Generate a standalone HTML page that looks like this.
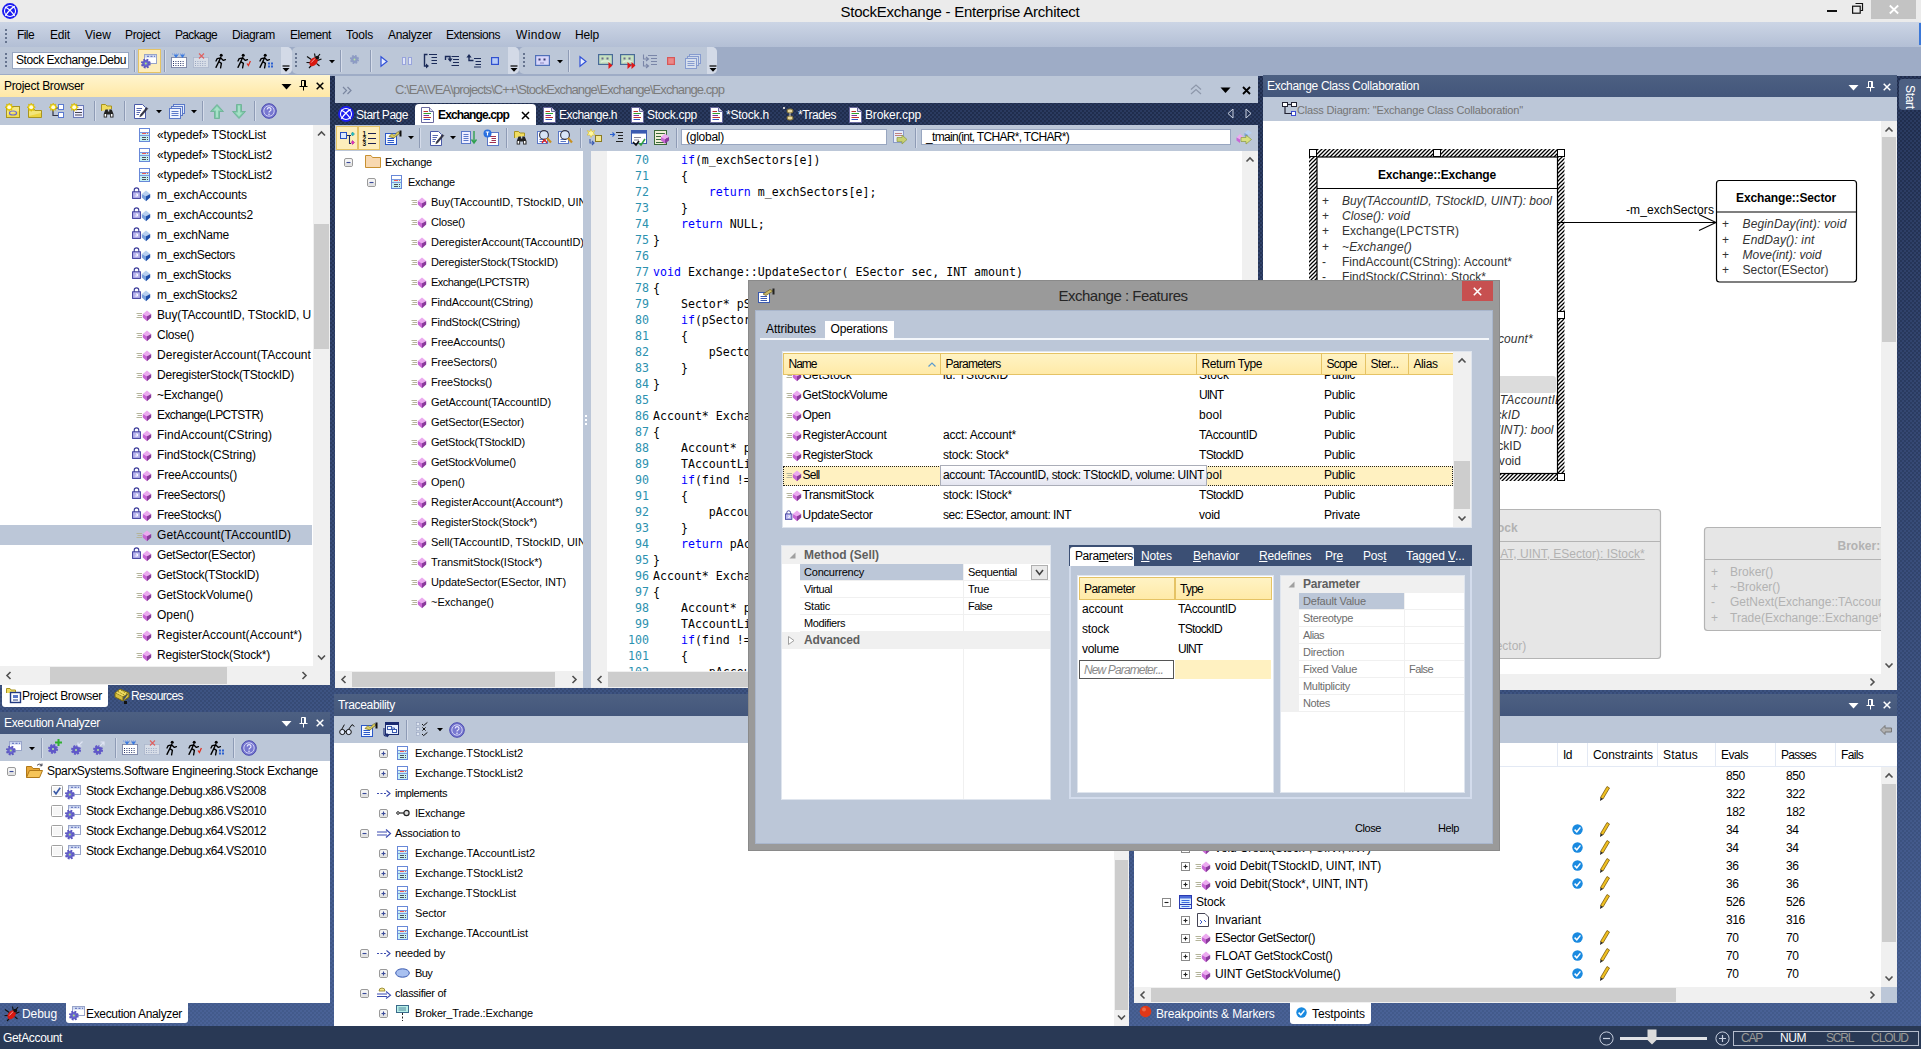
<!DOCTYPE html>
<html><head><meta charset="utf-8"><title>StockExchange - Enterprise Architect</title>
<style>
html,body{margin:0;padding:0;}
body{width:1921px;height:1049px;position:relative;overflow:hidden;background:repeating-conic-gradient(rgba(110,140,215,.14) 0% 25%,transparent 0% 50%) 0 0/4px 4px,linear-gradient(to bottom,#1e2b4a 76px,#435b8c 1026px);font-family:"Liberation Sans",sans-serif;font-size:12px;color:#000;}
div,svg{position:absolute;box-sizing:border-box;}
svg{overflow:visible;}
.t{white-space:nowrap;overflow:visible;}
.t span{display:inline-block;}
.ui{font-family:"Liberation Sans",sans-serif;font-size:12px;}
.th{font-family:"Liberation Sans",sans-serif;font-size:11px;}
.ar{font-family:"Liberation Sans",sans-serif;font-size:12px;}
.code{font-family:"DejaVu Sans Mono","Liberation Mono",monospace;font-size:11.6px;white-space:pre;}
.w{color:#fff;}
.b{font-weight:bold;}
.i{font-style:italic;}
.dots{background:none;}
.tb{background:#bcc7d8;}
.cap{background:linear-gradient(#4d6082,#43567b);}
.capa{background:linear-gradient(#fff5cf,#ffe8a6);}
.hdr{background:linear-gradient(#fff3c4,#ffeaa8);border:1px solid #e5c365;}
</style></head>
<body>
<div style="left:0px;top:0px;width:1921px;height:22px;background:#ebebeb"></div>
<svg style="left:2px;top:3px;" width="16" height="16" viewBox="0 0 16 16"><circle cx="8" cy="8" r="7" fill="#fff" stroke="#1c1cf0" stroke-width="1.9"/><circle cx="8" cy="8" r="5" fill="#1c1cf0"/><path d="M3 4C6.5 5.5 10.5 9.5 12.6 13M12.8 3.4C9.5 5 5.5 9.5 3.4 12.8" fill="none" stroke="#fff" stroke-width="1.25"/></svg>
<div class="t ui" style="left:560px;width:800px;text-align:center;top:0px;height:23px;line-height:23px;letter-spacing:-0.240px;font-size:15px;"><span id="t1">StockExchange - Enterprise Architect</span></div>
<div style="left:1827px;top:10px;width:10px;height:2px;background:#111"></div>
<svg style="left:1852px;top:3px;" width="12" height="12" viewBox="0 0 12 12"><path d="M3.5 0.5H10.5V7.5H8.5" fill="none" stroke="#111" stroke-width="1.2"/><rect x="0.6" y="3.2" width="7.6" height="7" fill="none" stroke="#111" stroke-width="1.2"/></svg>
<div style="left:1871px;top:0px;width:45px;height:19px;background:#c3c3c3"></div>
<svg style="left:1889px;top:5px;" width="10" height="9" viewBox="0 0 10 9"><path d="M0.8 0.5L9.2 8.5M9.2 0.5L0.8 8.5" stroke="#fff" stroke-width="1.8"/></svg>
<div style="left:0px;top:22px;width:1921px;height:25px;background:linear-gradient(#ccd5e5,#b3bfd5)"></div>
<div style="left:5px;top:29px;width:2px;height:2px;background:#66748f"></div>
<div style="left:5px;top:33px;width:2px;height:2px;background:#66748f"></div>
<div style="left:5px;top:37px;width:2px;height:2px;background:#66748f"></div>
<div style="left:5px;top:41px;width:2px;height:2px;background:#66748f"></div>
<div class="t ui" style="left:17px;top:23px;height:24px;line-height:24px;letter-spacing:-0.586px;"><span id="t2">File</span></div>
<div class="t ui" style="left:50px;top:23px;height:24px;line-height:24px;letter-spacing:-0.172px;"><span id="t3">Edit</span></div>
<div class="t ui" style="left:85px;top:23px;height:24px;line-height:24px;letter-spacing:0.051px;"><span id="t4">View</span></div>
<div class="t ui" style="left:125px;top:23px;height:24px;line-height:24px;letter-spacing:-0.337px;"><span id="t5">Project</span></div>
<div class="t ui" style="left:175px;top:23px;height:24px;line-height:24px;letter-spacing:-0.672px;"><span id="t6">Package</span></div>
<div class="t ui" style="left:232px;top:23px;height:24px;line-height:24px;letter-spacing:-0.337px;"><span id="t7">Diagram</span></div>
<div class="t ui" style="left:290px;top:23px;height:24px;line-height:24px;letter-spacing:-0.433px;"><span id="t8">Element</span></div>
<div class="t ui" style="left:346px;top:23px;height:24px;line-height:24px;letter-spacing:-0.203px;"><span id="t9">Tools</span></div>
<div class="t ui" style="left:388px;top:23px;height:24px;line-height:24px;letter-spacing:-0.336px;"><span id="t10">Analyzer</span></div>
<div class="t ui" style="left:446px;top:23px;height:24px;line-height:24px;letter-spacing:-0.470px;"><span id="t11">Extensions</span></div>
<div class="t ui" style="left:516px;top:23px;height:24px;line-height:24px;letter-spacing:0.385px;"><span id="t12">Window</span></div>
<div class="t ui" style="left:575px;top:23px;height:24px;line-height:24px;letter-spacing:-0.172px;"><span id="t13">Help</span></div>
<div style="left:1919px;top:23px;width:2px;height:22px;background:#3b78d8"></div>
<div style="left:0px;top:47px;width:1921px;height:29px;background:#9eacc6"></div>
<div style="left:0px;top:47px;width:292px;height:27px;background:#bcc7d8;border-radius:0 5px 5px 0"></div>
<div style="left:281px;top:47px;width:11px;height:27px;background:#d3dae7;border-radius:0 5px 5px 0"></div>
<div style="left:5px;top:53px;width:2px;height:2px;background:#66748f"></div>
<div style="left:5px;top:57px;width:2px;height:2px;background:#66748f"></div>
<div style="left:5px;top:61px;width:2px;height:2px;background:#66748f"></div>
<div style="left:5px;top:65px;width:2px;height:2px;background:#66748f"></div>
<div style="left:12px;top:52px;width:117px;height:17px;background:#fff;border:1px solid #98a6c0"></div>
<div class="t ui" style="left:16px;top:52px;height:17px;line-height:17px;letter-spacing:-0.461px;"><span id="t14">Stock Exchange.Debu</span></div>
<div style="left:134px;top:50px;width:1px;height:22px;background:#8e9bb5"></div><div style="left:135px;top:50px;width:1px;height:22px;background:#d5dcea"></div>
<div style="left:138px;top:49px;width:23px;height:24px;background:#fdedbb;border:1px solid #e5c365"></div>
<svg style="left:141px;top:54px;" width="17" height="15" viewBox="0 0 17 15"><rect x="3.5" y="0.5" width="12" height="9" fill="#fff" stroke="#98a4c8"/><rect x="4" y="1" width="11" height="2.6" fill="#ccd6f0"/><path d="M6 2.3h2M9.5 2.3h2M13 2.3h1" stroke="#5868b8" stroke-width="1"/><circle cx="4.8" cy="9.6" r="3.6" fill="#6c68d0" stroke="#5c58c0" stroke-width="2.6" stroke-dasharray="1.7 1.15"/><circle cx="4.8" cy="9.6" r="1" fill="#b0e878"/></svg>
<div style="left:164px;top:50px;width:1px;height:22px;background:#8e9bb5"></div><div style="left:165px;top:50px;width:1px;height:22px;background:#d5dcea"></div>
<svg style="left:171px;top:53px;" width="16" height="15" viewBox="0 0 16 15"><rect x="0.5" y="4.5" width="15" height="10" fill="#fff" fill-opacity="1" stroke="#28356a" stroke-dasharray="1 1"/><path d="M2 8.5H14M2 10.5H14M2 12.5H14" stroke="#28356a" stroke-dasharray="1 1.4"/><path d="M2.5 1.5L5 5L7.5 1.5ZM9 1.5L11.5 5L14 1.5Z" fill="#3a7ae0"/><path d="M1 1H15" stroke="#7a9adf" stroke-dasharray="1 1"/></svg>
<svg style="left:193px;top:53px;" width="16" height="15" viewBox="0 0 16 15"><rect x="0.5" y="4.5" width="15" height="10" fill="#fff" fill-opacity="0.4" stroke="#9aa6c0" stroke-dasharray="1 1"/><path d="M2 8.5H14M2 10.5H14M2 12.5H14" stroke="#9aa6c0" stroke-dasharray="1 1.4"/><path d="M6 0.5L11 5.5M11 0.5L6 5.5" stroke="#e06060" stroke-width="1.1"/></svg>
<svg style="left:213px;top:53px;" width="16" height="16" viewBox="0 0 16 16"><circle cx="8.2" cy="2.3" r="1.5" fill="#000"/><path d="M7.8 4.2L5.8 8.6L8.4 10.4L7.6 14.8M5.8 8.6L3 14.4M7.4 5L4.2 5.6L3 8M7.8 5L10.4 7.4L12.4 6.6" fill="none" stroke="#000" stroke-width="1.35" stroke-linecap="round" stroke-linejoin="round"/></svg>
<svg style="left:235px;top:53px;" width="16" height="16" viewBox="0 0 16 16"><circle cx="8.2" cy="2.3" r="1.5" fill="#000"/><path d="M7.8 4.2L5.8 8.6L8.4 10.4L7.6 14.8M5.8 8.6L3 14.4M7.4 5L4.2 5.6L3 8M7.8 5L10.4 7.4L12.4 6.6" fill="none" stroke="#000" stroke-width="1.35" stroke-linecap="round" stroke-linejoin="round"/><path d="M12 10.5L13.4 12.5L15.4 8" fill="none" stroke="#e03020" stroke-width="1.3"/></svg>
<svg style="left:257px;top:53px;" width="16" height="16" viewBox="0 0 16 16"><circle cx="8.2" cy="2.3" r="1.5" fill="#000"/><path d="M7.8 4.2L5.8 8.6L8.4 10.4L7.6 14.8M5.8 8.6L3 14.4M7.4 5L4.2 5.6L3 8M7.8 5L10.4 7.4L12.4 6.6" fill="none" stroke="#000" stroke-width="1.35" stroke-linecap="round" stroke-linejoin="round"/><rect x="11" y="9.5" width="2" height="2" fill="#2a60d0"/><rect x="14" y="9.5" width="2" height="2" fill="#2a60d0"/><rect x="11" y="12.5" width="2" height="2" fill="#2a60d0"/><rect x="14" y="12.5" width="2" height="2" fill="#2a60d0"/></svg>
<svg style="left:282px;top:65px;" width="8" height="7" viewBox="0 0 8 7"><path d="M0.5 1H7.5" stroke="#000" stroke-width="1.2"/><path d="M0.5 3H7.5L4 6.8Z" fill="#000"/></svg>
<div style="left:292px;top:47px;width:227px;height:27px;background:#bcc7d8;border-radius:5px"></div>
<div style="left:508px;top:47px;width:11px;height:27px;background:#d3dae7;border-radius:0 5px 5px 0"></div>
<div style="left:295px;top:53px;width:2px;height:2px;background:#66748f"></div>
<div style="left:295px;top:57px;width:2px;height:2px;background:#66748f"></div>
<div style="left:295px;top:61px;width:2px;height:2px;background:#66748f"></div>
<div style="left:295px;top:65px;width:2px;height:2px;background:#66748f"></div>
<svg style="left:306px;top:53px;" width="16" height="16" viewBox="0 0 16 16"><path d="M1 3.5L6 7M0.5 9.5L5 9.6M3 15L6.4 11.4M8.5 0.5L9.4 5M15.5 6L11 7.6M13.5 13L10.4 10.4M14 1L11.6 4" stroke="#111" stroke-width="1.2" fill="none"/><ellipse cx="7.6" cy="8.8" rx="3.5" ry="5" fill="#d81810" transform="rotate(40 7.6 8.8)"/><path d="M5.2 9.6L9.2 5.4" stroke="#f8a0a0" stroke-width="1"/><circle cx="11.3" cy="4.6" r="1.9" fill="#111"/></svg>
<svg style="left:329px;top:60px;" width="6" height="4" viewBox="0 0 6 4"><path d="M0 0H6L3 3.2Z" fill="#000"/></svg>
<div style="left:340px;top:50px;width:1px;height:22px;background:#8e9bb5"></div><div style="left:341px;top:50px;width:1px;height:22px;background:#d5dcea"></div>
<svg style="left:349px;top:53.5px;" width="11" height="11" viewBox="0 0 12 12"><circle cx="6" cy="6" r="3.7" fill="#8e9cc4" stroke="#8e9cc4" stroke-width="2.6" stroke-dasharray="1.75 1.15"/><circle cx="6" cy="6" r="1" fill="#b8e8a0"/></svg>
<div style="left:370px;top:50px;width:1px;height:22px;background:#8e9bb5"></div><div style="left:371px;top:50px;width:1px;height:22px;background:#d5dcea"></div>
<svg style="left:380px;top:56px;" width="8" height="11" viewBox="0 0 8 11"><path d="M1 0.8L7 5.5L1 10.2Z" fill="#e8eeff" stroke="#3050d8" stroke-width="1.2"/></svg>
<svg style="left:402px;top:57px;" width="11" height="8" viewBox="0 0 11 8"><rect x="0.5" y="0.5" width="3" height="7" fill="#dfe4f8" stroke="#98a4dc"/><rect x="6.5" y="0.5" width="3" height="7" fill="#dfe4f8" stroke="#98a4dc"/></svg>
<svg style="left:422px;top:53px;" width="16" height="16" viewBox="0 0 16 16"><path d="M7 1.5H15M9.5 4.5H15M9.5 7.5H15M9.5 10.5H15" stroke="#1a2a58" stroke-width="1"/><path d="M5.5 1.5H2.5V13H4.5" fill="none" stroke="#1a2a58" stroke-width="1.4"/><path d="M4 10.6L7 13L4 15.4Z" fill="#1a2a58"/></svg>
<svg style="left:444px;top:53px;" width="16" height="16" viewBox="0 0 16 16"><path d="M7.5 3.5H15M9 6.5H15M9 9.5H15M7.5 12.5H15" stroke="#1a2a58" stroke-width="1"/><path d="M1.5 7V3.5H6V6" fill="none" stroke="#1a2a58" stroke-width="1.4"/><path d="M3.5 5.5L6.2 9L8.6 5.5Z" fill="#1a2a58"/></svg>
<svg style="left:466px;top:53px;" width="16" height="16" viewBox="0 0 16 16"><path d="M8 5.5H15M9.5 8.5H15M9.5 11.5H15M8 14H15" stroke="#1a2a58" stroke-width="1"/><path d="M7.5 7.5H3V3.5" fill="none" stroke="#1a2a58" stroke-width="1.4"/><path d="M0.4 4.6L3 1L5.6 4.6Z" fill="#1a2a58"/></svg>
<svg style="left:491px;top:57px;" width="8" height="8" viewBox="0 0 8 8"><rect x="0.6" y="0.6" width="6.8" height="6.8" fill="#b8ccf8" stroke="#3050d0" stroke-width="1.2"/></svg>
<svg style="left:510px;top:65px;" width="8" height="7" viewBox="0 0 8 7"><path d="M0.5 1H7.5" stroke="#000" stroke-width="1.2"/><path d="M0.5 3H7.5L4 6.8Z" fill="#000"/></svg>
<div style="left:519px;top:47px;width:198px;height:27px;background:#bcc7d8;border-radius:5px"></div>
<div style="left:707px;top:47px;width:10px;height:27px;background:#d3dae7;border-radius:0 5px 5px 0"></div>
<div style="left:523px;top:53px;width:2px;height:2px;background:#66748f"></div>
<div style="left:523px;top:57px;width:2px;height:2px;background:#66748f"></div>
<div style="left:523px;top:61px;width:2px;height:2px;background:#66748f"></div>
<div style="left:523px;top:65px;width:2px;height:2px;background:#66748f"></div>
<svg style="left:535px;top:55px;" width="15" height="11" viewBox="0 0 15 11"><rect x="0.6" y="0.6" width="13.8" height="9.8" fill="#d8d6fa" stroke="#5070b8" stroke-width="1.2"/><rect x="3.5" y="3.5" width="2" height="2" fill="#3a3a70"/><rect x="8.5" y="3.5" width="2" height="2" fill="#3a3a70"/><path d="M5 8H9" stroke="#8a88c0"/></svg>
<svg style="left:557px;top:60px;" width="6" height="4" viewBox="0 0 6 4"><path d="M0 0H6L3 3.2Z" fill="#000"/></svg>
<div style="left:568px;top:50px;width:1px;height:22px;background:#8e9bb5"></div><div style="left:569px;top:50px;width:1px;height:22px;background:#d5dcea"></div>
<svg style="left:579px;top:56px;" width="8" height="11" viewBox="0 0 8 11"><path d="M1 0.8L7 5.5L1 10.2Z" fill="#e8eeff" stroke="#3050d8" stroke-width="1.2"/></svg>
<svg style="left:598px;top:54px;" width="16" height="16" viewBox="0 0 16 16"><rect x="0.6" y="0.6" width="13.8" height="9.8" fill="#c6e0c0" stroke="#486a98" stroke-width="1.2"/><rect x="3.5" y="3.5" width="2" height="2" fill="#6a6a88"/><rect x="8.5" y="3.5" width="2" height="2" fill="#6a6a88"/><path d="M3 8.2L5 7H10L12 8.2" fill="none" stroke="#e8f4e4" stroke-width="1"/><path d="M10.5 8L14.5 11.5L10.5 15Z" fill="#e01818"/></svg>
<svg style="left:620px;top:54px;" width="16" height="16" viewBox="0 0 16 16"><rect x="0.6" y="0.6" width="13.8" height="9.8" fill="#c6e0c0" stroke="#486a98" stroke-width="1.2"/><rect x="3.5" y="3.5" width="2" height="2" fill="#6a6a88"/><rect x="8.5" y="3.5" width="2" height="2" fill="#6a6a88"/><path d="M3 8.2L5 7H10L12 8.2" fill="none" stroke="#e8f4e4" stroke-width="1"/><path d="M7.5 8L11.5 11.5L7.5 15ZM11.5 8L15.5 11.5L11.5 15Z" fill="#e01818"/></svg>
<svg style="left:643px;top:54px;" width="15" height="15" viewBox="0 0 15 15"><path d="M5 1.5H14M8 4.5H14M8 7.5H14M8 10.5H14" stroke="#7a86a8" stroke-width="1.1"/><path d="M0.5 0.5V5H5M0.5 7V12H5M3 3L5.5 5L3 7M3 10L5.5 12L3 14" fill="none" stroke="#7a86a8" stroke-width="1.1"/></svg>
<svg style="left:667px;top:57px;" width="8" height="8" viewBox="0 0 8 8"><rect x="0.6" y="0.6" width="6.8" height="6.8" fill="#ec8888" stroke="#d85858" stroke-width="1.2"/></svg>
<svg style="left:685px;top:54px;opacity:.55;" width="16" height="15" viewBox="0 0 16 15"><rect x="4.5" y="0.5" width="11" height="9" fill="#dfe8fa" stroke="#5a78c8"/><rect x="2.5" y="2.5" width="11" height="9" fill="#dfe8fa" stroke="#5a78c8"/><rect x="0.5" y="4.5" width="11" height="10" fill="#eef3ff" stroke="#5a78c8"/><path d="M2.5 7.5H9.5M2.5 9.5H9.5M2.5 11.5H9.5" stroke="#5a78c8"/></svg>
<svg style="left:709px;top:65px;" width="8" height="7" viewBox="0 0 8 7"><path d="M0.5 1H7.5" stroke="#000" stroke-width="1.2"/><path d="M0.5 3H7.5L4 6.8Z" fill="#000"/></svg>
<div class="capa" style="left:0px;top:75px;width:330px;height:22px;"></div>
<div class="t ui" style="left:4px;top:75px;height:22px;line-height:22px;letter-spacing:-0.314px;"><span id="t15">Project Browser</span></div>
<svg style="left:281px;top:83px;" width="12" height="8" viewBox="0 0 12 8"><path d="M0.5 1H10.5L5.5 6.5Z" fill="#000"/></svg>
<svg style="left:299px;top:80px;" width="9" height="12" viewBox="0 0 9 12"><path d="M2.5 0.5H6.5V6.5M2.5 0.5V6.5M0.5 6.5H8.5M4.5 6.5V10.5M5.5 1V6" fill="none" stroke="#000" stroke-width="1"/></svg>
<svg style="left:316px;top:82px;" width="8" height="8" viewBox="0 0 8 8"><path d="M0.7 0.7L7.3 7.3M7.3 0.7L0.7 7.3" stroke="#000" stroke-width="1.5"/></svg>
<div class="tb" style="left:0px;top:97px;width:330px;height:28px;"></div>
<svg style="left:5px;top:103px;" width="16" height="16" viewBox="0 0 16 16"><rect x="1.5" y="3.5" width="13" height="11" fill="#f0dc50" stroke="#a89420"/><path d="M2 4H14V8L2 12Z" fill="#f8f0a0" fill-opacity=".6"/><ellipse cx="8" cy="10" rx="3.6" ry="2" fill="none" stroke="#6a6ad0" stroke-width="1.2"/><path d="M4.2 0L5 1.8L6.9 1.1L6.6 3L8.4 4.2L6.6 5.3L6.9 7.3L5 6.6L4.2 8.4L3.4 6.6L1.5 7.3L1.8 5.3L0 4.2L1.8 3L1.5 1.1L3.4 1.8Z" fill="#f4d800" stroke="#c8a800" stroke-width=".5"/><circle cx="4.2" cy="4.2" r="1.9" fill="#fffbe0"/></svg>
<svg style="left:27px;top:103px;" width="16" height="16" viewBox="0 0 16 16"><path d="M1.5 14.5V5.5H6.5L8 7.5H14.5V14.5Z" fill="#ecd440" stroke="#a89420"/><path d="M2 8H14V10L2 13Z" fill="#f8f0a0" fill-opacity=".6"/><path d="M4.2 0L5 1.8L6.9 1.1L6.6 3L8.4 4.2L6.6 5.3L6.9 7.3L5 6.6L4.2 8.4L3.4 6.6L1.5 7.3L1.8 5.3L0 4.2L1.8 3L1.5 1.1L3.4 1.8Z" fill="#f4d800" stroke="#c8a800" stroke-width=".5"/><circle cx="4.2" cy="4.2" r="1.9" fill="#fffbe0"/></svg>
<svg style="left:49px;top:103px;" width="16" height="16" viewBox="0 0 16 16"><path d="M4 6V12.5H9M4 5H9" fill="none" stroke="#334" stroke-width="1.2"/><rect x="9.5" y="1.5" width="5" height="5" fill="#fff" stroke="#5a7ad0"/><rect x="9.5" y="9.5" width="5" height="5" fill="#fff" stroke="#5a7ad0"/><path d="M4.2 0L5 1.8L6.9 1.1L6.6 3L8.4 4.2L6.6 5.3L6.9 7.3L5 6.6L4.2 8.4L3.4 6.6L1.5 7.3L1.8 5.3L0 4.2L1.8 3L1.5 1.1L3.4 1.8Z" fill="#f4d800" stroke="#c8a800" stroke-width=".5"/><circle cx="4.2" cy="4.2" r="1.9" fill="#fffbe0"/></svg>
<svg style="left:70px;top:103px;" width="16" height="16" viewBox="0 0 16 16"><rect x="3.5" y="2.5" width="10" height="12" fill="#eef" stroke="#6a7ab8"/><path d="M5 6.5H12M5 9.5H12M5 12H12" stroke="#445" stroke-width="1.2"/><path d="M4.2 0L5 1.8L6.9 1.1L6.6 3L8.4 4.2L6.6 5.3L6.9 7.3L5 6.6L4.2 8.4L3.4 6.6L1.5 7.3L1.8 5.3L0 4.2L1.8 3L1.5 1.1L3.4 1.8Z" fill="#f4d800" stroke="#c8a800" stroke-width=".5"/><circle cx="4.2" cy="4.2" r="1.9" fill="#fffbe0"/></svg>
<div style="left:94px;top:101px;width:1px;height:20px;background:#8e9bb5"></div><div style="left:95px;top:101px;width:1px;height:20px;background:#d5dcea"></div>
<svg style="left:101px;top:103px;" width="16" height="16" viewBox="0 0 16 16"><path d="M0.5 8V1.5H4.5L6 3H10.5V6" fill="#f0dc60" stroke="#a89420"/><path d="M4.5 6.5h2.4v2h1.4v-2h2.4l1.8 4.5v3.5h-3.4v-3h-3v3H2.7v-3.5z" fill="#222"/><rect x="3.6" y="11" width="1.6" height="2.6" fill="#fff"/><rect x="9.9" y="11" width="1.6" height="2.6" fill="#fff"/></svg>
<div style="left:124px;top:101px;width:1px;height:20px;background:#8e9bb5"></div><div style="left:125px;top:101px;width:1px;height:20px;background:#d5dcea"></div>
<svg style="left:134px;top:103px;" width="14" height="16" viewBox="0 0 14 16"><path d="M0.5 1.5H8.5L11.5 4.5V15.5H0.5Z" fill="#fff" stroke="#4a5aa8"/><path d="M2.5 5.5H8M2.5 7.5H7M2.5 9.5H6M2.5 11.5H5" stroke="#5a6ab0"/><path d="M12.6 4.4L6.6 11.6L5.8 13.8L7.8 12.8L13.8 5.6Z" fill="#334" stroke="#223" stroke-width=".5"/></svg>
<svg style="left:156px;top:110px;" width="6" height="4" viewBox="0 0 6 4"><path d="M0 0H6L3 3.2Z" fill="#000"/></svg>
<svg style="left:169px;top:104px;" width="16" height="15" viewBox="0 0 16 15"><rect x="4.5" y="0.5" width="11" height="9" fill="#dfe8fa" stroke="#5a78c8"/><rect x="2.5" y="2.5" width="11" height="9" fill="#dfe8fa" stroke="#5a78c8"/><rect x="0.5" y="4.5" width="11" height="10" fill="#eef3ff" stroke="#5a78c8"/><path d="M2.5 7.5H9.5M2.5 9.5H9.5M2.5 11.5H9.5" stroke="#5a78c8"/></svg>
<svg style="left:191px;top:110px;" width="6" height="4" viewBox="0 0 6 4"><path d="M0 0H6L3 3.2Z" fill="#000"/></svg>
<div style="left:202px;top:101px;width:1px;height:20px;background:#8e9bb5"></div><div style="left:203px;top:101px;width:1px;height:20px;background:#d5dcea"></div>
<svg style="left:210px;top:104px;" width="14" height="15" viewBox="0 0 14 15"><g><path d="M7 0.5L13.5 7.5H9.5V14.5H4.5V7.5H0.5Z" fill="#7cc8a8" stroke="#68b090" stroke-width=".8"/><path d="M7 2.5L10.5 6.5H8V13.5H6V6.5H3.5Z" fill="#a8e0c8"/></g></svg>
<svg style="left:232px;top:104px;" width="14" height="15" viewBox="0 0 14 15"><g transform="rotate(180 7 7.5)"><path d="M7 0.5L13.5 7.5H9.5V14.5H4.5V7.5H0.5Z" fill="#7cc8a8" stroke="#68b090" stroke-width=".8"/><path d="M7 2.5L10.5 6.5H8V13.5H6V6.5H3.5Z" fill="#a8e0c8"/></g></svg>
<div style="left:254px;top:101px;width:1px;height:20px;background:#8e9bb5"></div><div style="left:255px;top:101px;width:1px;height:20px;background:#d5dcea"></div>
<svg style="left:261px;top:103px;" width="16" height="16" viewBox="0 0 16 16"><circle cx="8" cy="8" r="7.3" fill="#7878d0" stroke="#4a4ab0"/><circle cx="8" cy="8" r="5.2" fill="none" stroke="#cfcff4" stroke-width="1"/><path d="M6.2 6.4a1.9 1.9 0 1 1 2.6 1.8c-.6.3-.8.6-.8 1.4" fill="none" stroke="#e8e8ff" stroke-width="1.2"/><circle cx="8" cy="11.3" r=".8" fill="#e8e8ff"/></svg>
<div style="left:0px;top:125px;width:330px;height:541px;background:#fff"></div>
<div style="left:0px;top:525px;width:312px;height:20px;background:#bcc7d8"></div>
<div style="left:0;top:125px;width:311px;height:541px;overflow:hidden">
<svg style="left:139px;top:3px;" width="11" height="14" viewBox="0 0 11 14"><rect x="0.5" y="0.5" width="10" height="13" fill="#c4f0f4" stroke="#6888d8"/><rect x="1" y="1" width="9" height="3" fill="#fff"/><path d="M1 4.5H10M1 7.5H10" stroke="#7c9ae0" stroke-width="1"/><path d="M3 5.5H7" stroke="#f05858" stroke-width="1"/><rect x="8" y="5" width="1" height="1" fill="#f05858"/><path d="M3 9.5H7M3 11.5H7" stroke="#4a5058" stroke-width="1"/><rect x="8" y="9" width="1" height="1" fill="#4a5058"/><rect x="8" y="11" width="1" height="1" fill="#4a5058"/></svg>
<div class="t ui" style="left:157px;top:0px;height:20px;line-height:20px;letter-spacing:-0.142px;"><span id="t16">«typedef» TStockList</span></div>
<svg style="left:139px;top:23px;" width="11" height="14" viewBox="0 0 11 14"><rect x="0.5" y="0.5" width="10" height="13" fill="#c4f0f4" stroke="#6888d8"/><rect x="1" y="1" width="9" height="3" fill="#fff"/><path d="M1 4.5H10M1 7.5H10" stroke="#7c9ae0" stroke-width="1"/><path d="M3 5.5H7" stroke="#f05858" stroke-width="1"/><rect x="8" y="5" width="1" height="1" fill="#f05858"/><path d="M3 9.5H7M3 11.5H7" stroke="#4a5058" stroke-width="1"/><rect x="8" y="9" width="1" height="1" fill="#4a5058"/><rect x="8" y="11" width="1" height="1" fill="#4a5058"/></svg>
<div class="t ui" style="left:157px;top:20px;height:20px;line-height:20px;letter-spacing:-0.168px;"><span id="t17">«typedef» TStockList2</span></div>
<svg style="left:139px;top:43px;" width="11" height="14" viewBox="0 0 11 14"><rect x="0.5" y="0.5" width="10" height="13" fill="#c4f0f4" stroke="#6888d8"/><rect x="1" y="1" width="9" height="3" fill="#fff"/><path d="M1 4.5H10M1 7.5H10" stroke="#7c9ae0" stroke-width="1"/><path d="M3 5.5H7" stroke="#f05858" stroke-width="1"/><rect x="8" y="5" width="1" height="1" fill="#f05858"/><path d="M3 9.5H7M3 11.5H7" stroke="#4a5058" stroke-width="1"/><rect x="8" y="9" width="1" height="1" fill="#4a5058"/><rect x="8" y="11" width="1" height="1" fill="#4a5058"/></svg>
<div class="t ui" style="left:157px;top:40px;height:20px;line-height:20px;letter-spacing:-0.168px;"><span id="t18">«typedef» TStockList2</span></div>
<svg style="left:132px;top:62px;" width="9" height="12" viewBox="0 0 9 12"><path d="M2.2 5V3.2a2.3 2.3 0 0 1 4.6 0V5" fill="none" stroke="#3a3a9a" stroke-width="1.1"/><rect x="0.6" y="4.8" width="7.8" height="6.6" fill="#b9b5ee" stroke="#3a3a9a"/><path d="M4 7h1.4v2H3.4" fill="none" stroke="#fff" stroke-width="1"/></svg>
<svg style="left:141px;top:65px;" width="10" height="12" viewBox="0 0 10 12"><path d="M5 0.5L9.2 4L5 6.2L0.8 4Z" fill="#b8d0f0"/><path d="M0.8 4L5 6.2V11.3L0.8 7.6Z" fill="#7aa0dc"/><path d="M9.2 4L5 6.2V11.3L9.2 7.6Z" fill="#1e4ea8"/></svg>
<div class="t ui" style="left:157px;top:60px;height:20px;line-height:20px;letter-spacing:-0.099px;"><span id="t19">m_exchAccounts</span></div>
<svg style="left:132px;top:82px;" width="9" height="12" viewBox="0 0 9 12"><path d="M2.2 5V3.2a2.3 2.3 0 0 1 4.6 0V5" fill="none" stroke="#3a3a9a" stroke-width="1.1"/><rect x="0.6" y="4.8" width="7.8" height="6.6" fill="#b9b5ee" stroke="#3a3a9a"/><path d="M4 7h1.4v2H3.4" fill="none" stroke="#fff" stroke-width="1"/></svg>
<svg style="left:141px;top:85px;" width="10" height="12" viewBox="0 0 10 12"><path d="M5 0.5L9.2 4L5 6.2L0.8 4Z" fill="#b8d0f0"/><path d="M0.8 4L5 6.2V11.3L0.8 7.6Z" fill="#7aa0dc"/><path d="M9.2 4L5 6.2V11.3L9.2 7.6Z" fill="#1e4ea8"/></svg>
<div class="t ui" style="left:157px;top:80px;height:20px;line-height:20px;letter-spacing:-0.138px;"><span id="t20">m_exchAccounts2</span></div>
<svg style="left:132px;top:102px;" width="9" height="12" viewBox="0 0 9 12"><path d="M2.2 5V3.2a2.3 2.3 0 0 1 4.6 0V5" fill="none" stroke="#3a3a9a" stroke-width="1.1"/><rect x="0.6" y="4.8" width="7.8" height="6.6" fill="#b9b5ee" stroke="#3a3a9a"/><path d="M4 7h1.4v2H3.4" fill="none" stroke="#fff" stroke-width="1"/></svg>
<svg style="left:141px;top:105px;" width="10" height="12" viewBox="0 0 10 12"><path d="M5 0.5L9.2 4L5 6.2L0.8 4Z" fill="#b8d0f0"/><path d="M0.8 4L5 6.2V11.3L0.8 7.6Z" fill="#7aa0dc"/><path d="M9.2 4L5 6.2V11.3L9.2 7.6Z" fill="#1e4ea8"/></svg>
<div class="t ui" style="left:157px;top:100px;height:20px;line-height:20px;letter-spacing:-0.203px;"><span id="t21">m_exchName</span></div>
<svg style="left:132px;top:122px;" width="9" height="12" viewBox="0 0 9 12"><path d="M2.2 5V3.2a2.3 2.3 0 0 1 4.6 0V5" fill="none" stroke="#3a3a9a" stroke-width="1.1"/><rect x="0.6" y="4.8" width="7.8" height="6.6" fill="#b9b5ee" stroke="#3a3a9a"/><path d="M4 7h1.4v2H3.4" fill="none" stroke="#fff" stroke-width="1"/></svg>
<svg style="left:141px;top:125px;" width="10" height="12" viewBox="0 0 10 12"><path d="M5 0.5L9.2 4L5 6.2L0.8 4Z" fill="#b8d0f0"/><path d="M0.8 4L5 6.2V11.3L0.8 7.6Z" fill="#7aa0dc"/><path d="M9.2 4L5 6.2V11.3L9.2 7.6Z" fill="#1e4ea8"/></svg>
<div class="t ui" style="left:157px;top:120px;height:20px;line-height:20px;letter-spacing:-0.362px;"><span id="t22">m_exchSectors</span></div>
<svg style="left:132px;top:142px;" width="9" height="12" viewBox="0 0 9 12"><path d="M2.2 5V3.2a2.3 2.3 0 0 1 4.6 0V5" fill="none" stroke="#3a3a9a" stroke-width="1.1"/><rect x="0.6" y="4.8" width="7.8" height="6.6" fill="#b9b5ee" stroke="#3a3a9a"/><path d="M4 7h1.4v2H3.4" fill="none" stroke="#fff" stroke-width="1"/></svg>
<svg style="left:141px;top:145px;" width="10" height="12" viewBox="0 0 10 12"><path d="M5 0.5L9.2 4L5 6.2L0.8 4Z" fill="#b8d0f0"/><path d="M0.8 4L5 6.2V11.3L0.8 7.6Z" fill="#7aa0dc"/><path d="M9.2 4L5 6.2V11.3L9.2 7.6Z" fill="#1e4ea8"/></svg>
<div class="t ui" style="left:157px;top:140px;height:20px;line-height:20px;letter-spacing:-0.336px;"><span id="t23">m_exchStocks</span></div>
<svg style="left:132px;top:162px;" width="9" height="12" viewBox="0 0 9 12"><path d="M2.2 5V3.2a2.3 2.3 0 0 1 4.6 0V5" fill="none" stroke="#3a3a9a" stroke-width="1.1"/><rect x="0.6" y="4.8" width="7.8" height="6.6" fill="#b9b5ee" stroke="#3a3a9a"/><path d="M4 7h1.4v2H3.4" fill="none" stroke="#fff" stroke-width="1"/></svg>
<svg style="left:141px;top:165px;" width="10" height="12" viewBox="0 0 10 12"><path d="M5 0.5L9.2 4L5 6.2L0.8 4Z" fill="#b8d0f0"/><path d="M0.8 4L5 6.2V11.3L0.8 7.6Z" fill="#7aa0dc"/><path d="M9.2 4L5 6.2V11.3L9.2 7.6Z" fill="#1e4ea8"/></svg>
<div class="t ui" style="left:157px;top:160px;height:20px;line-height:20px;letter-spacing:-0.362px;"><span id="t24">m_exchStocks2</span></div>
<svg style="left:136px;top:185px;" width="16" height="12" viewBox="0 0 16 12"><path d="M0.5 3.5H6M1.5 5.5H6M0.5 7.5H6" stroke="#b4b49a" stroke-width="1"/><path d="M11 0.5L15.2 4L11 6.2L6.8 4Z" fill="#ecaaf0"/><path d="M6.8 4L11 6.2V11.3L6.8 7.6Z" fill="#c866d4"/><path d="M15.2 4L11 6.2V11.3L15.2 7.6Z" fill="#8a3a9c"/></svg>
<div class="t ui" style="left:157px;top:180px;height:20px;line-height:20px;letter-spacing:-0.134px;"><span id="t25">Buy(TAccountID, TStockID, U</span></div>
<svg style="left:136px;top:205px;" width="16" height="12" viewBox="0 0 16 12"><path d="M0.5 3.5H6M1.5 5.5H6M0.5 7.5H6" stroke="#b4b49a" stroke-width="1"/><path d="M11 0.5L15.2 4L11 6.2L6.8 4Z" fill="#ecaaf0"/><path d="M6.8 4L11 6.2V11.3L6.8 7.6Z" fill="#c866d4"/><path d="M15.2 4L11 6.2V11.3L15.2 7.6Z" fill="#8a3a9c"/></svg>
<div class="t ui" style="left:157px;top:200px;height:20px;line-height:20px;letter-spacing:-0.239px;"><span id="t26">Close()</span></div>
<svg style="left:136px;top:225px;" width="16" height="12" viewBox="0 0 16 12"><path d="M0.5 3.5H6M1.5 5.5H6M0.5 7.5H6" stroke="#b4b49a" stroke-width="1"/><path d="M11 0.5L15.2 4L11 6.2L6.8 4Z" fill="#ecaaf0"/><path d="M6.8 4L11 6.2V11.3L6.8 7.6Z" fill="#c866d4"/><path d="M15.2 4L11 6.2V11.3L15.2 7.6Z" fill="#8a3a9c"/></svg>
<div class="t ui" style="left:157px;top:220px;height:20px;line-height:20px;letter-spacing:0.057px;"><span id="t27">DeregisterAccount(TAccount</span></div>
<svg style="left:136px;top:245px;" width="16" height="12" viewBox="0 0 16 12"><path d="M0.5 3.5H6M1.5 5.5H6M0.5 7.5H6" stroke="#b4b49a" stroke-width="1"/><path d="M11 0.5L15.2 4L11 6.2L6.8 4Z" fill="#ecaaf0"/><path d="M6.8 4L11 6.2V11.3L6.8 7.6Z" fill="#c866d4"/><path d="M15.2 4L11 6.2V11.3L15.2 7.6Z" fill="#8a3a9c"/></svg>
<div class="t ui" style="left:157px;top:240px;height:20px;line-height:20px;letter-spacing:-0.228px;"><span id="t28">DeregisterStock(TStockID)</span></div>
<svg style="left:136px;top:265px;" width="16" height="12" viewBox="0 0 16 12"><path d="M0.5 3.5H6M1.5 5.5H6M0.5 7.5H6" stroke="#b4b49a" stroke-width="1"/><path d="M11 0.5L15.2 4L11 6.2L6.8 4Z" fill="#ecaaf0"/><path d="M6.8 4L11 6.2V11.3L6.8 7.6Z" fill="#c866d4"/><path d="M15.2 4L11 6.2V11.3L15.2 7.6Z" fill="#8a3a9c"/></svg>
<div class="t ui" style="left:157px;top:260px;height:20px;line-height:20px;letter-spacing:-0.216px;"><span id="t29">~Exchange()</span></div>
<svg style="left:136px;top:285px;" width="16" height="12" viewBox="0 0 16 12"><path d="M0.5 3.5H6M1.5 5.5H6M0.5 7.5H6" stroke="#b4b49a" stroke-width="1"/><path d="M11 0.5L15.2 4L11 6.2L6.8 4Z" fill="#ecaaf0"/><path d="M6.8 4L11 6.2V11.3L6.8 7.6Z" fill="#c866d4"/><path d="M15.2 4L11 6.2V11.3L15.2 7.6Z" fill="#8a3a9c"/></svg>
<div class="t ui" style="left:157px;top:280px;height:20px;line-height:20px;letter-spacing:-0.591px;"><span id="t30">Exchange(LPCTSTR)</span></div>
<svg style="left:132px;top:302px;" width="9" height="12" viewBox="0 0 9 12"><path d="M2.2 5V3.2a2.3 2.3 0 0 1 4.6 0V5" fill="none" stroke="#3a3a9a" stroke-width="1.1"/><rect x="0.6" y="4.8" width="7.8" height="6.6" fill="#b9b5ee" stroke="#3a3a9a"/><path d="M4 7h1.4v2H3.4" fill="none" stroke="#fff" stroke-width="1"/></svg>
<svg style="left:136px;top:305px;" width="16" height="12" viewBox="0 0 16 12"><path d="M11 0.5L15.2 4L11 6.2L6.8 4Z" fill="#ecaaf0"/><path d="M6.8 4L11 6.2V11.3L6.8 7.6Z" fill="#c866d4"/><path d="M15.2 4L11 6.2V11.3L15.2 7.6Z" fill="#8a3a9c"/></svg>
<div class="t ui" style="left:157px;top:300px;height:20px;line-height:20px;letter-spacing:0.014px;"><span id="t31">FindAccount(CString)</span></div>
<svg style="left:132px;top:322px;" width="9" height="12" viewBox="0 0 9 12"><path d="M2.2 5V3.2a2.3 2.3 0 0 1 4.6 0V5" fill="none" stroke="#3a3a9a" stroke-width="1.1"/><rect x="0.6" y="4.8" width="7.8" height="6.6" fill="#b9b5ee" stroke="#3a3a9a"/><path d="M4 7h1.4v2H3.4" fill="none" stroke="#fff" stroke-width="1"/></svg>
<svg style="left:136px;top:325px;" width="16" height="12" viewBox="0 0 16 12"><path d="M11 0.5L15.2 4L11 6.2L6.8 4Z" fill="#ecaaf0"/><path d="M6.8 4L11 6.2V11.3L6.8 7.6Z" fill="#c866d4"/><path d="M15.2 4L11 6.2V11.3L15.2 7.6Z" fill="#8a3a9c"/></svg>
<div class="t ui" style="left:157px;top:320px;height:20px;line-height:20px;letter-spacing:-0.132px;"><span id="t32">FindStock(CString)</span></div>
<svg style="left:132px;top:342px;" width="9" height="12" viewBox="0 0 9 12"><path d="M2.2 5V3.2a2.3 2.3 0 0 1 4.6 0V5" fill="none" stroke="#3a3a9a" stroke-width="1.1"/><rect x="0.6" y="4.8" width="7.8" height="6.6" fill="#b9b5ee" stroke="#3a3a9a"/><path d="M4 7h1.4v2H3.4" fill="none" stroke="#fff" stroke-width="1"/></svg>
<svg style="left:136px;top:345px;" width="16" height="12" viewBox="0 0 16 12"><path d="M11 0.5L15.2 4L11 6.2L6.8 4Z" fill="#ecaaf0"/><path d="M6.8 4L11 6.2V11.3L6.8 7.6Z" fill="#c866d4"/><path d="M15.2 4L11 6.2V11.3L15.2 7.6Z" fill="#8a3a9c"/></svg>
<div class="t ui" style="left:157px;top:340px;height:20px;line-height:20px;letter-spacing:-0.145px;"><span id="t33">FreeAccounts()</span></div>
<svg style="left:132px;top:362px;" width="9" height="12" viewBox="0 0 9 12"><path d="M2.2 5V3.2a2.3 2.3 0 0 1 4.6 0V5" fill="none" stroke="#3a3a9a" stroke-width="1.1"/><rect x="0.6" y="4.8" width="7.8" height="6.6" fill="#b9b5ee" stroke="#3a3a9a"/><path d="M4 7h1.4v2H3.4" fill="none" stroke="#fff" stroke-width="1"/></svg>
<svg style="left:136px;top:365px;" width="16" height="12" viewBox="0 0 16 12"><path d="M11 0.5L15.2 4L11 6.2L6.8 4Z" fill="#ecaaf0"/><path d="M6.8 4L11 6.2V11.3L6.8 7.6Z" fill="#c866d4"/><path d="M15.2 4L11 6.2V11.3L15.2 7.6Z" fill="#8a3a9c"/></svg>
<div class="t ui" style="left:157px;top:360px;height:20px;line-height:20px;letter-spacing:-0.412px;"><span id="t34">FreeSectors()</span></div>
<svg style="left:132px;top:382px;" width="9" height="12" viewBox="0 0 9 12"><path d="M2.2 5V3.2a2.3 2.3 0 0 1 4.6 0V5" fill="none" stroke="#3a3a9a" stroke-width="1.1"/><rect x="0.6" y="4.8" width="7.8" height="6.6" fill="#b9b5ee" stroke="#3a3a9a"/><path d="M4 7h1.4v2H3.4" fill="none" stroke="#fff" stroke-width="1"/></svg>
<svg style="left:136px;top:385px;" width="16" height="12" viewBox="0 0 16 12"><path d="M11 0.5L15.2 4L11 6.2L6.8 4Z" fill="#ecaaf0"/><path d="M6.8 4L11 6.2V11.3L6.8 7.6Z" fill="#c866d4"/><path d="M15.2 4L11 6.2V11.3L15.2 7.6Z" fill="#8a3a9c"/></svg>
<div class="t ui" style="left:157px;top:380px;height:20px;line-height:20px;letter-spacing:-0.391px;"><span id="t35">FreeStocks()</span></div>
<svg style="left:136px;top:405px;" width="16" height="12" viewBox="0 0 16 12"><path d="M0.5 3.5H6M1.5 5.5H6M0.5 7.5H6" stroke="#b4b49a" stroke-width="1"/><path d="M11 0.5L15.2 4L11 6.2L6.8 4Z" fill="#ecaaf0"/><path d="M6.8 4L11 6.2V11.3L6.8 7.6Z" fill="#c866d4"/><path d="M15.2 4L11 6.2V11.3L15.2 7.6Z" fill="#8a3a9c"/></svg>
<div class="t ui" style="left:157px;top:400px;height:20px;line-height:20px;letter-spacing:0.068px;"><span id="t36">GetAccount(TAccountID)</span></div>
<svg style="left:132px;top:422px;" width="9" height="12" viewBox="0 0 9 12"><path d="M2.2 5V3.2a2.3 2.3 0 0 1 4.6 0V5" fill="none" stroke="#3a3a9a" stroke-width="1.1"/><rect x="0.6" y="4.8" width="7.8" height="6.6" fill="#b9b5ee" stroke="#3a3a9a"/><path d="M4 7h1.4v2H3.4" fill="none" stroke="#fff" stroke-width="1"/></svg>
<svg style="left:136px;top:425px;" width="16" height="12" viewBox="0 0 16 12"><path d="M11 0.5L15.2 4L11 6.2L6.8 4Z" fill="#ecaaf0"/><path d="M6.8 4L11 6.2V11.3L6.8 7.6Z" fill="#c866d4"/><path d="M15.2 4L11 6.2V11.3L15.2 7.6Z" fill="#8a3a9c"/></svg>
<div class="t ui" style="left:157px;top:420px;height:20px;line-height:20px;letter-spacing:-0.372px;"><span id="t37">GetSector(ESector)</span></div>
<svg style="left:136px;top:445px;" width="16" height="12" viewBox="0 0 16 12"><path d="M0.5 3.5H6M1.5 5.5H6M0.5 7.5H6" stroke="#b4b49a" stroke-width="1"/><path d="M11 0.5L15.2 4L11 6.2L6.8 4Z" fill="#ecaaf0"/><path d="M6.8 4L11 6.2V11.3L6.8 7.6Z" fill="#c866d4"/><path d="M15.2 4L11 6.2V11.3L15.2 7.6Z" fill="#8a3a9c"/></svg>
<div class="t ui" style="left:157px;top:440px;height:20px;line-height:20px;letter-spacing:-0.260px;"><span id="t38">GetStock(TStockID)</span></div>
<svg style="left:136px;top:465px;" width="16" height="12" viewBox="0 0 16 12"><path d="M0.5 3.5H6M1.5 5.5H6M0.5 7.5H6" stroke="#b4b49a" stroke-width="1"/><path d="M11 0.5L15.2 4L11 6.2L6.8 4Z" fill="#ecaaf0"/><path d="M6.8 4L11 6.2V11.3L6.8 7.6Z" fill="#c866d4"/><path d="M15.2 4L11 6.2V11.3L15.2 7.6Z" fill="#8a3a9c"/></svg>
<div class="t ui" style="left:157px;top:460px;height:20px;line-height:20px;letter-spacing:-0.086px;"><span id="t39">GetStockVolume()</span></div>
<svg style="left:136px;top:485px;" width="16" height="12" viewBox="0 0 16 12"><path d="M0.5 3.5H6M1.5 5.5H6M0.5 7.5H6" stroke="#b4b49a" stroke-width="1"/><path d="M11 0.5L15.2 4L11 6.2L6.8 4Z" fill="#ecaaf0"/><path d="M6.8 4L11 6.2V11.3L6.8 7.6Z" fill="#c866d4"/><path d="M15.2 4L11 6.2V11.3L15.2 7.6Z" fill="#8a3a9c"/></svg>
<div class="t ui" style="left:157px;top:480px;height:20px;line-height:20px;letter-spacing:-0.060px;"><span id="t40">Open()</span></div>
<svg style="left:136px;top:505px;" width="16" height="12" viewBox="0 0 16 12"><path d="M0.5 3.5H6M1.5 5.5H6M0.5 7.5H6" stroke="#b4b49a" stroke-width="1"/><path d="M11 0.5L15.2 4L11 6.2L6.8 4Z" fill="#ecaaf0"/><path d="M6.8 4L11 6.2V11.3L6.8 7.6Z" fill="#c866d4"/><path d="M15.2 4L11 6.2V11.3L15.2 7.6Z" fill="#8a3a9c"/></svg>
<div class="t ui" style="left:157px;top:500px;height:20px;line-height:20px;letter-spacing:0.037px;"><span id="t41">RegisterAccount(Account*)</span></div>
<svg style="left:136px;top:525px;" width="16" height="12" viewBox="0 0 16 12"><path d="M0.5 3.5H6M1.5 5.5H6M0.5 7.5H6" stroke="#b4b49a" stroke-width="1"/><path d="M11 0.5L15.2 4L11 6.2L6.8 4Z" fill="#ecaaf0"/><path d="M6.8 4L11 6.2V11.3L6.8 7.6Z" fill="#c866d4"/><path d="M15.2 4L11 6.2V11.3L15.2 7.6Z" fill="#8a3a9c"/></svg>
<div class="t ui" style="left:157px;top:520px;height:20px;line-height:20px;letter-spacing:-0.208px;"><span id="t42">RegisterStock(Stock*)</span></div>
</div>
<div style="left:313px;top:125px;width:17px;height:541px;background:#f0f0f0"></div>
<div style="left:314px;top:224px;width:15px;height:125px;background:#cdcdcd"></div>
<svg style="left:313px;top:125px;" width="17" height="17" viewBox="0 0 17 17"><path d="M5.0 10.5L8.5 7L12.0 10.5" fill="none" stroke="#505050" stroke-width="1.6"/></svg>
<svg style="left:313px;top:649px;" width="17" height="17" viewBox="0 0 17 17"><path d="M5.0 6.5L8.5 10L12.0 6.5" fill="none" stroke="#505050" stroke-width="1.6"/></svg>
<div style="left:0px;top:666px;width:313px;height:19px;background:#f0f0f0"></div>
<div style="left:50px;top:667px;width:177px;height:17px;background:#cdcdcd"></div>
<svg style="left:0px;top:666px;" width="17" height="19" viewBox="0 0 17 19"><path d="M10.5 6.0L7 9.5L10.5 13.0" fill="none" stroke="#505050" stroke-width="1.6"/></svg>
<svg style="left:296px;top:666px;" width="17" height="19" viewBox="0 0 17 19"><path d="M6.5 6.0L10 9.5L6.5 13.0" fill="none" stroke="#505050" stroke-width="1.6"/></svg>
<div style="left:313px;top:666px;width:17px;height:19px;background:#f0f0f0"></div>
<div class="dots" style="left:0px;top:685px;width:330px;height:27px;"></div>
<div style="left:2px;top:685px;width:106px;height:22px;background:#fff;border-radius:0 0 3px 3px"></div>
<svg style="left:6px;top:688px;" width="15" height="15" viewBox="0 0 15 15"><path d="M0.5 5V0.5H4L5 2H9.5V5" fill="#f0dc60" stroke="#a89420"/><rect x="4.5" y="4.5" width="10" height="10" fill="#fff" stroke="#223a80" stroke-width="1.4"/><rect x="7" y="7" width="5" height="3" fill="#5a78c8"/><path d="M7 12H12" stroke="#223a80"/></svg>
<div class="t ui" style="left:22px;top:685px;height:22px;line-height:22px;letter-spacing:-0.314px;"><span id="t43">Project Browser</span></div>
<svg style="left:114px;top:688px;" width="16" height="16" viewBox="0 0 16 16"><path d="M1 5L6 1L15 5L9 9Z" fill="#f0dc60" stroke="#7a6a10"/><path d="M1 5V9L9 13V9M15 5V9L9 13" fill="#d8c040" stroke="#7a6a10"/><path d="M4 3.5L11 7.5M7 2L13 6" stroke="#7a6a10" stroke-dasharray="1 1"/><rect x="10" y="13" width="3" height="3" fill="#111"/></svg>
<div class="t ui w" style="left:131px;top:685px;height:22px;line-height:22px;letter-spacing:-0.595px;"><span id="t44">Resources</span></div>
<div class="cap" style="left:0px;top:712px;width:330px;height:22px;"></div>
<div class="t ui w" style="left:4px;top:712px;height:22px;line-height:22px;letter-spacing:-0.337px;"><span id="t45">Execution Analyzer</span></div>
<svg style="left:281px;top:720px;" width="12" height="8" viewBox="0 0 12 8"><path d="M0.5 1H10.5L5.5 6.5Z" fill="#fff"/></svg>
<svg style="left:299px;top:717px;" width="9" height="12" viewBox="0 0 9 12"><path d="M2.5 0.5H6.5V6.5M2.5 0.5V6.5M0.5 6.5H8.5M4.5 6.5V10.5M5.5 1V6" fill="none" stroke="#fff" stroke-width="1"/></svg>
<svg style="left:316px;top:719px;" width="8" height="8" viewBox="0 0 8 8"><path d="M0.7 0.7L7.3 7.3M7.3 0.7L0.7 7.3" stroke="#fff" stroke-width="1.5"/></svg>
<div class="tb" style="left:0px;top:734px;width:330px;height:27px;"></div>
<svg style="left:6px;top:741px;" width="17" height="15" viewBox="0 0 17 15"><rect x="3.5" y="0.5" width="12" height="9" fill="#fff" stroke="#98a4c8"/><rect x="4" y="1" width="11" height="2.6" fill="#ccd6f0"/><path d="M6 2.3h2M9.5 2.3h2M13 2.3h1" stroke="#5868b8" stroke-width="1"/><circle cx="4.8" cy="9.6" r="3.6" fill="#6c68d0" stroke="#5c58c0" stroke-width="2.6" stroke-dasharray="1.7 1.15"/><circle cx="4.8" cy="9.6" r="1" fill="#b0e878"/></svg>
<svg style="left:29px;top:747px;" width="6" height="4" viewBox="0 0 6 4"><path d="M0 0H6L3 3.2Z" fill="#000"/></svg>
<div style="left:41px;top:738px;width:1px;height:20px;background:#8e9bb5"></div><div style="left:42px;top:738px;width:1px;height:20px;background:#d5dcea"></div>
<svg style="left:47px;top:743px;" width="12" height="12" viewBox="0 0 12 12"><circle cx="6" cy="6" r="3.7" fill="#6058c8" stroke="#6058c8" stroke-width="2.6" stroke-dasharray="1.75 1.15"/><circle cx="6" cy="6" r="1" fill="#b8e8a0"/></svg>
<svg style="left:55px;top:739px;" width="7" height="7" viewBox="0 0 7 7"><path d="M3.5 0V7M0 3.5H7" stroke="#30b030" stroke-width="2"/></svg>
<svg style="left:70px;top:744px;" width="12" height="12" viewBox="0 0 12 12"><circle cx="6" cy="6" r="3.7" fill="#6058c8" stroke="#6058c8" stroke-width="2.6" stroke-dasharray="1.75 1.15"/><circle cx="6" cy="6" r="1" fill="#b8e8a0"/></svg>
<svg style="left:77px;top:741px;" width="6" height="6" viewBox="0 0 6 6"><path d="M5.5 0.5L1 5M1 1.5V5H4.5" fill="none" stroke="#dfe4f4" stroke-width="1.2"/></svg>
<svg style="left:92px;top:744px;" width="12" height="12" viewBox="0 0 12 12"><circle cx="6" cy="6" r="3.7" fill="#6058c8" stroke="#6058c8" stroke-width="2.6" stroke-dasharray="1.75 1.15"/><circle cx="6" cy="6" r="1" fill="#b8e8a0"/></svg>
<svg style="left:99px;top:741px;" width="6" height="6" viewBox="0 0 6 6"><path d="M0.5 5.5L5 1M5 4.5V1H1.5" fill="none" stroke="#dfe4f4" stroke-width="1.2"/></svg>
<div style="left:115px;top:738px;width:1px;height:20px;background:#8e9bb5"></div><div style="left:116px;top:738px;width:1px;height:20px;background:#d5dcea"></div>
<svg style="left:122px;top:740px;" width="16" height="15" viewBox="0 0 16 15"><rect x="0.5" y="4.5" width="15" height="10" fill="#fff" fill-opacity="1" stroke="#28356a" stroke-dasharray="1 1"/><path d="M2 8.5H14M2 10.5H14M2 12.5H14" stroke="#28356a" stroke-dasharray="1 1.4"/><path d="M2.5 1.5L5 5L7.5 1.5ZM9 1.5L11.5 5L14 1.5Z" fill="#3a7ae0"/><path d="M1 1H15" stroke="#7a9adf" stroke-dasharray="1 1"/></svg>
<svg style="left:144px;top:740px;" width="16" height="15" viewBox="0 0 16 15"><rect x="0.5" y="4.5" width="15" height="10" fill="#fff" fill-opacity="0.4" stroke="#9aa6c0" stroke-dasharray="1 1"/><path d="M2 8.5H14M2 10.5H14M2 12.5H14" stroke="#9aa6c0" stroke-dasharray="1 1.4"/><path d="M6 0.5L11 5.5M11 0.5L6 5.5" stroke="#e06060" stroke-width="1.1"/></svg>
<svg style="left:164px;top:740px;" width="16" height="16" viewBox="0 0 16 16"><circle cx="8.2" cy="2.3" r="1.5" fill="#000"/><path d="M7.8 4.2L5.8 8.6L8.4 10.4L7.6 14.8M5.8 8.6L3 14.4M7.4 5L4.2 5.6L3 8M7.8 5L10.4 7.4L12.4 6.6" fill="none" stroke="#000" stroke-width="1.35" stroke-linecap="round" stroke-linejoin="round"/></svg>
<svg style="left:186px;top:740px;" width="16" height="16" viewBox="0 0 16 16"><circle cx="8.2" cy="2.3" r="1.5" fill="#000"/><path d="M7.8 4.2L5.8 8.6L8.4 10.4L7.6 14.8M5.8 8.6L3 14.4M7.4 5L4.2 5.6L3 8M7.8 5L10.4 7.4L12.4 6.6" fill="none" stroke="#000" stroke-width="1.35" stroke-linecap="round" stroke-linejoin="round"/><path d="M12 10.5L13.4 12.5L15.4 8" fill="none" stroke="#e03020" stroke-width="1.3"/></svg>
<svg style="left:208px;top:740px;" width="16" height="16" viewBox="0 0 16 16"><circle cx="8.2" cy="2.3" r="1.5" fill="#000"/><path d="M7.8 4.2L5.8 8.6L8.4 10.4L7.6 14.8M5.8 8.6L3 14.4M7.4 5L4.2 5.6L3 8M7.8 5L10.4 7.4L12.4 6.6" fill="none" stroke="#000" stroke-width="1.35" stroke-linecap="round" stroke-linejoin="round"/><rect x="11" y="9.5" width="2" height="2" fill="#2a60d0"/><rect x="14" y="9.5" width="2" height="2" fill="#2a60d0"/><rect x="11" y="12.5" width="2" height="2" fill="#2a60d0"/><rect x="14" y="12.5" width="2" height="2" fill="#2a60d0"/></svg>
<div style="left:233px;top:738px;width:1px;height:20px;background:#8e9bb5"></div><div style="left:234px;top:738px;width:1px;height:20px;background:#d5dcea"></div>
<svg style="left:241px;top:740px;" width="16" height="16" viewBox="0 0 16 16"><circle cx="8" cy="8" r="7.3" fill="#7878d0" stroke="#4a4ab0"/><circle cx="8" cy="8" r="5.2" fill="none" stroke="#cfcff4" stroke-width="1"/><path d="M6.2 6.4a1.9 1.9 0 1 1 2.6 1.8c-.6.3-.8.6-.8 1.4" fill="none" stroke="#e8e8ff" stroke-width="1.2"/><circle cx="8" cy="11.3" r=".8" fill="#e8e8ff"/></svg>
<div style="left:0px;top:761px;width:330px;height:242px;background:#fff"></div>
<svg style="left:7px;top:767px;" width="9" height="9" viewBox="0 0 9 9"><rect x="0.5" y="0.5" width="8" height="8" rx="1.5" fill="#f4f4f4" stroke="#9a9a9a"/><rect x="1" y="5" width="7" height="3" fill="#e2e2e2"/><path d="M2.5 4.5H6.5" stroke="#3a4a9a" stroke-width="1.1"/></svg>
<svg style="left:26px;top:763px;" width="17" height="15" viewBox="0 0 17 15"><path d="M0.5 14.5V3.5H5.5L7 5.5H13.5V8" fill="#e8a838" stroke="#b07818"/><path d="M0.5 14.5L3.5 7.5H16.5L13.5 14.5Z" fill="#f6c458" stroke="#b07818"/><path d="M11 2.5a3 3 0 0 1 5 0M16 0.5V2.8H13.8" fill="none" stroke="#334" stroke-width=".9"/></svg>
<div class="t ui" style="left:47px;top:761px;height:20px;line-height:20px;letter-spacing:-0.302px;"><span id="t46">SparxSystems.Software Engineering.Stock Exchange</span></div>
<svg style="left:51px;top:785px;" width="12" height="12" viewBox="0 0 12 12"><rect x="0.5" y="0.5" width="11" height="11" rx="1" fill="#fff" stroke="#a0a0a0"/><rect x="2" y="2" width="8" height="8" fill="#f6f6f6"/><path d="M2.8 6L5 8.8L9.2 2.8" fill="none" stroke="#3a5aa8" stroke-width="1.6"/></svg>
<svg style="left:65px;top:785px;" width="17" height="15" viewBox="0 0 17 15"><rect x="3.5" y="0.5" width="12" height="9" fill="#fff" stroke="#98a4c8"/><rect x="4" y="1" width="11" height="2.6" fill="#ccd6f0"/><path d="M6 2.3h2M9.5 2.3h2M13 2.3h1" stroke="#5868b8" stroke-width="1"/><circle cx="4.8" cy="9.6" r="3.6" fill="#6c68d0" stroke="#5c58c0" stroke-width="2.6" stroke-dasharray="1.7 1.15"/><circle cx="4.8" cy="9.6" r="1" fill="#b0e878"/></svg>
<div class="t ui" style="left:86px;top:781px;height:20px;line-height:20px;letter-spacing:-0.456px;"><span id="t47">Stock Exchange.Debug.x86.VS2008</span></div>
<svg style="left:51px;top:805px;" width="12" height="12" viewBox="0 0 12 12"><rect x="0.5" y="0.5" width="11" height="11" rx="1" fill="#fff" stroke="#a0a0a0"/><rect x="2" y="2" width="8" height="8" fill="#f6f6f6"/></svg>
<svg style="left:65px;top:805px;" width="17" height="15" viewBox="0 0 17 15"><rect x="3.5" y="0.5" width="12" height="9" fill="#fff" stroke="#98a4c8"/><rect x="4" y="1" width="11" height="2.6" fill="#ccd6f0"/><path d="M6 2.3h2M9.5 2.3h2M13 2.3h1" stroke="#5868b8" stroke-width="1"/><circle cx="4.8" cy="9.6" r="3.6" fill="#6c68d0" stroke="#5c58c0" stroke-width="2.6" stroke-dasharray="1.7 1.15"/><circle cx="4.8" cy="9.6" r="1" fill="#b0e878"/></svg>
<div class="t ui" style="left:86px;top:801px;height:20px;line-height:20px;letter-spacing:-0.456px;"><span id="t48">Stock Exchange.Debug.x86.VS2010</span></div>
<svg style="left:51px;top:825px;" width="12" height="12" viewBox="0 0 12 12"><rect x="0.5" y="0.5" width="11" height="11" rx="1" fill="#fff" stroke="#a0a0a0"/><rect x="2" y="2" width="8" height="8" fill="#f6f6f6"/></svg>
<svg style="left:65px;top:825px;" width="17" height="15" viewBox="0 0 17 15"><rect x="3.5" y="0.5" width="12" height="9" fill="#fff" stroke="#98a4c8"/><rect x="4" y="1" width="11" height="2.6" fill="#ccd6f0"/><path d="M6 2.3h2M9.5 2.3h2M13 2.3h1" stroke="#5868b8" stroke-width="1"/><circle cx="4.8" cy="9.6" r="3.6" fill="#6c68d0" stroke="#5c58c0" stroke-width="2.6" stroke-dasharray="1.7 1.15"/><circle cx="4.8" cy="9.6" r="1" fill="#b0e878"/></svg>
<div class="t ui" style="left:86px;top:821px;height:20px;line-height:20px;letter-spacing:-0.456px;"><span id="t49">Stock Exchange.Debug.x64.VS2012</span></div>
<svg style="left:51px;top:845px;" width="12" height="12" viewBox="0 0 12 12"><rect x="0.5" y="0.5" width="11" height="11" rx="1" fill="#fff" stroke="#a0a0a0"/><rect x="2" y="2" width="8" height="8" fill="#f6f6f6"/></svg>
<svg style="left:65px;top:845px;" width="17" height="15" viewBox="0 0 17 15"><rect x="3.5" y="0.5" width="12" height="9" fill="#fff" stroke="#98a4c8"/><rect x="4" y="1" width="11" height="2.6" fill="#ccd6f0"/><path d="M6 2.3h2M9.5 2.3h2M13 2.3h1" stroke="#5868b8" stroke-width="1"/><circle cx="4.8" cy="9.6" r="3.6" fill="#6c68d0" stroke="#5c58c0" stroke-width="2.6" stroke-dasharray="1.7 1.15"/><circle cx="4.8" cy="9.6" r="1" fill="#b0e878"/></svg>
<div class="t ui" style="left:86px;top:841px;height:20px;line-height:20px;letter-spacing:-0.456px;"><span id="t50">Stock Exchange.Debug.x64.VS2010</span></div>
<div class="dots" style="left:0px;top:1004px;width:330px;height:23px;"></div>
<svg style="left:4px;top:1006px;" width="16" height="16" viewBox="0 0 16 16"><path d="M1 3.5L6 7M0.5 9.5L5 9.6M3 15L6.4 11.4M8.5 0.5L9.4 5M15.5 6L11 7.6M13.5 13L10.4 10.4M14 1L11.6 4" stroke="#111" stroke-width="1.2" fill="none"/><ellipse cx="7.6" cy="8.8" rx="3.5" ry="5" fill="#d81810" transform="rotate(40 7.6 8.8)"/><path d="M5.2 9.6L9.2 5.4" stroke="#f8a0a0" stroke-width="1"/><circle cx="11.3" cy="4.6" r="1.9" fill="#111"/></svg>
<div class="t ui w" style="left:22px;top:1004px;height:20px;line-height:20px;letter-spacing:-0.075px;"><span id="t51">Debug</span></div>
<div style="left:66px;top:1003px;width:122px;height:20px;background:#fff;border-radius:0 0 3px 3px"></div>
<svg style="left:69px;top:1006px;" width="17" height="15" viewBox="0 0 17 15"><rect x="3.5" y="0.5" width="12" height="9" fill="#fff" stroke="#98a4c8"/><rect x="4" y="1" width="11" height="2.6" fill="#ccd6f0"/><path d="M6 2.3h2M9.5 2.3h2M13 2.3h1" stroke="#5868b8" stroke-width="1"/><circle cx="4.8" cy="9.6" r="3.6" fill="#6c68d0" stroke="#5c58c0" stroke-width="2.6" stroke-dasharray="1.7 1.15"/><circle cx="4.8" cy="9.6" r="1" fill="#b0e878"/></svg>
<div class="t ui" style="left:86px;top:1004px;height:20px;line-height:20px;letter-spacing:-0.337px;"><span id="t52">Execution Analyzer</span></div>
<div style="left:0px;top:1026px;width:1921px;height:23px;background:#293955"></div>
<div class="t ui w" style="left:3px;top:1028px;height:21px;line-height:21px;letter-spacing:-0.370px;"><span id="t53">GetAccount</span></div>
<div class="tb" style="left:335px;top:76px;width:923px;height:27px;"></div>
<svg style="left:342px;top:86px;" width="10" height="9" viewBox="0 0 10 9"><path d="M1 1L4.5 4.5L1 8M5.5 1L9 4.5L5.5 8" fill="none" stroke="#7a86a0" stroke-width="1.2"/></svg>
<div class="t ar" style="left:395px;top:77px;height:26px;line-height:26px;letter-spacing:-0.919px;font-size:13px;color:#7b7b7b;"><span id="t54">C:\EA\VEA\projects\C++\StockExchange\Exchange\Exchange.cpp</span></div>
<svg style="left:1190px;top:84px;" width="12" height="11" viewBox="0 0 12 11"><path d="M1 5.5L6 1L11 5.5M1 10L6 5.5L11 10" fill="none" stroke="#8d97aa" stroke-width="1.2"/></svg>
<svg style="left:1220px;top:87px;" width="12" height="7" viewBox="0 0 12 7"><path d="M0.5 0.5H10.5L5.5 6Z" fill="#000"/></svg>
<svg style="left:1242px;top:86px;" width="9" height="9" viewBox="0 0 9 9"><path d="M1 1L8 8M8 1L1 8" stroke="#000" stroke-width="1.8"/></svg>
<div class="dots" style="left:335px;top:103px;width:923px;height:22px;"></div>
<svg style="left:338px;top:106px;" width="16" height="16" viewBox="0 0 16 16"><circle cx="8" cy="8" r="7" fill="#fff" stroke="#1c1cf0" stroke-width="1.9"/><circle cx="8" cy="8" r="5" fill="#1c1cf0"/><path d="M3 4C6.5 5.5 10.5 9.5 12.6 13M12.8 3.4C9.5 5 5.5 9.5 3.4 12.8" fill="none" stroke="#fff" stroke-width="1.25"/></svg>
<div class="t ui w" style="left:356px;top:105px;height:21px;line-height:21px;letter-spacing:-0.470px;"><span id="t55">Start Page</span></div>
<div style="left:415px;top:104px;width:121px;height:22px;background:#fff;border-radius:4px 4px 0 0"></div>
<svg style="left:421px;top:107px;" width="13" height="16" viewBox="0 0 13 16"><path d="M0.5 0.5H8.5L12.5 4.5V15.5H0.5Z" fill="#fff" stroke="#6a6aa0"/><path d="M8.5 0.5V4.5H12.5" fill="#dde" stroke="#6a6aa0"/><path d="M2.5 4.5H7" stroke="#c03030"/><path d="M2.5 6.5H10" stroke="#30a030"/><path d="M2.5 8.5H8" stroke="#8030a0"/><path d="M2.5 10.5H10" stroke="#c03030"/><path d="M2.5 12.5H9" stroke="#3050c0"/></svg>
<div class="t ui b" style="left:438px;top:105px;height:21px;line-height:21px;letter-spacing:-0.863px;"><span id="t56">Exchange.cpp</span></div>
<svg style="left:521px;top:111px;" width="9" height="9" viewBox="0 0 9 9"><path d="M1 1L8 8M8 1L1 8" stroke="#000" stroke-width="1.5"/></svg>
<svg style="left:543px;top:107px;" width="13" height="16" viewBox="0 0 13 16"><path d="M0.5 0.5H8.5L12.5 4.5V15.5H0.5Z" fill="#fff" stroke="#6a6aa0"/><path d="M8.5 0.5V4.5H12.5" fill="#dde" stroke="#6a6aa0"/><path d="M2.5 4.5H7" stroke="#c03030"/><path d="M2.5 6.5H10" stroke="#30a030"/><path d="M2.5 8.5H8" stroke="#8030a0"/><path d="M2.5 10.5H10" stroke="#c03030"/><path d="M2.5 12.5H9" stroke="#3050c0"/></svg>
<div class="t ui w" style="left:559px;top:105px;height:21px;line-height:21px;letter-spacing:-0.539px;"><span id="t57">Exchange.h</span></div>
<svg style="left:631px;top:107px;" width="13" height="16" viewBox="0 0 13 16"><path d="M0.5 0.5H8.5L12.5 4.5V15.5H0.5Z" fill="#fff" stroke="#6a6aa0"/><path d="M8.5 0.5V4.5H12.5" fill="#dde" stroke="#6a6aa0"/><path d="M2.5 4.5H7" stroke="#c03030"/><path d="M2.5 6.5H10" stroke="#30a030"/><path d="M2.5 8.5H8" stroke="#8030a0"/><path d="M2.5 10.5H10" stroke="#c03030"/><path d="M2.5 12.5H9" stroke="#3050c0"/></svg>
<div class="t ui w" style="left:647px;top:105px;height:21px;line-height:21px;letter-spacing:-0.300px;"><span id="t58">Stock.cpp</span></div>
<svg style="left:710px;top:107px;" width="13" height="16" viewBox="0 0 13 16"><path d="M0.5 0.5H8.5L12.5 4.5V15.5H0.5Z" fill="#fff" stroke="#6a6aa0"/><path d="M8.5 0.5V4.5H12.5" fill="#dde" stroke="#6a6aa0"/><path d="M2.5 4.5H7" stroke="#c03030"/><path d="M2.5 6.5H10" stroke="#30a030"/><path d="M2.5 8.5H8" stroke="#8030a0"/><path d="M2.5 10.5H10" stroke="#c03030"/><path d="M2.5 12.5H9" stroke="#3050c0"/></svg>
<div class="t ui w" style="left:726px;top:105px;height:21px;line-height:21px;letter-spacing:-0.213px;"><span id="t59">*Stock.h</span></div>
<div class="t ui w" style="left:798px;top:105px;height:21px;line-height:21px;letter-spacing:-0.511px;"><span id="t60">*Trades</span></div>
<svg style="left:849px;top:107px;" width="13" height="16" viewBox="0 0 13 16"><path d="M0.5 0.5H8.5L12.5 4.5V15.5H0.5Z" fill="#fff" stroke="#6a6aa0"/><path d="M8.5 0.5V4.5H12.5" fill="#dde" stroke="#6a6aa0"/><path d="M2.5 4.5H7" stroke="#c03030"/><path d="M2.5 6.5H10" stroke="#30a030"/><path d="M2.5 8.5H8" stroke="#8030a0"/><path d="M2.5 10.5H10" stroke="#c03030"/><path d="M2.5 12.5H9" stroke="#3050c0"/></svg>
<div class="t ui w" style="left:865px;top:105px;height:21px;line-height:21px;letter-spacing:-0.138px;"><span id="t61">Broker.cpp</span></div>
<svg style="left:783px;top:107px;" width="12" height="15" viewBox="0 0 12 15"><rect x="4" y="2" width="6" height="4" rx="2" fill="#e8d8a0" stroke="#7a6a30"/><rect x="4" y="9" width="6" height="4" rx="2" fill="#e8d8a0" stroke="#7a6a30"/><path d="M7 6V9" stroke="#ccc"/><rect x="0" y="0" width="2" height="2" fill="#ccc"/></svg>
<svg style="left:1227px;top:108px;" width="7" height="11" viewBox="0 0 7 11"><path d="M6 1L1 5.5L6 10Z" fill="none" stroke="#c8d0e0" stroke-width="1"/></svg>
<svg style="left:1245px;top:108px;" width="7" height="11" viewBox="0 0 7 11"><path d="M1 1L6 5.5L1 10Z" fill="none" stroke="#c8d0e0" stroke-width="1"/></svg>
<div class="tb" style="left:335px;top:125px;width:923px;height:26px;"></div>
<div style="left:336px;top:126px;width:22px;height:24px;background:#fdedbb;border:1px solid #e5c365"></div>
<div style="left:358px;top:126px;width:22px;height:24px;background:#fdedbb;border:1px solid #e5c365"></div>
<svg style="left:340px;top:130px;" width="15" height="16" viewBox="0 0 15 16"><rect x="0.5" y="2.5" width="6" height="6" fill="#dce8fc" stroke="#2a50c0"/><path d="M7 5.5H9.5V13.5H11M9.5 5.5H11" fill="none" stroke="#1a2a60" stroke-width="1.1"/><path d="M11 3.5L13 5.5L11 7.5L9.8 5.5Z" transform="translate(1.5 -1.5)" fill="#20c0c8" stroke="#108890" stroke-width=".5"/><path d="M11 11.5L13 13.5L11 15.5L9.8 13.5Z" transform="translate(1.5 -1)" fill="#e030c0" stroke="#a01888" stroke-width=".5"/></svg>
<svg style="left:362px;top:130px;" width="15" height="16" viewBox="0 0 15 16"><path d="M6 3.5H14M6 8.5H14M6 13.5H14" stroke="#1a2050" stroke-width="1.2"/><text x="0.5" y="5.5" font-family="Liberation Sans,sans-serif" font-size="6.5" font-weight="bold" fill="#111">1</text><text x="0.5" y="10.7" font-family="Liberation Sans,sans-serif" font-size="6.5" font-weight="bold" fill="#111">2</text><text x="0.5" y="16" font-family="Liberation Sans,sans-serif" font-size="6.5" font-weight="bold" fill="#111">3</text></svg>
<svg style="left:385px;top:130px;" width="17" height="15" viewBox="0 0 17 15"><rect x="0.5" y="3.5" width="11" height="11" fill="#f4f8ff" stroke="#2a58c8"/><path d="M2.5 8.5H9M2.5 10.5H9M2.5 12.5H9" stroke="#2a58c8"/><path d="M4 6.5L7 3.5L9 5.5L13 1.5L15 3L9 8Z" fill="#d8cc60" stroke="#6a6020" stroke-width=".7"/><rect x="14.5" y="0.5" width="2" height="6" fill="#111"/></svg>
<svg style="left:408px;top:136px;" width="6" height="4" viewBox="0 0 6 4"><path d="M0 0H6L3 3.2Z" fill="#000"/></svg>
<div style="left:419px;top:128px;width:1px;height:20px;background:#8e9bb5"></div><div style="left:420px;top:128px;width:1px;height:20px;background:#d5dcea"></div>
<svg style="left:430px;top:130px;" width="14" height="16" viewBox="0 0 14 16"><path d="M0.5 1.5H8.5L11.5 4.5V15.5H0.5Z" fill="#fff" stroke="#4a5aa8"/><path d="M2.5 5.5H8M2.5 7.5H7M2.5 9.5H6M2.5 11.5H5" stroke="#5a6ab0"/><path d="M12.6 4.4L6.6 11.6L5.8 13.8L7.8 12.8L13.8 5.6Z" fill="#334" stroke="#223" stroke-width=".5"/></svg>
<svg style="left:450px;top:136px;" width="6" height="4" viewBox="0 0 6 4"><path d="M0 0H6L3 3.2Z" fill="#000"/></svg>
<svg style="left:461px;top:130px;" width="16" height="16" viewBox="0 0 16 16"><rect x="0.5" y="1.5" width="9" height="12" fill="#eef" stroke="#5a78c8"/><path d="M2.5 4.5H7.5M2.5 6.5H7.5M2.5 8.5H7.5M2.5 10.5H7.5" stroke="#5a78c8"/><path d="M13 1V12M10.5 9.5L13 13L15.5 9.5" fill="none" stroke="#30a050" stroke-width="1.4"/></svg>
<svg style="left:483px;top:129px;" width="16" height="17" viewBox="0 0 16 17"><rect x="4.5" y="3.5" width="11" height="13" fill="#fff" stroke="#5a78c8"/><path d="M6.5 7.5H13M8.5 9.5H13M8.5 11.5H13M6.5 13.5H13" stroke="#a03050"/><circle cx="4.5" cy="4.5" r="4" fill="#2a70e0"/><path d="M2.8 3H6.2M4.5 3V6.6" stroke="#fff" stroke-width="1.1"/></svg>
<div style="left:506px;top:128px;width:1px;height:20px;background:#8e9bb5"></div><div style="left:507px;top:128px;width:1px;height:20px;background:#d5dcea"></div>
<svg style="left:514px;top:130px;" width="16" height="16" viewBox="0 0 16 16"><path d="M0.5 8V1.5H4.5L6 3H10.5V6" fill="#f0dc60" stroke="#a89420"/><path d="M4.5 6.5h2.4v2h1.4v-2h2.4l1.8 4.5v3.5h-3.4v-3h-3v3H2.7v-3.5z" fill="#222"/><rect x="3.6" y="11" width="1.6" height="2.6" fill="#fff"/><rect x="9.9" y="11" width="1.6" height="2.6" fill="#fff"/></svg>
<svg style="left:537px;top:129px;" width="15" height="16" viewBox="0 0 15 16"><rect x="0.5" y="2.5" width="10" height="12" fill="#fff" stroke="#5a78c8"/><path d="M2.5 10.5H8M2.5 12.5H8" stroke="#5a78c8"/><circle cx="7" cy="6" r="4.4" fill="#d8e4f8" stroke="#334" stroke-width="1.1"/><path d="M10 9L14 13.5" stroke="#c89020" stroke-width="2.2"/><path d="M5 14L7.5 10.5L10 14" fill="none" stroke="#e02020" stroke-width="1.3"/></svg>
<svg style="left:558px;top:129px;" width="15" height="16" viewBox="0 0 15 16"><rect x="0.5" y="2.5" width="10" height="12" fill="#fff" stroke="#5a78c8"/><path d="M2.5 10.5H8M2.5 12.5H8" stroke="#5a78c8"/><circle cx="7" cy="6" r="4.4" fill="#d8e4f8" stroke="#334" stroke-width="1.1"/><path d="M10 9L14 13.5" stroke="#c89020" stroke-width="2.2"/></svg>
<div style="left:580px;top:128px;width:1px;height:20px;background:#8e9bb5"></div><div style="left:581px;top:128px;width:1px;height:20px;background:#d5dcea"></div>
<svg style="left:587px;top:129px;" width="16" height="17" viewBox="0 0 16 17"><path d="M4 0L5 2.6L7.8 1.6L6.3 4L8.2 6L5.4 6L4 8.4L2.8 6L0 6L1.8 4L0.3 1.6L3 2.6Z" fill="#fff8a0" stroke="#d8b820" stroke-width=".6"/><rect x="8.5" y="6.5" width="6" height="6" fill="#f4e890" stroke="#8a7a20"/><path d="M3 10V14H7M5 12L7 14L5 16" fill="none" stroke="#3a5ab0" stroke-width="1.1"/></svg>
<svg style="left:610px;top:131px;" width="14" height="12" viewBox="0 0 14 12"><path d="M6 1.5H13M8 4.5H13M8 7.5H13M6 10.5H13" stroke="#222" stroke-width="1.2"/><path d="M0 3.5H4M2.5 1.5L4.5 3.5L2.5 5.5" fill="none" stroke="#2a60d0" stroke-width="1.1"/></svg>
<svg style="left:631px;top:130px;" width="16" height="16" viewBox="0 0 16 16"><rect x="0.5" y="0.5" width="15" height="13" fill="#fff" stroke="#3a5ab0"/><rect x="1" y="1" width="14" height="2.6" fill="#3a5ab0"/><path d="M3 7.5H10M3 10H8" stroke="#889"/><path d="M2 12L5 15L8 11" fill="none" stroke="#111" stroke-width="1.6"/><path d="M8 13L10 15L14 9" fill="none" stroke="#30a040" stroke-width="1.6"/></svg>
<svg style="left:653px;top:130px;" width="17" height="15" viewBox="0 0 17 15"><rect x="1.5" y="0.5" width="12" height="14" fill="#f0f0d8" stroke="#3a6a3a"/><path d="M3 3.5H12M3 6.5H8M3 9.5H8M3 12.5H12" stroke="#3a6a3a" stroke-width="1.2"/><path d="M12 3.5L16 7L12 9.2L8 7Z" fill="#ecaaf0"/><path d="M8 7L12 9.2V13.8L8 10.4Z" fill="#c866d4"/><path d="M16 7L12 9.2V13.8L16 10.4Z" fill="#8a3a9c"/></svg>
<div style="left:676px;top:128px;width:1px;height:20px;background:#8e9bb5"></div><div style="left:677px;top:128px;width:1px;height:20px;background:#d5dcea"></div>
<div style="left:681px;top:129px;width:206px;height:16px;background:#fff;border:1px solid #98a6c0"></div>
<div class="t ui" style="left:686px;top:129px;height:16px;line-height:16px;letter-spacing:-0.254px;"><span id="t62">(global)</span></div>
<svg style="left:893px;top:130px;" width="15" height="15" viewBox="0 0 15 15"><rect x="0.5" y="0.5" width="10" height="12" fill="#e8ecf8" stroke="#8a9ac8"/><path d="M2 3.5H9M2 5.5H9" stroke="#c08080"/><path d="M4 7.5H9V5L14 9.5L9 14V11.5H4Z" fill="#c8d070" stroke="#8a9a40" stroke-width=".7"/></svg>
<div style="left:915px;top:128px;width:1px;height:20px;background:#8e9bb5"></div><div style="left:916px;top:128px;width:1px;height:20px;background:#d5dcea"></div>
<div style="left:921px;top:129px;width:310px;height:16px;background:#fff;border:1px solid #98a6c0"></div>
<div class="t ui" style="left:926px;top:129px;height:16px;line-height:16px;letter-spacing:-0.689px;"><span id="t63">_tmain(int, TCHAR*, TCHAR*)</span></div>
<svg style="left:1236px;top:129px;" width="17" height="16" viewBox="0 0 17 16"><path d="M4 5L8 8.4L4 10.6L0.5 8.4Z" fill="#ecaaf0"/><path d="M0.5 8.4L4 10.6V14L0.5 11.4Z" fill="#c866d4"/><path d="M12 1L16 4L12 6L8.5 4Z" fill="#b8d0f0"/><path d="M8.5 4L12 6V9L8.5 7Z" fill="#7aa0dc"/><path d="M5 8.5H10V6L15.5 10.5L10 15V12.5H5Z" fill="#d8e080" stroke="#8a9a40" stroke-width=".7"/></svg>
<div class="tb" style="left:335px;top:151px;width:923px;height:537px;"></div>
<div style="left:335px;top:151px;width:248px;height:520px;background:#fff"></div>
<div style="left:338px;top:151px;width:245px;height:520px;overflow:hidden">
<svg style="left:6px;top:7px;" width="9" height="9" viewBox="0 0 9 9"><rect x="0.5" y="0.5" width="8" height="8" rx="1.5" fill="#f4f4f4" stroke="#9a9a9a"/><rect x="1" y="5" width="7" height="3" fill="#e2e2e2"/><path d="M2.5 4.5H6.5" stroke="#3a4a9a" stroke-width="1.1"/></svg>
<svg style="left:27px;top:3px;" width="16" height="14" viewBox="0 0 16 14"><path d="M0.5 13.5V1.5H6L7.5 3.5H15.5V13.5Z" fill="#f8d8b0" stroke="#c89030"/></svg>
<div class="t th" style="left:47px;top:1px;height:20px;line-height:20px;letter-spacing:-0.242px;"><span id="t64">Exchange</span></div>
<svg style="left:29px;top:27px;" width="9" height="9" viewBox="0 0 9 9"><rect x="0.5" y="0.5" width="8" height="8" rx="1.5" fill="#f4f4f4" stroke="#9a9a9a"/><rect x="1" y="5" width="7" height="3" fill="#e2e2e2"/><path d="M2.5 4.5H6.5" stroke="#3a4a9a" stroke-width="1.1"/></svg>
<svg style="left:53px;top:24px;" width="11" height="14" viewBox="0 0 11 14"><rect x="0.5" y="0.5" width="10" height="13" fill="#c4f0f4" stroke="#6888d8"/><rect x="1" y="1" width="9" height="3" fill="#fff"/><path d="M1 4.5H10M1 7.5H10" stroke="#7c9ae0" stroke-width="1"/><path d="M3 5.5H7" stroke="#f05858" stroke-width="1"/><rect x="8" y="5" width="1" height="1" fill="#f05858"/><path d="M3 9.5H7M3 11.5H7" stroke="#4a5058" stroke-width="1"/><rect x="8" y="9" width="1" height="1" fill="#4a5058"/><rect x="8" y="11" width="1" height="1" fill="#4a5058"/></svg>
<div class="t th" style="left:70px;top:21px;height:20px;line-height:20px;letter-spacing:-0.242px;"><span id="t65">Exchange</span></div>
<svg style="left:73px;top:46px;" width="16" height="12" viewBox="0 0 16 12"><path d="M0.5 3.5H6M1.5 5.5H6M0.5 7.5H6" stroke="#b4b49a" stroke-width="1"/><path d="M11 0.5L15.2 4L11 6.2L6.8 4Z" fill="#ecaaf0"/><path d="M6.8 4L11 6.2V11.3L6.8 7.6Z" fill="#c866d4"/><path d="M15.2 4L11 6.2V11.3L15.2 7.6Z" fill="#8a3a9c"/></svg>
<div class="t th" style="left:93px;top:41px;height:20px;line-height:20px;"><span id="t66">Buy(TAccountID, TStockID, UINT)</span></div>
<svg style="left:73px;top:66px;" width="16" height="12" viewBox="0 0 16 12"><path d="M0.5 3.5H6M1.5 5.5H6M0.5 7.5H6" stroke="#b4b49a" stroke-width="1"/><path d="M11 0.5L15.2 4L11 6.2L6.8 4Z" fill="#ecaaf0"/><path d="M6.8 4L11 6.2V11.3L6.8 7.6Z" fill="#c866d4"/><path d="M15.2 4L11 6.2V11.3L15.2 7.6Z" fill="#8a3a9c"/></svg>
<div class="t th" style="left:93px;top:61px;height:20px;line-height:20px;letter-spacing:-0.208px;"><span id="t67">Close()</span></div>
<svg style="left:73px;top:86px;" width="16" height="12" viewBox="0 0 16 12"><path d="M0.5 3.5H6M1.5 5.5H6M0.5 7.5H6" stroke="#b4b49a" stroke-width="1"/><path d="M11 0.5L15.2 4L11 6.2L6.8 4Z" fill="#ecaaf0"/><path d="M6.8 4L11 6.2V11.3L6.8 7.6Z" fill="#c866d4"/><path d="M15.2 4L11 6.2V11.3L15.2 7.6Z" fill="#8a3a9c"/></svg>
<div class="t th" style="left:93px;top:81px;height:20px;line-height:20px;letter-spacing:-0.051px;"><span id="t68">DeregisterAccount(TAccountID)</span></div>
<svg style="left:73px;top:106px;" width="16" height="12" viewBox="0 0 16 12"><path d="M0.5 3.5H6M1.5 5.5H6M0.5 7.5H6" stroke="#b4b49a" stroke-width="1"/><path d="M11 0.5L15.2 4L11 6.2L6.8 4Z" fill="#ecaaf0"/><path d="M6.8 4L11 6.2V11.3L6.8 7.6Z" fill="#c866d4"/><path d="M15.2 4L11 6.2V11.3L15.2 7.6Z" fill="#8a3a9c"/></svg>
<div class="t th" style="left:93px;top:101px;height:20px;line-height:20px;letter-spacing:-0.152px;"><span id="t69">DeregisterStock(TStockID)</span></div>
<svg style="left:73px;top:126px;" width="16" height="12" viewBox="0 0 16 12"><path d="M0.5 3.5H6M1.5 5.5H6M0.5 7.5H6" stroke="#b4b49a" stroke-width="1"/><path d="M11 0.5L15.2 4L11 6.2L6.8 4Z" fill="#ecaaf0"/><path d="M6.8 4L11 6.2V11.3L6.8 7.6Z" fill="#c866d4"/><path d="M15.2 4L11 6.2V11.3L15.2 7.6Z" fill="#8a3a9c"/></svg>
<div class="t th" style="left:93px;top:121px;height:20px;line-height:20px;letter-spacing:-0.493px;"><span id="t70">Exchange(LPCTSTR)</span></div>
<svg style="left:73px;top:146px;" width="16" height="12" viewBox="0 0 16 12"><path d="M0.5 3.5H6M1.5 5.5H6M0.5 7.5H6" stroke="#b4b49a" stroke-width="1"/><path d="M11 0.5L15.2 4L11 6.2L6.8 4Z" fill="#ecaaf0"/><path d="M6.8 4L11 6.2V11.3L6.8 7.6Z" fill="#c866d4"/><path d="M15.2 4L11 6.2V11.3L15.2 7.6Z" fill="#8a3a9c"/></svg>
<div class="t th" style="left:93px;top:141px;height:20px;line-height:20px;letter-spacing:-0.158px;"><span id="t71">FindAccount(CString)</span></div>
<svg style="left:73px;top:166px;" width="16" height="12" viewBox="0 0 16 12"><path d="M0.5 3.5H6M1.5 5.5H6M0.5 7.5H6" stroke="#b4b49a" stroke-width="1"/><path d="M11 0.5L15.2 4L11 6.2L6.8 4Z" fill="#ecaaf0"/><path d="M6.8 4L11 6.2V11.3L6.8 7.6Z" fill="#c866d4"/><path d="M15.2 4L11 6.2V11.3L15.2 7.6Z" fill="#8a3a9c"/></svg>
<div class="t th" style="left:93px;top:161px;height:20px;line-height:20px;letter-spacing:-0.218px;"><span id="t72">FindStock(CString)</span></div>
<svg style="left:73px;top:186px;" width="16" height="12" viewBox="0 0 16 12"><path d="M0.5 3.5H6M1.5 5.5H6M0.5 7.5H6" stroke="#b4b49a" stroke-width="1"/><path d="M11 0.5L15.2 4L11 6.2L6.8 4Z" fill="#ecaaf0"/><path d="M6.8 4L11 6.2V11.3L6.8 7.6Z" fill="#c866d4"/><path d="M15.2 4L11 6.2V11.3L15.2 7.6Z" fill="#8a3a9c"/></svg>
<div class="t th" style="left:93px;top:181px;height:20px;line-height:20px;letter-spacing:-0.086px;"><span id="t73">FreeAccounts()</span></div>
<svg style="left:73px;top:206px;" width="16" height="12" viewBox="0 0 16 12"><path d="M0.5 3.5H6M1.5 5.5H6M0.5 7.5H6" stroke="#b4b49a" stroke-width="1"/><path d="M11 0.5L15.2 4L11 6.2L6.8 4Z" fill="#ecaaf0"/><path d="M6.8 4L11 6.2V11.3L6.8 7.6Z" fill="#c866d4"/><path d="M15.2 4L11 6.2V11.3L15.2 7.6Z" fill="#8a3a9c"/></svg>
<div class="t th" style="left:93px;top:201px;height:20px;line-height:20px;letter-spacing:-0.096px;"><span id="t74">FreeSectors()</span></div>
<svg style="left:73px;top:226px;" width="16" height="12" viewBox="0 0 16 12"><path d="M0.5 3.5H6M1.5 5.5H6M0.5 7.5H6" stroke="#b4b49a" stroke-width="1"/><path d="M11 0.5L15.2 4L11 6.2L6.8 4Z" fill="#ecaaf0"/><path d="M6.8 4L11 6.2V11.3L6.8 7.6Z" fill="#c866d4"/><path d="M15.2 4L11 6.2V11.3L15.2 7.6Z" fill="#8a3a9c"/></svg>
<div class="t th" style="left:93px;top:221px;height:20px;line-height:20px;letter-spacing:-0.164px;"><span id="t75">FreeStocks()</span></div>
<svg style="left:73px;top:246px;" width="16" height="12" viewBox="0 0 16 12"><path d="M0.5 3.5H6M1.5 5.5H6M0.5 7.5H6" stroke="#b4b49a" stroke-width="1"/><path d="M11 0.5L15.2 4L11 6.2L6.8 4Z" fill="#ecaaf0"/><path d="M6.8 4L11 6.2V11.3L6.8 7.6Z" fill="#c866d4"/><path d="M15.2 4L11 6.2V11.3L15.2 7.6Z" fill="#8a3a9c"/></svg>
<div class="t th" style="left:93px;top:241px;height:20px;line-height:20px;letter-spacing:-0.066px;"><span id="t76">GetAccount(TAccountID)</span></div>
<svg style="left:73px;top:266px;" width="16" height="12" viewBox="0 0 16 12"><path d="M0.5 3.5H6M1.5 5.5H6M0.5 7.5H6" stroke="#b4b49a" stroke-width="1"/><path d="M11 0.5L15.2 4L11 6.2L6.8 4Z" fill="#ecaaf0"/><path d="M6.8 4L11 6.2V11.3L6.8 7.6Z" fill="#c866d4"/><path d="M15.2 4L11 6.2V11.3L15.2 7.6Z" fill="#8a3a9c"/></svg>
<div class="t th" style="left:93px;top:261px;height:20px;line-height:20px;letter-spacing:-0.166px;"><span id="t77">GetSector(ESector)</span></div>
<svg style="left:73px;top:286px;" width="16" height="12" viewBox="0 0 16 12"><path d="M0.5 3.5H6M1.5 5.5H6M0.5 7.5H6" stroke="#b4b49a" stroke-width="1"/><path d="M11 0.5L15.2 4L11 6.2L6.8 4Z" fill="#ecaaf0"/><path d="M6.8 4L11 6.2V11.3L6.8 7.6Z" fill="#c866d4"/><path d="M15.2 4L11 6.2V11.3L15.2 7.6Z" fill="#8a3a9c"/></svg>
<div class="t th" style="left:93px;top:281px;height:20px;line-height:20px;letter-spacing:-0.211px;"><span id="t78">GetStock(TStockID)</span></div>
<svg style="left:73px;top:306px;" width="16" height="12" viewBox="0 0 16 12"><path d="M0.5 3.5H6M1.5 5.5H6M0.5 7.5H6" stroke="#b4b49a" stroke-width="1"/><path d="M11 0.5L15.2 4L11 6.2L6.8 4Z" fill="#ecaaf0"/><path d="M6.8 4L11 6.2V11.3L6.8 7.6Z" fill="#c866d4"/><path d="M15.2 4L11 6.2V11.3L15.2 7.6Z" fill="#8a3a9c"/></svg>
<div class="t th" style="left:93px;top:301px;height:20px;line-height:20px;letter-spacing:-0.267px;"><span id="t79">GetStockVolume()</span></div>
<svg style="left:73px;top:326px;" width="16" height="12" viewBox="0 0 16 12"><path d="M0.5 3.5H6M1.5 5.5H6M0.5 7.5H6" stroke="#b4b49a" stroke-width="1"/><path d="M11 0.5L15.2 4L11 6.2L6.8 4Z" fill="#ecaaf0"/><path d="M6.8 4L11 6.2V11.3L6.8 7.6Z" fill="#c866d4"/><path d="M15.2 4L11 6.2V11.3L15.2 7.6Z" fill="#8a3a9c"/></svg>
<div class="t th" style="left:93px;top:321px;height:20px;line-height:20px;letter-spacing:-0.042px;"><span id="t80">Open()</span></div>
<svg style="left:73px;top:346px;" width="16" height="12" viewBox="0 0 16 12"><path d="M0.5 3.5H6M1.5 5.5H6M0.5 7.5H6" stroke="#b4b49a" stroke-width="1"/><path d="M11 0.5L15.2 4L11 6.2L6.8 4Z" fill="#ecaaf0"/><path d="M6.8 4L11 6.2V11.3L6.8 7.6Z" fill="#c866d4"/><path d="M15.2 4L11 6.2V11.3L15.2 7.6Z" fill="#8a3a9c"/></svg>
<div class="t th" style="left:93px;top:341px;height:20px;line-height:20px;letter-spacing:-0.003px;"><span id="t81">RegisterAccount(Account*)</span></div>
<svg style="left:73px;top:366px;" width="16" height="12" viewBox="0 0 16 12"><path d="M0.5 3.5H6M1.5 5.5H6M0.5 7.5H6" stroke="#b4b49a" stroke-width="1"/><path d="M11 0.5L15.2 4L11 6.2L6.8 4Z" fill="#ecaaf0"/><path d="M6.8 4L11 6.2V11.3L6.8 7.6Z" fill="#c866d4"/><path d="M15.2 4L11 6.2V11.3L15.2 7.6Z" fill="#8a3a9c"/></svg>
<div class="t th" style="left:93px;top:361px;height:20px;line-height:20px;letter-spacing:-0.076px;"><span id="t82">RegisterStock(Stock*)</span></div>
<svg style="left:73px;top:386px;" width="16" height="12" viewBox="0 0 16 12"><path d="M0.5 3.5H6M1.5 5.5H6M0.5 7.5H6" stroke="#b4b49a" stroke-width="1"/><path d="M11 0.5L15.2 4L11 6.2L6.8 4Z" fill="#ecaaf0"/><path d="M6.8 4L11 6.2V11.3L6.8 7.6Z" fill="#c866d4"/><path d="M15.2 4L11 6.2V11.3L15.2 7.6Z" fill="#8a3a9c"/></svg>
<div class="t th" style="left:93px;top:381px;height:20px;line-height:20px;"><span id="t83">Sell(TAccountID, TStockID, UINT)</span></div>
<svg style="left:73px;top:406px;" width="16" height="12" viewBox="0 0 16 12"><path d="M0.5 3.5H6M1.5 5.5H6M0.5 7.5H6" stroke="#b4b49a" stroke-width="1"/><path d="M11 0.5L15.2 4L11 6.2L6.8 4Z" fill="#ecaaf0"/><path d="M6.8 4L11 6.2V11.3L6.8 7.6Z" fill="#c866d4"/><path d="M15.2 4L11 6.2V11.3L15.2 7.6Z" fill="#8a3a9c"/></svg>
<div class="t th" style="left:93px;top:401px;height:20px;line-height:20px;letter-spacing:-0.048px;"><span id="t84">TransmitStock(IStock*)</span></div>
<svg style="left:73px;top:426px;" width="16" height="12" viewBox="0 0 16 12"><path d="M0.5 3.5H6M1.5 5.5H6M0.5 7.5H6" stroke="#b4b49a" stroke-width="1"/><path d="M11 0.5L15.2 4L11 6.2L6.8 4Z" fill="#ecaaf0"/><path d="M6.8 4L11 6.2V11.3L6.8 7.6Z" fill="#c866d4"/><path d="M15.2 4L11 6.2V11.3L15.2 7.6Z" fill="#8a3a9c"/></svg>
<div class="t th" style="left:93px;top:421px;height:20px;line-height:20px;letter-spacing:-0.075px;"><span id="t85">UpdateSector(ESector, INT)</span></div>
<svg style="left:73px;top:446px;" width="16" height="12" viewBox="0 0 16 12"><path d="M0.5 3.5H6M1.5 5.5H6M0.5 7.5H6" stroke="#b4b49a" stroke-width="1"/><path d="M11 0.5L15.2 4L11 6.2L6.8 4Z" fill="#ecaaf0"/><path d="M6.8 4L11 6.2V11.3L6.8 7.6Z" fill="#c866d4"/><path d="M15.2 4L11 6.2V11.3L15.2 7.6Z" fill="#8a3a9c"/></svg>
<div class="t th" style="left:93px;top:441px;height:20px;line-height:20px;letter-spacing:0.028px;"><span id="t86">~Exchange()</span></div>
</div>
<div style="left:335px;top:671px;width:248px;height:17px;background:#f0f0f0"></div>
<div style="left:352px;top:672px;width:203px;height:15px;background:#cdcdcd"></div>
<svg style="left:335px;top:671px;" width="17" height="17" viewBox="0 0 17 17"><path d="M10.5 5.0L7 8.5L10.5 12.0" fill="none" stroke="#505050" stroke-width="1.6"/></svg>
<svg style="left:566px;top:671px;" width="17" height="17" viewBox="0 0 17 17"><path d="M6.5 5.0L10 8.5L6.5 12.0" fill="none" stroke="#505050" stroke-width="1.6"/></svg>
<svg style="left:585px;top:415px;" width="3" height="12" viewBox="0 0 3 12"><rect x="0" y="0" width="2" height="2" fill="#fff"/><rect x="0" y="4" width="2" height="2" fill="#fff"/><rect x="0" y="8" width="2" height="2" fill="#fff"/></svg>
<div style="left:591px;top:151px;width:16px;height:520px;background:#f0f0f0"></div>
<div style="left:607px;top:151px;width:635px;height:520px;background:#fff"></div>
<div style="left:591px;top:151px;width:651px;height:520px;overflow:hidden">
<div class="t code" style="right:593px;top:1px;height:16px;line-height:16px;color:#2b91af">70</div>
<div class="t code" style="left:62px;top:1px;height:16px;line-height:16px">    <b style='color:#0000ff;font-weight:normal'>if</b>(m_exchSectors[e])</div>
<div class="t code" style="right:593px;top:17px;height:16px;line-height:16px;color:#2b91af">71</div>
<div class="t code" style="left:62px;top:17px;height:16px;line-height:16px">    {</div>
<div class="t code" style="right:593px;top:33px;height:16px;line-height:16px;color:#2b91af">72</div>
<div class="t code" style="left:62px;top:33px;height:16px;line-height:16px">        <b style='color:#0000ff;font-weight:normal'>return</b> m_exchSectors[e];</div>
<div class="t code" style="right:593px;top:49px;height:16px;line-height:16px;color:#2b91af">73</div>
<div class="t code" style="left:62px;top:49px;height:16px;line-height:16px">    }</div>
<div class="t code" style="right:593px;top:65px;height:16px;line-height:16px;color:#2b91af">74</div>
<div class="t code" style="left:62px;top:65px;height:16px;line-height:16px">    <b style='color:#0000ff;font-weight:normal'>return</b> NULL;</div>
<div class="t code" style="right:593px;top:81px;height:16px;line-height:16px;color:#2b91af">75</div>
<div class="t code" style="left:62px;top:81px;height:16px;line-height:16px">}</div>
<div class="t code" style="right:593px;top:97px;height:16px;line-height:16px;color:#2b91af">76</div>
<div class="t code" style="right:593px;top:113px;height:16px;line-height:16px;color:#2b91af">77</div>
<div class="t code" style="left:62px;top:113px;height:16px;line-height:16px"><b style='color:#0000ff;font-weight:normal'>void</b> Exchange::UpdateSector( ESector sec, INT amount)</div>
<div class="t code" style="right:593px;top:129px;height:16px;line-height:16px;color:#2b91af">78</div>
<div class="t code" style="left:62px;top:129px;height:16px;line-height:16px">{</div>
<div class="t code" style="right:593px;top:145px;height:16px;line-height:16px;color:#2b91af">79</div>
<div class="t code" style="left:62px;top:145px;height:16px;line-height:16px">    Sector* pSector = GetSector(sec);</div>
<div class="t code" style="right:593px;top:161px;height:16px;line-height:16px;color:#2b91af">80</div>
<div class="t code" style="left:62px;top:161px;height:16px;line-height:16px">    <b style='color:#0000ff;font-weight:normal'>if</b>(pSector)</div>
<div class="t code" style="right:593px;top:177px;height:16px;line-height:16px;color:#2b91af">81</div>
<div class="t code" style="left:62px;top:177px;height:16px;line-height:16px">    {</div>
<div class="t code" style="right:593px;top:193px;height:16px;line-height:16px;color:#2b91af">82</div>
<div class="t code" style="left:62px;top:193px;height:16px;line-height:16px">        pSector-&gt;Move(amount);</div>
<div class="t code" style="right:593px;top:209px;height:16px;line-height:16px;color:#2b91af">83</div>
<div class="t code" style="left:62px;top:209px;height:16px;line-height:16px">    }</div>
<div class="t code" style="right:593px;top:225px;height:16px;line-height:16px;color:#2b91af">84</div>
<div class="t code" style="left:62px;top:225px;height:16px;line-height:16px">}</div>
<div class="t code" style="right:593px;top:241px;height:16px;line-height:16px;color:#2b91af">85</div>
<div class="t code" style="right:593px;top:257px;height:16px;line-height:16px;color:#2b91af">86</div>
<div class="t code" style="left:62px;top:257px;height:16px;line-height:16px">Account* Exchange::GetAccount(TAccountID id)</div>
<div class="t code" style="right:593px;top:273px;height:16px;line-height:16px;color:#2b91af">87</div>
<div class="t code" style="left:62px;top:273px;height:16px;line-height:16px">{</div>
<div class="t code" style="right:593px;top:289px;height:16px;line-height:16px;color:#2b91af">88</div>
<div class="t code" style="left:62px;top:289px;height:16px;line-height:16px">    Account* pAccount = NULL;</div>
<div class="t code" style="right:593px;top:305px;height:16px;line-height:16px;color:#2b91af">89</div>
<div class="t code" style="left:62px;top:305px;height:16px;line-height:16px">    TAccountList::iterator find = m_exchAccounts.find(id);</div>
<div class="t code" style="right:593px;top:321px;height:16px;line-height:16px;color:#2b91af">90</div>
<div class="t code" style="left:62px;top:321px;height:16px;line-height:16px">    <b style='color:#0000ff;font-weight:normal'>if</b>(find != m_exchAccounts.end())</div>
<div class="t code" style="right:593px;top:337px;height:16px;line-height:16px;color:#2b91af">91</div>
<div class="t code" style="left:62px;top:337px;height:16px;line-height:16px">    {</div>
<div class="t code" style="right:593px;top:353px;height:16px;line-height:16px;color:#2b91af">92</div>
<div class="t code" style="left:62px;top:353px;height:16px;line-height:16px">        pAccount = find-&gt;second;</div>
<div class="t code" style="right:593px;top:369px;height:16px;line-height:16px;color:#2b91af">93</div>
<div class="t code" style="left:62px;top:369px;height:16px;line-height:16px">    }</div>
<div class="t code" style="right:593px;top:385px;height:16px;line-height:16px;color:#2b91af">94</div>
<div class="t code" style="left:62px;top:385px;height:16px;line-height:16px">    <b style='color:#0000ff;font-weight:normal'>return</b> pAccount;</div>
<div class="t code" style="right:593px;top:401px;height:16px;line-height:16px;color:#2b91af">95</div>
<div class="t code" style="left:62px;top:401px;height:16px;line-height:16px">}</div>
<div class="t code" style="right:593px;top:417px;height:16px;line-height:16px;color:#2b91af">96</div>
<div class="t code" style="left:62px;top:417px;height:16px;line-height:16px">Account* Exchange::FindAccount(CString name)</div>
<div class="t code" style="right:593px;top:433px;height:16px;line-height:16px;color:#2b91af">97</div>
<div class="t code" style="left:62px;top:433px;height:16px;line-height:16px">{</div>
<div class="t code" style="right:593px;top:449px;height:16px;line-height:16px;color:#2b91af">98</div>
<div class="t code" style="left:62px;top:449px;height:16px;line-height:16px">    Account* pAccount = NULL;</div>
<div class="t code" style="right:593px;top:465px;height:16px;line-height:16px;color:#2b91af">99</div>
<div class="t code" style="left:62px;top:465px;height:16px;line-height:16px">    TAccountList::iterator find;</div>
<div class="t code" style="right:593px;top:481px;height:16px;line-height:16px;color:#2b91af">100</div>
<div class="t code" style="left:62px;top:481px;height:16px;line-height:16px">    <b style='color:#0000ff;font-weight:normal'>if</b>(find != m_exchAccounts.end())</div>
<div class="t code" style="right:593px;top:497px;height:16px;line-height:16px;color:#2b91af">101</div>
<div class="t code" style="left:62px;top:497px;height:16px;line-height:16px">    {</div>
<div class="t code" style="right:593px;top:513px;height:16px;line-height:16px;color:#2b91af">102</div>
<div class="t code" style="left:62px;top:513px;height:16px;line-height:16px">        pAccount = find-&gt;second;</div>
</div>
<div style="left:1242px;top:151px;width:16px;height:520px;background:#f0f0f0"></div>
<div style="left:1243px;top:300px;width:14px;height:120px;background:#cdcdcd"></div>
<svg style="left:1242px;top:151px;" width="16" height="17" viewBox="0 0 16 17"><path d="M4.5 10.5L8.0 7L11.5 10.5" fill="none" stroke="#505050" stroke-width="1.6"/></svg>
<svg style="left:1242px;top:654px;" width="16" height="17" viewBox="0 0 16 17"><path d="M4.5 6.5L8.0 10L11.5 6.5" fill="none" stroke="#505050" stroke-width="1.6"/></svg>
<div style="left:591px;top:671px;width:651px;height:17px;background:#f0f0f0"></div>
<div style="left:608px;top:672px;width:292px;height:15px;background:#cdcdcd"></div>
<svg style="left:591px;top:671px;" width="17" height="17" viewBox="0 0 17 17"><path d="M10.5 5.0L7 8.5L10.5 12.0" fill="none" stroke="#505050" stroke-width="1.6"/></svg>
<svg style="left:1225px;top:671px;" width="17" height="17" viewBox="0 0 17 17"><path d="M6.5 5.0L10 8.5L6.5 12.0" fill="none" stroke="#505050" stroke-width="1.6"/></svg>
<div style="left:1242px;top:671px;width:16px;height:17px;background:#f0f0f0"></div>
<div class="cap" style="left:334px;top:694px;width:795px;height:22px;"></div>
<div class="t ui w" style="left:338px;top:694px;height:22px;line-height:22px;letter-spacing:-0.327px;"><span id="t87">Traceability</span></div>
<div class="tb" style="left:334px;top:716px;width:795px;height:27px;"></div>
<svg style="left:339px;top:722px;" width="16" height="14" viewBox="0 0 16 14"><circle cx="3.3" cy="10" r="2.6" fill="#e4ecfc" stroke="#111" stroke-width="1"/><circle cx="9.7" cy="10" r="2.6" fill="#e4ecfc" stroke="#111" stroke-width="1"/><path d="M2.6 7.6L5.4 2.6M9.6 7.4L13 2.6L15.4 4.4M5.9 9.6H7.1" fill="none" stroke="#111" stroke-width="1"/></svg>
<svg style="left:361px;top:722px;" width="17" height="15" viewBox="0 0 17 15"><rect x="0.5" y="3.5" width="11" height="11" fill="#f4f8ff" stroke="#2a58c8"/><path d="M2.5 8.5H9M2.5 10.5H9M2.5 12.5H9" stroke="#2a58c8"/><path d="M4 6.5L7 3.5L9 5.5L13 1.5L15 3L9 8Z" fill="#d8cc60" stroke="#6a6020" stroke-width=".7"/><rect x="14.5" y="0.5" width="2" height="6" fill="#111"/></svg>
<svg style="left:383px;top:722px;" width="16" height="15" viewBox="0 0 16 15"><rect x="2.5" y="0.5" width="13" height="12" fill="#e8f0ff" stroke="#1a2a70"/><rect x="3" y="1" width="12" height="2" fill="#1a2a70"/><rect x="4.5" y="4.5" width="4" height="3" fill="#fff" stroke="#3a5ab0"/><rect x="9.5" y="7.5" width="4" height="3" fill="#fff" stroke="#3a5ab0"/><path d="M8.5 6H11.5V7.5" fill="none" stroke="#3a5ab0"/><path d="M1 6V12.5C1 14 3 14.5 5 13M3.5 11.5L5.5 13L4 15" fill="none" stroke="#1a2a70" stroke-width="1.1"/></svg>
<div style="left:406px;top:720px;width:1px;height:20px;background:#8e9bb5"></div><div style="left:407px;top:720px;width:1px;height:20px;background:#d5dcea"></div>
<svg style="left:416px;top:722px;" width="13" height="15" viewBox="0 0 13 15"><rect x="0.5" y="0.5" width="3" height="3" fill="#dfe6f2" stroke="#9aa6c0" stroke-width=".6"/><rect x="0.5" y="5.5" width="3" height="3" fill="#dfe6f2" stroke="#9aa6c0" stroke-width=".6"/><rect x="0.5" y="10.5" width="3" height="3" fill="#dfe6f2" stroke="#9aa6c0" stroke-width=".6"/><path d="M6 2L7.6 3.6L11.4 0.4M6.4 5.4L9.6 8.6M9.6 5.4L6.4 8.6M6 12L7.6 13.6L11.4 10.4" fill="none" stroke="#111" stroke-width="1"/></svg>
<svg style="left:437px;top:728px;" width="6" height="4" viewBox="0 0 6 4"><path d="M0 0H6L3 3.2Z" fill="#000"/></svg>
<svg style="left:449px;top:722px;" width="16" height="16" viewBox="0 0 16 16"><circle cx="8" cy="8" r="7.3" fill="#7878d0" stroke="#4a4ab0"/><circle cx="8" cy="8" r="5.2" fill="none" stroke="#cfcff4" stroke-width="1"/><path d="M6.2 6.4a1.9 1.9 0 1 1 2.6 1.8c-.6.3-.8.6-.8 1.4" fill="none" stroke="#e8e8ff" stroke-width="1.2"/><circle cx="8" cy="11.3" r=".8" fill="#e8e8ff"/></svg>
<div style="left:334px;top:743px;width:780px;height:283px;background:#fff"></div>
<div style="left:335px;top:743px;width:779px;height:283px;overflow:hidden">
<svg style="left:44px;top:6px;" width="9" height="9" viewBox="0 0 9 9"><rect x="0.5" y="0.5" width="8" height="8" rx="1.5" fill="#f4f4f4" stroke="#9a9a9a"/><rect x="1" y="5" width="7" height="3" fill="#e2e2e2"/><path d="M2.5 4.5H6.5" stroke="#3a4a9a" stroke-width="1.1"/><path d="M4.5 2.5V6.5" stroke="#3a4a9a" stroke-width="1.1"/></svg>
<svg style="left:62px;top:3px;" width="11" height="14" viewBox="0 0 11 14"><rect x="0.5" y="0.5" width="10" height="13" fill="#c4f0f4" stroke="#6888d8"/><rect x="1" y="1" width="9" height="3" fill="#fff"/><path d="M1 4.5H10M1 7.5H10" stroke="#7c9ae0" stroke-width="1"/><path d="M3 5.5H7" stroke="#f05858" stroke-width="1"/><rect x="8" y="5" width="1" height="1" fill="#f05858"/><path d="M3 9.5H7M3 11.5H7" stroke="#4a5058" stroke-width="1"/><rect x="8" y="9" width="1" height="1" fill="#4a5058"/><rect x="8" y="11" width="1" height="1" fill="#4a5058"/></svg>
<div class="t th" style="left:80px;top:0px;height:20px;line-height:20px;letter-spacing:-0.073px;"><span id="t88">Exchange.TStockList2</span></div>
<svg style="left:44px;top:26px;" width="9" height="9" viewBox="0 0 9 9"><rect x="0.5" y="0.5" width="8" height="8" rx="1.5" fill="#f4f4f4" stroke="#9a9a9a"/><rect x="1" y="5" width="7" height="3" fill="#e2e2e2"/><path d="M2.5 4.5H6.5" stroke="#3a4a9a" stroke-width="1.1"/><path d="M4.5 2.5V6.5" stroke="#3a4a9a" stroke-width="1.1"/></svg>
<svg style="left:62px;top:23px;" width="11" height="14" viewBox="0 0 11 14"><rect x="0.5" y="0.5" width="10" height="13" fill="#c4f0f4" stroke="#6888d8"/><rect x="1" y="1" width="9" height="3" fill="#fff"/><path d="M1 4.5H10M1 7.5H10" stroke="#7c9ae0" stroke-width="1"/><path d="M3 5.5H7" stroke="#f05858" stroke-width="1"/><rect x="8" y="5" width="1" height="1" fill="#f05858"/><path d="M3 9.5H7M3 11.5H7" stroke="#4a5058" stroke-width="1"/><rect x="8" y="9" width="1" height="1" fill="#4a5058"/><rect x="8" y="11" width="1" height="1" fill="#4a5058"/></svg>
<div class="t th" style="left:80px;top:20px;height:20px;line-height:20px;letter-spacing:-0.073px;"><span id="t89">Exchange.TStockList2</span></div>
<svg style="left:25px;top:46px;" width="9" height="9" viewBox="0 0 9 9"><rect x="0.5" y="0.5" width="8" height="8" rx="1.5" fill="#f4f4f4" stroke="#9a9a9a"/><rect x="1" y="5" width="7" height="3" fill="#e2e2e2"/><path d="M2.5 4.5H6.5" stroke="#3a4a9a" stroke-width="1.1"/></svg>
<svg style="left:42px;top:46px;" width="14" height="9" viewBox="0 0 14 9"><path d="M0 4.5H9" stroke="#3a4ab0" stroke-dasharray="2 1.5" stroke-width="1.1"/><path d="M9.5 1.5L13 4.5L9.5 7.5" fill="none" stroke="#3a4ab0" stroke-width="1.1"/></svg>
<div class="t th" style="left:60px;top:40px;height:20px;line-height:20px;letter-spacing:-0.425px;"><span id="t90">implements</span></div>
<svg style="left:44px;top:66px;" width="9" height="9" viewBox="0 0 9 9"><rect x="0.5" y="0.5" width="8" height="8" rx="1.5" fill="#f4f4f4" stroke="#9a9a9a"/><rect x="1" y="5" width="7" height="3" fill="#e2e2e2"/><path d="M2.5 4.5H6.5" stroke="#3a4a9a" stroke-width="1.1"/><path d="M4.5 2.5V6.5" stroke="#3a4a9a" stroke-width="1.1"/></svg>
<svg style="left:61px;top:66px;" width="14" height="8" viewBox="0 0 14 8"><circle cx="2" cy="4" r="1.3" fill="none" stroke="#222"/><path d="M3.5 4H8" stroke="#222" stroke-width="1.2"/><circle cx="10.5" cy="4" r="2.6" fill="#ddd" stroke="#222" stroke-width="1.2"/></svg>
<div class="t th" style="left:80px;top:60px;height:20px;line-height:20px;letter-spacing:-0.220px;"><span id="t91">IExchange</span></div>
<svg style="left:25px;top:86px;" width="9" height="9" viewBox="0 0 9 9"><rect x="0.5" y="0.5" width="8" height="8" rx="1.5" fill="#f4f4f4" stroke="#9a9a9a"/><rect x="1" y="5" width="7" height="3" fill="#e2e2e2"/><path d="M2.5 4.5H6.5" stroke="#3a4a9a" stroke-width="1.1"/></svg>
<svg style="left:42px;top:86px;" width="14" height="9" viewBox="0 0 14 9"><path d="M0 3H10M0 6H10" stroke="#3a4ab0" stroke-width="1.1"/><path d="M9 0.5L13.5 4.5L9 8.5" fill="none" stroke="#3a4ab0" stroke-width="1.2"/></svg>
<div class="t th" style="left:60px;top:80px;height:20px;line-height:20px;letter-spacing:-0.249px;"><span id="t92">Association to</span></div>
<svg style="left:44px;top:106px;" width="9" height="9" viewBox="0 0 9 9"><rect x="0.5" y="0.5" width="8" height="8" rx="1.5" fill="#f4f4f4" stroke="#9a9a9a"/><rect x="1" y="5" width="7" height="3" fill="#e2e2e2"/><path d="M2.5 4.5H6.5" stroke="#3a4a9a" stroke-width="1.1"/><path d="M4.5 2.5V6.5" stroke="#3a4a9a" stroke-width="1.1"/></svg>
<svg style="left:62px;top:103px;" width="11" height="14" viewBox="0 0 11 14"><rect x="0.5" y="0.5" width="10" height="13" fill="#c4f0f4" stroke="#6888d8"/><rect x="1" y="1" width="9" height="3" fill="#fff"/><path d="M1 4.5H10M1 7.5H10" stroke="#7c9ae0" stroke-width="1"/><path d="M3 5.5H7" stroke="#f05858" stroke-width="1"/><rect x="8" y="5" width="1" height="1" fill="#f05858"/><path d="M3 9.5H7M3 11.5H7" stroke="#4a5058" stroke-width="1"/><rect x="8" y="9" width="1" height="1" fill="#4a5058"/><rect x="8" y="11" width="1" height="1" fill="#4a5058"/></svg>
<div class="t th" style="left:80px;top:100px;height:20px;line-height:20px;letter-spacing:-0.040px;"><span id="t93">Exchange.TAccountList2</span></div>
<svg style="left:44px;top:126px;" width="9" height="9" viewBox="0 0 9 9"><rect x="0.5" y="0.5" width="8" height="8" rx="1.5" fill="#f4f4f4" stroke="#9a9a9a"/><rect x="1" y="5" width="7" height="3" fill="#e2e2e2"/><path d="M2.5 4.5H6.5" stroke="#3a4a9a" stroke-width="1.1"/><path d="M4.5 2.5V6.5" stroke="#3a4a9a" stroke-width="1.1"/></svg>
<svg style="left:62px;top:123px;" width="11" height="14" viewBox="0 0 11 14"><rect x="0.5" y="0.5" width="10" height="13" fill="#c4f0f4" stroke="#6888d8"/><rect x="1" y="1" width="9" height="3" fill="#fff"/><path d="M1 4.5H10M1 7.5H10" stroke="#7c9ae0" stroke-width="1"/><path d="M3 5.5H7" stroke="#f05858" stroke-width="1"/><rect x="8" y="5" width="1" height="1" fill="#f05858"/><path d="M3 9.5H7M3 11.5H7" stroke="#4a5058" stroke-width="1"/><rect x="8" y="9" width="1" height="1" fill="#4a5058"/><rect x="8" y="11" width="1" height="1" fill="#4a5058"/></svg>
<div class="t th" style="left:80px;top:120px;height:20px;line-height:20px;letter-spacing:-0.073px;"><span id="t94">Exchange.TStockList2</span></div>
<svg style="left:44px;top:146px;" width="9" height="9" viewBox="0 0 9 9"><rect x="0.5" y="0.5" width="8" height="8" rx="1.5" fill="#f4f4f4" stroke="#9a9a9a"/><rect x="1" y="5" width="7" height="3" fill="#e2e2e2"/><path d="M2.5 4.5H6.5" stroke="#3a4a9a" stroke-width="1.1"/><path d="M4.5 2.5V6.5" stroke="#3a4a9a" stroke-width="1.1"/></svg>
<svg style="left:62px;top:143px;" width="11" height="14" viewBox="0 0 11 14"><rect x="0.5" y="0.5" width="10" height="13" fill="#c4f0f4" stroke="#6888d8"/><rect x="1" y="1" width="9" height="3" fill="#fff"/><path d="M1 4.5H10M1 7.5H10" stroke="#7c9ae0" stroke-width="1"/><path d="M3 5.5H7" stroke="#f05858" stroke-width="1"/><rect x="8" y="5" width="1" height="1" fill="#f05858"/><path d="M3 9.5H7M3 11.5H7" stroke="#4a5058" stroke-width="1"/><rect x="8" y="9" width="1" height="1" fill="#4a5058"/><rect x="8" y="11" width="1" height="1" fill="#4a5058"/></svg>
<div class="t th" style="left:80px;top:140px;height:20px;line-height:20px;letter-spacing:-0.123px;"><span id="t95">Exchange.TStockList</span></div>
<svg style="left:44px;top:166px;" width="9" height="9" viewBox="0 0 9 9"><rect x="0.5" y="0.5" width="8" height="8" rx="1.5" fill="#f4f4f4" stroke="#9a9a9a"/><rect x="1" y="5" width="7" height="3" fill="#e2e2e2"/><path d="M2.5 4.5H6.5" stroke="#3a4a9a" stroke-width="1.1"/><path d="M4.5 2.5V6.5" stroke="#3a4a9a" stroke-width="1.1"/></svg>
<svg style="left:62px;top:163px;" width="11" height="14" viewBox="0 0 11 14"><rect x="0.5" y="0.5" width="10" height="13" fill="#c4f0f4" stroke="#6888d8"/><rect x="1" y="1" width="9" height="3" fill="#fff"/><path d="M1 4.5H10M1 7.5H10" stroke="#7c9ae0" stroke-width="1"/><path d="M3 5.5H7" stroke="#f05858" stroke-width="1"/><rect x="8" y="5" width="1" height="1" fill="#f05858"/><path d="M3 9.5H7M3 11.5H7" stroke="#4a5058" stroke-width="1"/><rect x="8" y="9" width="1" height="1" fill="#4a5058"/><rect x="8" y="11" width="1" height="1" fill="#4a5058"/></svg>
<div class="t th" style="left:80px;top:160px;height:20px;line-height:20px;letter-spacing:-0.133px;"><span id="t96">Sector</span></div>
<svg style="left:44px;top:186px;" width="9" height="9" viewBox="0 0 9 9"><rect x="0.5" y="0.5" width="8" height="8" rx="1.5" fill="#f4f4f4" stroke="#9a9a9a"/><rect x="1" y="5" width="7" height="3" fill="#e2e2e2"/><path d="M2.5 4.5H6.5" stroke="#3a4a9a" stroke-width="1.1"/><path d="M4.5 2.5V6.5" stroke="#3a4a9a" stroke-width="1.1"/></svg>
<svg style="left:62px;top:183px;" width="11" height="14" viewBox="0 0 11 14"><rect x="0.5" y="0.5" width="10" height="13" fill="#c4f0f4" stroke="#6888d8"/><rect x="1" y="1" width="9" height="3" fill="#fff"/><path d="M1 4.5H10M1 7.5H10" stroke="#7c9ae0" stroke-width="1"/><path d="M3 5.5H7" stroke="#f05858" stroke-width="1"/><rect x="8" y="5" width="1" height="1" fill="#f05858"/><path d="M3 9.5H7M3 11.5H7" stroke="#4a5058" stroke-width="1"/><rect x="8" y="9" width="1" height="1" fill="#4a5058"/><rect x="8" y="11" width="1" height="1" fill="#4a5058"/></svg>
<div class="t th" style="left:80px;top:180px;height:20px;line-height:20px;letter-spacing:-0.083px;"><span id="t97">Exchange.TAccountList</span></div>
<svg style="left:25px;top:206px;" width="9" height="9" viewBox="0 0 9 9"><rect x="0.5" y="0.5" width="8" height="8" rx="1.5" fill="#f4f4f4" stroke="#9a9a9a"/><rect x="1" y="5" width="7" height="3" fill="#e2e2e2"/><path d="M2.5 4.5H6.5" stroke="#3a4a9a" stroke-width="1.1"/></svg>
<svg style="left:42px;top:206px;" width="14" height="9" viewBox="0 0 14 9"><path d="M0 4.5H9" stroke="#3a4ab0" stroke-dasharray="2 1.5" stroke-width="1.1"/><path d="M9.5 1.5L13 4.5L9.5 7.5" fill="none" stroke="#3a4ab0" stroke-width="1.1"/></svg>
<div class="t th" style="left:60px;top:200px;height:20px;line-height:20px;letter-spacing:-0.155px;"><span id="t98">needed by</span></div>
<svg style="left:44px;top:226px;" width="9" height="9" viewBox="0 0 9 9"><rect x="0.5" y="0.5" width="8" height="8" rx="1.5" fill="#f4f4f4" stroke="#9a9a9a"/><rect x="1" y="5" width="7" height="3" fill="#e2e2e2"/><path d="M2.5 4.5H6.5" stroke="#3a4a9a" stroke-width="1.1"/><path d="M4.5 2.5V6.5" stroke="#3a4a9a" stroke-width="1.1"/></svg>
<svg style="left:60px;top:225px;" width="15" height="10" viewBox="0 0 15 10"><ellipse cx="7.5" cy="5" rx="6.8" ry="4.2" fill="#a8c0f0" stroke="#3a5ab0"/></svg>
<div class="t th" style="left:80px;top:220px;height:20px;line-height:20px;letter-spacing:-0.656px;"><span id="t99">Buy</span></div>
<svg style="left:25px;top:246px;" width="9" height="9" viewBox="0 0 9 9"><rect x="0.5" y="0.5" width="8" height="8" rx="1.5" fill="#f4f4f4" stroke="#9a9a9a"/><rect x="1" y="5" width="7" height="3" fill="#e2e2e2"/><path d="M2.5 4.5H6.5" stroke="#3a4a9a" stroke-width="1.1"/></svg>
<svg style="left:42px;top:243px;" width="14" height="12" viewBox="0 0 14 12"><path d="M0 8H10M0 10.5H10" stroke="#3a4ab0" stroke-width="1"/><path d="M9 5.5L13.5 9.2L9 12.5" fill="none" stroke="#3a4ab0" stroke-width="1.1"/><path d="M2 5a3 3 0 0 1 6 0Z" fill="#f4e890" stroke="#8a7a20" stroke-width=".8"/></svg>
<div class="t th" style="left:60px;top:240px;height:20px;line-height:20px;letter-spacing:-0.310px;"><span id="t100">classifier of</span></div>
<svg style="left:44px;top:266px;" width="9" height="9" viewBox="0 0 9 9"><rect x="0.5" y="0.5" width="8" height="8" rx="1.5" fill="#f4f4f4" stroke="#9a9a9a"/><rect x="1" y="5" width="7" height="3" fill="#e2e2e2"/><path d="M2.5 4.5H6.5" stroke="#3a4a9a" stroke-width="1.1"/><path d="M4.5 2.5V6.5" stroke="#3a4a9a" stroke-width="1.1"/></svg>
<svg style="left:61px;top:262px;" width="13" height="16" viewBox="0 0 13 16"><rect x="0.5" y="0.5" width="12" height="7" fill="#b8f0e8" stroke="#3a6a8a"/><path d="M2.5 3H10M2.5 5H10" stroke="#3a6a8a" stroke-width=".8"/><path d="M6.5 8V16" stroke="#222" stroke-dasharray="2 1.5"/></svg>
<div class="t th" style="left:80px;top:260px;height:20px;line-height:20px;letter-spacing:-0.177px;"><span id="t101">Broker_Trade.:Exchange</span></div>
</div>
<div style="left:1114px;top:743px;width:15px;height:283px;background:#f0f0f0"></div>
<div style="left:1115px;top:860px;width:13px;height:150px;background:#cdcdcd"></div>
<svg style="left:1114px;top:743px;" width="15" height="17" viewBox="0 0 15 17"><path d="M4.0 10.5L7.5 7L11.0 10.5" fill="none" stroke="#505050" stroke-width="1.6"/></svg>
<svg style="left:1114px;top:1009px;" width="15" height="17" viewBox="0 0 15 17"><path d="M4.0 6.5L7.5 10L11.0 6.5" fill="none" stroke="#505050" stroke-width="1.6"/></svg>
<div class="cap" style="left:1263px;top:75px;width:634px;height:22px;"></div>
<div class="t ui w" style="left:1267px;top:75px;height:22px;line-height:22px;letter-spacing:-0.313px;"><span id="t102">Exchange Class Collaboration</span></div>
<svg style="left:1848px;top:84px;" width="12" height="8" viewBox="0 0 12 8"><path d="M0.5 1H10.5L5.5 6.5Z" fill="#fff"/></svg>
<svg style="left:1866px;top:81px;" width="9" height="12" viewBox="0 0 9 12"><path d="M2.5 0.5H6.5V6.5M2.5 0.5V6.5M0.5 6.5H8.5M4.5 6.5V10.5M5.5 1V6" fill="none" stroke="#fff" stroke-width="1"/></svg>
<svg style="left:1883px;top:83px;" width="8" height="8" viewBox="0 0 8 8"><path d="M0.7 0.7L7.3 7.3M7.3 0.7L0.7 7.3" stroke="#fff" stroke-width="1.5"/></svg>
<div class="tb" style="left:1263px;top:97px;width:634px;height:24px;"></div>
<svg style="left:1282px;top:102px;" width="15" height="14" viewBox="0 0 15 14"><rect x="0.5" y="0.5" width="5" height="4" fill="#fff" stroke="#223"/><rect x="9.5" y="0.5" width="5" height="4" fill="#fff" stroke="#223"/><rect x="9.5" y="9.5" width="4" height="4" fill="#fff" stroke="#3a4ad0"/><path d="M3 5V11.5H9.5M5.5 2.5H9.5" fill="none" stroke="#223" stroke-width="1.2"/></svg>
<div class="t ar" style="left:1297px;top:98.5px;height:22px;line-height:22px;letter-spacing:-0.165px;font-size:11px;color:#757575;"><span id="t103">Class Diagram: "Exchange Class Collaboration"</span></div>
<div style="left:1263px;top:121px;width:618px;height:553px;background:#fff"></div>
<div style="left:1263px;top:120px;width:618px;height:554px;overflow:hidden">
<svg style="left:0px;top:0px;" width="618" height="554" viewBox="0 0 618 554"><defs><pattern id="hat" width="4" height="4" patternUnits="userSpaceOnUse"><path d="M-1 1L1 -1M0 4L4 0M3 5L5 3" stroke="#000" stroke-width="1.25"/></pattern></defs><path d="M46 29H301.5V361H46ZM54 37H294.5V353.5H54Z" fill="url(#hat)" fill-rule="evenodd"/><rect x="54" y="37" width="240.5" height="316.5" fill="#fff" stroke="#000" stroke-width="1.2"/><path d="M54 68.5H294.5" stroke="#000" stroke-width="1.2"/><rect x="55" y="256" width="238" height="17" rx="3" fill="#dcdcdc"/><rect x="46.5" y="29.5" width="7" height="7" fill="#fff" stroke="#000"/><rect x="170.5" y="29.5" width="7" height="7" fill="#fff" stroke="#000"/><rect x="294.5" y="29.5" width="7" height="7" fill="#fff" stroke="#000"/><rect x="46.5" y="191.5" width="7" height="7" fill="#fff" stroke="#000"/><rect x="294.5" y="191.5" width="7" height="7" fill="#fff" stroke="#000"/><rect x="46.5" y="353.5" width="7" height="7" fill="#fff" stroke="#000"/><rect x="170.5" y="353.5" width="7" height="7" fill="#fff" stroke="#000"/><rect x="294.5" y="353.5" width="7" height="7" fill="#fff" stroke="#000"/><path d="M294.5 102.5H453" stroke="#000" stroke-width="1.1"/><path d="M436 94.5L453 102.5L436 110.5" fill="none" stroke="#000" stroke-width="1.1"/><rect x="453.5" y="60.5" width="140" height="101.5" rx="3" fill="#fff" stroke="#000" stroke-width="1.2"/><path d="M453.5 92H593.5" stroke="#000" stroke-width="1.2"/><rect x="137" y="389.5" width="260.5" height="149" rx="3" fill="#e6e6e6" stroke="#b4b4b4" stroke-width="1.2"/><path d="M137 421.5H397.5" stroke="#b4b4b4" stroke-width="1.2"/><rect x="441.5" y="407.5" width="260" height="103" rx="3" fill="#e6e6e6" stroke="#b4b4b4" stroke-width="1.2"/><path d="M441.5 439.5H701.5" stroke="#b4b4b4" stroke-width="1.2"/></svg>
<div class="t ar b" style="left:115px;top:47px;height:16px;line-height:16px;letter-spacing:-0.188px;"><span id="t104">Exchange::Exchange</span></div>
<div style="left:55px;top:69px;width:239px;height:284px;overflow:hidden">
<div class="t ar" style="left:4px;top:3.8000000000000114px;height:16px;line-height:16px;color:#333;"><span id="t105">+</span></div>
<div class="t ar i" style="left:24px;top:3.8000000000000114px;height:16px;line-height:16px;letter-spacing:-0.014px;color:#333;"><span id="t106">Buy(TAccountID, TStockID, UINT): bool</span></div>
<div class="t ar" style="left:4px;top:18.599999999999994px;height:16px;line-height:16px;color:#333;"><span id="t107">+</span></div>
<div class="t ar i" style="left:24px;top:18.599999999999994px;height:16px;line-height:16px;letter-spacing:0.049px;color:#333;"><span id="t108">Close(): void</span></div>
<div class="t ar" style="left:4px;top:33.69999999999999px;height:16px;line-height:16px;color:#333;"><span id="t109">+</span></div>
<div class="t ar" style="left:24px;top:33.69999999999999px;height:16px;line-height:16px;letter-spacing:0.056px;color:#333;"><span id="t110">Exchange(LPCTSTR)</span></div>
<div class="t ar" style="left:4px;top:49.5px;height:16px;line-height:16px;color:#333;"><span id="t111">+</span></div>
<div class="t ar i" style="left:24px;top:49.5px;height:16px;line-height:16px;letter-spacing:0.148px;color:#333;"><span id="t112">~Exchange()</span></div>
<div class="t ar" style="left:4px;top:64.69999999999999px;height:16px;line-height:16px;color:#333;"><span id="t113">-</span></div>
<div class="t ar" style="left:24px;top:64.69999999999999px;height:16px;line-height:16px;letter-spacing:0.042px;color:#333;"><span id="t114">FindAccount(CString): Account*</span></div>
<div class="t ar" style="left:4px;top:79.5px;height:16px;line-height:16px;color:#333;"><span id="t115">-</span></div>
<div class="t ar" style="left:24px;top:79.5px;height:16px;line-height:16px;letter-spacing:0.049px;color:#333;"><span id="t116">FindStock(CString): Stock*</span></div>
<div class="t ar" style="left:4px;top:94.60000000000002px;height:16px;line-height:16px;color:#333;"><span id="t117">-</span></div>
<div class="t ar" style="left:24px;top:94.60000000000002px;height:16px;line-height:16px;color:#333;"><span id="t118">FreeAccounts(): void</span></div>
<div class="t ar" style="left:4px;top:109.80000000000001px;height:16px;line-height:16px;color:#333;"><span id="t119">-</span></div>
<div class="t ar" style="left:24px;top:109.80000000000001px;height:16px;line-height:16px;color:#333;"><span id="t120">FreeSectors(): void</span></div>
<div class="t ar" style="left:4px;top:124.89999999999998px;height:16px;line-height:16px;color:#333;"><span id="t121">-</span></div>
<div class="t ar" style="left:24px;top:124.89999999999998px;height:16px;line-height:16px;color:#333;"><span id="t122">FreeStocks(): void</span></div>
<div class="t ar" style="left:4px;top:141.8px;height:16px;line-height:16px;color:#333;"><span id="t123">+</span></div>
<div class="t ar i" style="left:24px;top:141.8px;height:16px;line-height:16px;letter-spacing:0.123px;color:#333;"><span id="t124">GetAccount(TAccountID): Account*</span></div>
<div class="t ar" style="left:4px;top:155.2px;height:16px;line-height:16px;color:#333;"><span id="t125">-</span></div>
<div class="t ar" style="left:24px;top:155.2px;height:16px;line-height:16px;color:#333;"><span id="t126">GetSector(ESector): Sector*</span></div>
<div class="t ar" style="left:4px;top:170.3px;height:16px;line-height:16px;color:#333;"><span id="t127">+</span></div>
<div class="t ar i" style="left:24px;top:170.3px;height:16px;line-height:16px;color:#333;"><span id="t128">GetStock(TStockID): Stock*</span></div>
<div class="t ar" style="left:4px;top:187.3px;height:16px;line-height:16px;color:#333;"><span id="t129">+</span></div>
<div class="t ar i" style="left:24px;top:187.3px;height:16px;line-height:16px;color:#333;"><span id="t130">GetStockVolume(): UINT</span></div>
<div class="t ar" style="left:4px;top:202.7px;height:16px;line-height:16px;color:#333;"><span id="t131">+</span></div>
<div class="t ar i" style="left:24px;top:202.7px;height:16px;line-height:16px;letter-spacing:0.256px;color:#333;"><span id="t132">RegisterAccount(Account*): TAccountID</span></div>
<div class="t ar" style="left:4px;top:217.7px;height:16px;line-height:16px;color:#333;"><span id="t133">+</span></div>
<div class="t ar i" style="left:24px;top:217.7px;height:16px;line-height:16px;letter-spacing:0.149px;color:#333;"><span id="t134">RegisterStock(Stock*): TStockID</span></div>
<div class="t ar" style="left:4px;top:232.8px;height:16px;line-height:16px;color:#333;"><span id="t135">+</span></div>
<div class="t ar i" style="left:24px;top:232.8px;height:16px;line-height:16px;letter-spacing:0.046px;color:#333;"><span id="t136">Sell(TAccountID, TStockID, UINT): bool</span></div>
<div class="t ar" style="left:4px;top:248.5px;height:16px;line-height:16px;color:#333;"><span id="t137">+</span></div>
<div class="t ar" style="left:24px;top:248.5px;height:16px;line-height:16px;letter-spacing:0.042px;color:#333;"><span id="t138">TransmitStock(IStock*): TStockID</span></div>
<div class="t ar" style="left:4px;top:263.5px;height:16px;line-height:16px;color:#333;"><span id="t139">-</span></div>
<div class="t ar" style="left:24px;top:263.5px;height:16px;line-height:16px;letter-spacing:0.029px;color:#333;"><span id="t140">UpdateSector(ESector, INT): void</span></div>
</div>
<div class="t ar" style="left:363px;top:82px;height:16px;line-height:16px;letter-spacing:0.093px;"><span id="t141">-m_exchSectors</span></div>
<div class="t ar b" style="left:473px;top:70px;height:16px;line-height:16px;letter-spacing:-0.127px;"><span id="t142">Exchange::Sector</span></div>
<div class="t ar" style="left:459px;top:95.5px;height:16px;line-height:16px;color:#333;"><span id="t143">+</span></div>
<div class="t ar i" style="left:479.5px;top:95.5px;height:16px;line-height:16px;letter-spacing:0.137px;color:#333;"><span id="t144">BeginDay(int): void</span></div>
<div class="t ar" style="left:459px;top:111.6px;height:16px;line-height:16px;color:#333;"><span id="t145">+</span></div>
<div class="t ar i" style="left:479.5px;top:111.6px;height:16px;line-height:16px;letter-spacing:0.151px;color:#333;"><span id="t146">EndDay(): int</span></div>
<div class="t ar" style="left:459px;top:126.80000000000001px;height:16px;line-height:16px;color:#333;"><span id="t147">+</span></div>
<div class="t ar i" style="left:479.5px;top:126.80000000000001px;height:16px;line-height:16px;letter-spacing:0.020px;color:#333;"><span id="t148">Move(int): void</span></div>
<div class="t ar" style="left:459px;top:141.89999999999998px;height:16px;line-height:16px;color:#333;"><span id="t149">+</span></div>
<div class="t ar" style="left:479.5px;top:141.89999999999998px;height:16px;line-height:16px;letter-spacing:0.043px;color:#333;"><span id="t150">Sector(ESector)</span></div>
<div class="t ar b" style="right:363.3px;top:400px;height:16px;line-height:16px;color:#b2b2b2;">Exchange::Stock</div>
<div class="t ar" style="right:236.3px;top:425.6px;height:16px;line-height:16px;color:#b2b2b2;text-decoration:underline;">CreateStock(CString, FLOAT, UINT, ESector): IStock*</div>
<div class="t ar" style="right:354.7px;top:517.8px;height:16px;line-height:16px;color:#b2b2b2;">Stock(CString, FLOAT, UINT, ESector)</div>
<div class="t ar b" style="left:574.5px;top:418px;height:16px;line-height:16px;color:#b2b2b2;"><span id="t151">Broker::Broker</span></div>
<div class="t ar" style="left:448px;top:443.70000000000005px;height:16px;line-height:16px;color:#b2b2b2;"><span id="t152">+</span></div>
<div class="t ar" style="left:467px;top:443.70000000000005px;height:16px;line-height:16px;color:#b2b2b2;"><span id="t153">Broker()</span></div>
<div class="t ar" style="left:448px;top:458.79999999999995px;height:16px;line-height:16px;color:#b2b2b2;"><span id="t154">+</span></div>
<div class="t ar" style="left:467px;top:458.79999999999995px;height:16px;line-height:16px;color:#b2b2b2;"><span id="t155">~Broker()</span></div>
<div class="t ar" style="left:448px;top:473.6px;height:16px;line-height:16px;color:#b2b2b2;"><span id="t156">-</span></div>
<div class="t ar" style="left:467px;top:473.6px;height:16px;line-height:16px;color:#b2b2b2;"><span id="t157">GetNext(Exchange::TAccountList): Account*</span></div>
<div class="t ar" style="left:448px;top:489.6px;height:16px;line-height:16px;color:#b2b2b2;"><span id="t158">+</span></div>
<div class="t ar" style="left:467px;top:489.6px;height:16px;line-height:16px;color:#b2b2b2;"><span id="t159">Trade(Exchange::Exchange*): void</span></div>
</div>
<div style="left:1881px;top:121px;width:16px;height:553px;background:#f0f0f0"></div>
<div style="left:1882px;top:137px;width:14px;height:205px;background:#cdcdcd"></div>
<svg style="left:1881px;top:121px;" width="16" height="17" viewBox="0 0 16 17"><path d="M4.5 10.5L8.0 7L11.5 10.5" fill="none" stroke="#505050" stroke-width="1.6"/></svg>
<svg style="left:1881px;top:657px;" width="16" height="17" viewBox="0 0 16 17"><path d="M4.5 6.5L8.0 10L11.5 6.5" fill="none" stroke="#505050" stroke-width="1.6"/></svg>
<div style="left:1263px;top:674px;width:618px;height:16px;background:#f0f0f0"></div>
<div style="left:1300px;top:675px;width:180px;height:14px;background:#cdcdcd"></div>
<svg style="left:1263px;top:674px;" width="17" height="16" viewBox="0 0 17 16"><path d="M10.5 4.5L7 8.0L10.5 11.5" fill="none" stroke="#505050" stroke-width="1.6"/></svg>
<svg style="left:1864px;top:674px;" width="17" height="16" viewBox="0 0 17 16"><path d="M6.5 4.5L10 8.0L6.5 11.5" fill="none" stroke="#505050" stroke-width="1.6"/></svg>
<div style="left:1881px;top:674px;width:16px;height:16px;background:#f0f0f0"></div>
<div style="left:1899px;top:79px;width:22px;height:31px;background:#4d6082;border-radius:4px 0 0 4px"></div>
<div class="t ar w" style="left:1898.5px;top:80px;width:21px;height:33px;line-height:21px;writing-mode:vertical-rl;font-size:12px;letter-spacing:-0.3px;text-align:center;">Start</div>
<div class="cap" style="left:1134px;top:694px;width:763px;height:22px;"></div>
<svg style="left:1848px;top:702px;" width="12" height="8" viewBox="0 0 12 8"><path d="M0.5 1H10.5L5.5 6.5Z" fill="#fff"/></svg>
<svg style="left:1866px;top:699px;" width="9" height="12" viewBox="0 0 9 12"><path d="M2.5 0.5H6.5V6.5M2.5 0.5V6.5M0.5 6.5H8.5M4.5 6.5V10.5M5.5 1V6" fill="none" stroke="#fff" stroke-width="1"/></svg>
<svg style="left:1883px;top:701px;" width="8" height="8" viewBox="0 0 8 8"><path d="M0.7 0.7L7.3 7.3M7.3 0.7L0.7 7.3" stroke="#fff" stroke-width="1.5"/></svg>
<div class="tb" style="left:1134px;top:716px;width:763px;height:27px;"></div>
<svg style="left:1880px;top:725px;" width="12" height="11" viewBox="0 0 12 11"><path d="M5 0.5L0.5 5L5 9.5V7H11.5V3H5Z" fill="#b0b0b0" stroke="#707070" stroke-width=".9"/></svg>
<div style="left:1134px;top:743px;width:763px;height:24px;background:#fff;border-bottom:1px solid #e3e9f4"></div>
<div class="t ui" style="left:1563px;top:744px;height:23px;line-height:23px;letter-spacing:-0.508px;"><span id="t160">Id</span></div>
<div style="left:1557px;top:743px;width:1px;height:23px;background:#e3e9f4"></div>
<div class="t ui" style="left:1593px;top:744px;height:23px;line-height:23px;letter-spacing:-0.064px;"><span id="t161">Constraints</span></div>
<div style="left:1587px;top:743px;width:1px;height:23px;background:#e3e9f4"></div>
<div class="t ui" style="left:1663px;top:744px;height:23px;line-height:23px;letter-spacing:0.161px;"><span id="t162">Status</span></div>
<div style="left:1657px;top:743px;width:1px;height:23px;background:#e3e9f4"></div>
<div class="t ui" style="left:1721px;top:744px;height:23px;line-height:23px;letter-spacing:-0.469px;"><span id="t163">Evals</span></div>
<div style="left:1715px;top:743px;width:1px;height:23px;background:#e3e9f4"></div>
<div class="t ui" style="left:1781px;top:744px;height:23px;line-height:23px;letter-spacing:-0.727px;"><span id="t164">Passes</span></div>
<div style="left:1775px;top:743px;width:1px;height:23px;background:#e3e9f4"></div>
<div class="t ui" style="left:1841px;top:744px;height:23px;line-height:23px;letter-spacing:-0.669px;"><span id="t165">Fails</span></div>
<div style="left:1835px;top:743px;width:1px;height:23px;background:#e3e9f4"></div>
<div style="left:1134px;top:767px;width:747px;height:220px;background:#fff"></div>
<div style="left:1133px;top:767px;width:748px;height:220px;overflow:hidden">
<div class="t ui" style="left:593px;top:0px;height:18px;line-height:18px;letter-spacing:-0.477px;"><span id="t166">850</span></div>
<div class="t ui" style="left:653px;top:0px;height:18px;line-height:18px;letter-spacing:-0.477px;"><span id="t167">850</span></div>
<div class="t ui" style="left:593px;top:18px;height:18px;line-height:18px;letter-spacing:-0.477px;"><span id="t168">322</span></div>
<div class="t ui" style="left:653px;top:18px;height:18px;line-height:18px;letter-spacing:-0.477px;"><span id="t169">322</span></div>
<svg style="left:466px;top:19px;" width="11" height="16" viewBox="0 0 11 16"><path d="M8 0.5L10.5 2L4 13L1.5 11.5Z" fill="#f0c020" stroke="#7a5a10" stroke-width=".8"/><path d="M1.5 11.5L1 15L4 13Z" fill="#222"/></svg>
<div class="t ui" style="left:593px;top:36px;height:18px;line-height:18px;letter-spacing:-0.477px;"><span id="t170">182</span></div>
<div class="t ui" style="left:653px;top:36px;height:18px;line-height:18px;letter-spacing:-0.477px;"><span id="t171">182</span></div>
<div class="t ui" style="left:593px;top:54px;height:18px;line-height:18px;letter-spacing:-0.480px;"><span id="t172">34</span></div>
<div class="t ui" style="left:653px;top:54px;height:18px;line-height:18px;letter-spacing:-0.480px;"><span id="t173">34</span></div>
<svg style="left:439px;top:57px;" width="11" height="11" viewBox="0 0 11 11"><circle cx="5.5" cy="5.5" r="5.2" fill="#1a8ae0"/><path d="M2.6 5.6L4.8 7.8L8.4 3.4" fill="none" stroke="#fff" stroke-width="1.5"/></svg>
<svg style="left:466px;top:55px;" width="11" height="16" viewBox="0 0 11 16"><path d="M8 0.5L10.5 2L4 13L1.5 11.5Z" fill="#f0c020" stroke="#7a5a10" stroke-width=".8"/><path d="M1.5 11.5L1 15L4 13Z" fill="#222"/></svg>
<div class="t ui" style="left:593px;top:72px;height:18px;line-height:18px;letter-spacing:-0.480px;"><span id="t174">34</span></div>
<div class="t ui" style="left:653px;top:72px;height:18px;line-height:18px;letter-spacing:-0.480px;"><span id="t175">34</span></div>
<svg style="left:439px;top:75px;" width="11" height="11" viewBox="0 0 11 11"><circle cx="5.5" cy="5.5" r="5.2" fill="#1a8ae0"/><path d="M2.6 5.6L4.8 7.8L8.4 3.4" fill="none" stroke="#fff" stroke-width="1.5"/></svg>
<svg style="left:466px;top:73px;" width="11" height="16" viewBox="0 0 11 16"><path d="M8 0.5L10.5 2L4 13L1.5 11.5Z" fill="#f0c020" stroke="#7a5a10" stroke-width=".8"/><path d="M1.5 11.5L1 15L4 13Z" fill="#222"/></svg>
<div class="t ui" style="left:593px;top:90px;height:18px;line-height:18px;letter-spacing:-0.480px;"><span id="t176">36</span></div>
<div class="t ui" style="left:653px;top:90px;height:18px;line-height:18px;letter-spacing:-0.480px;"><span id="t177">36</span></div>
<svg style="left:439px;top:93px;" width="11" height="11" viewBox="0 0 11 11"><circle cx="5.5" cy="5.5" r="5.2" fill="#1a8ae0"/><path d="M2.6 5.6L4.8 7.8L8.4 3.4" fill="none" stroke="#fff" stroke-width="1.5"/></svg>
<svg style="left:466px;top:91px;" width="11" height="16" viewBox="0 0 11 16"><path d="M8 0.5L10.5 2L4 13L1.5 11.5Z" fill="#f0c020" stroke="#7a5a10" stroke-width=".8"/><path d="M1.5 11.5L1 15L4 13Z" fill="#222"/></svg>
<div class="t ui" style="left:593px;top:108px;height:18px;line-height:18px;letter-spacing:-0.480px;"><span id="t178">36</span></div>
<div class="t ui" style="left:653px;top:108px;height:18px;line-height:18px;letter-spacing:-0.480px;"><span id="t179">36</span></div>
<svg style="left:439px;top:111px;" width="11" height="11" viewBox="0 0 11 11"><circle cx="5.5" cy="5.5" r="5.2" fill="#1a8ae0"/><path d="M2.6 5.6L4.8 7.8L8.4 3.4" fill="none" stroke="#fff" stroke-width="1.5"/></svg>
<svg style="left:466px;top:109px;" width="11" height="16" viewBox="0 0 11 16"><path d="M8 0.5L10.5 2L4 13L1.5 11.5Z" fill="#f0c020" stroke="#7a5a10" stroke-width=".8"/><path d="M1.5 11.5L1 15L4 13Z" fill="#222"/></svg>
<div class="t ui" style="left:593px;top:126px;height:18px;line-height:18px;letter-spacing:-0.477px;"><span id="t180">526</span></div>
<div class="t ui" style="left:653px;top:126px;height:18px;line-height:18px;letter-spacing:-0.477px;"><span id="t181">526</span></div>
<svg style="left:466px;top:127px;" width="11" height="16" viewBox="0 0 11 16"><path d="M8 0.5L10.5 2L4 13L1.5 11.5Z" fill="#f0c020" stroke="#7a5a10" stroke-width=".8"/><path d="M1.5 11.5L1 15L4 13Z" fill="#222"/></svg>
<div class="t ui" style="left:593px;top:144px;height:18px;line-height:18px;letter-spacing:-0.477px;"><span id="t182">316</span></div>
<div class="t ui" style="left:653px;top:144px;height:18px;line-height:18px;letter-spacing:-0.477px;"><span id="t183">316</span></div>
<div class="t ui" style="left:593px;top:162px;height:18px;line-height:18px;letter-spacing:-0.480px;"><span id="t184">70</span></div>
<div class="t ui" style="left:653px;top:162px;height:18px;line-height:18px;letter-spacing:-0.480px;"><span id="t185">70</span></div>
<svg style="left:439px;top:165px;" width="11" height="11" viewBox="0 0 11 11"><circle cx="5.5" cy="5.5" r="5.2" fill="#1a8ae0"/><path d="M2.6 5.6L4.8 7.8L8.4 3.4" fill="none" stroke="#fff" stroke-width="1.5"/></svg>
<svg style="left:466px;top:163px;" width="11" height="16" viewBox="0 0 11 16"><path d="M8 0.5L10.5 2L4 13L1.5 11.5Z" fill="#f0c020" stroke="#7a5a10" stroke-width=".8"/><path d="M1.5 11.5L1 15L4 13Z" fill="#222"/></svg>
<div class="t ui" style="left:593px;top:180px;height:18px;line-height:18px;letter-spacing:-0.480px;"><span id="t186">70</span></div>
<div class="t ui" style="left:653px;top:180px;height:18px;line-height:18px;letter-spacing:-0.480px;"><span id="t187">70</span></div>
<svg style="left:439px;top:183px;" width="11" height="11" viewBox="0 0 11 11"><circle cx="5.5" cy="5.5" r="5.2" fill="#1a8ae0"/><path d="M2.6 5.6L4.8 7.8L8.4 3.4" fill="none" stroke="#fff" stroke-width="1.5"/></svg>
<svg style="left:466px;top:181px;" width="11" height="16" viewBox="0 0 11 16"><path d="M8 0.5L10.5 2L4 13L1.5 11.5Z" fill="#f0c020" stroke="#7a5a10" stroke-width=".8"/><path d="M1.5 11.5L1 15L4 13Z" fill="#222"/></svg>
<div class="t ui" style="left:593px;top:198px;height:18px;line-height:18px;letter-spacing:-0.480px;"><span id="t188">70</span></div>
<div class="t ui" style="left:653px;top:198px;height:18px;line-height:18px;letter-spacing:-0.480px;"><span id="t189">70</span></div>
<svg style="left:439px;top:201px;" width="11" height="11" viewBox="0 0 11 11"><circle cx="5.5" cy="5.5" r="5.2" fill="#1a8ae0"/><path d="M2.6 5.6L4.8 7.8L8.4 3.4" fill="none" stroke="#fff" stroke-width="1.5"/></svg>
<svg style="left:466px;top:199px;" width="11" height="16" viewBox="0 0 11 16"><path d="M8 0.5L10.5 2L4 13L1.5 11.5Z" fill="#f0c020" stroke="#7a5a10" stroke-width=".8"/><path d="M1.5 11.5L1 15L4 13Z" fill="#222"/></svg>
<svg style="left:48px;top:77px;" width="9" height="9" viewBox="0 0 9 9"><rect x="0.5" y="0.5" width="8" height="8" fill="#fff" stroke="#8a8a8a"/><path d="M2.5 4.5H6.5" stroke="#222" stroke-width="1.1"/><path d="M4.5 2.5V6.5" stroke="#222" stroke-width="1.1"/></svg>
<svg style="left:62px;top:76px;" width="16" height="12" viewBox="0 0 16 12"><path d="M0.5 3.5H6M1.5 5.5H6M0.5 7.5H6" stroke="#b4b49a" stroke-width="1"/><path d="M11 0.5L15.2 4L11 6.2L6.8 4Z" fill="#ecaaf0"/><path d="M6.8 4L11 6.2V11.3L6.8 7.6Z" fill="#c866d4"/><path d="M15.2 4L11 6.2V11.3L15.2 7.6Z" fill="#8a3a9c"/></svg>
<div class="t ui" style="left:82px;top:72px;height:18px;line-height:18px;letter-spacing:-0.113px;"><span id="t190">void Credit(Stock*, UINT, INT)</span></div>
<svg style="left:48px;top:95px;" width="9" height="9" viewBox="0 0 9 9"><rect x="0.5" y="0.5" width="8" height="8" fill="#fff" stroke="#8a8a8a"/><path d="M2.5 4.5H6.5" stroke="#222" stroke-width="1.1"/><path d="M4.5 2.5V6.5" stroke="#222" stroke-width="1.1"/></svg>
<svg style="left:62px;top:94px;" width="16" height="12" viewBox="0 0 16 12"><path d="M0.5 3.5H6M1.5 5.5H6M0.5 7.5H6" stroke="#b4b49a" stroke-width="1"/><path d="M11 0.5L15.2 4L11 6.2L6.8 4Z" fill="#ecaaf0"/><path d="M6.8 4L11 6.2V11.3L6.8 7.6Z" fill="#c866d4"/><path d="M15.2 4L11 6.2V11.3L15.2 7.6Z" fill="#8a3a9c"/></svg>
<div class="t ui" style="left:82px;top:90px;height:18px;line-height:18px;letter-spacing:-0.130px;"><span id="t191">void Debit(TStockID, UINT, INT)</span></div>
<svg style="left:48px;top:113px;" width="9" height="9" viewBox="0 0 9 9"><rect x="0.5" y="0.5" width="8" height="8" fill="#fff" stroke="#8a8a8a"/><path d="M2.5 4.5H6.5" stroke="#222" stroke-width="1.1"/><path d="M4.5 2.5V6.5" stroke="#222" stroke-width="1.1"/></svg>
<svg style="left:62px;top:112px;" width="16" height="12" viewBox="0 0 16 12"><path d="M0.5 3.5H6M1.5 5.5H6M0.5 7.5H6" stroke="#b4b49a" stroke-width="1"/><path d="M11 0.5L15.2 4L11 6.2L6.8 4Z" fill="#ecaaf0"/><path d="M6.8 4L11 6.2V11.3L6.8 7.6Z" fill="#c866d4"/><path d="M15.2 4L11 6.2V11.3L15.2 7.6Z" fill="#8a3a9c"/></svg>
<div class="t ui" style="left:82px;top:108px;height:18px;line-height:18px;letter-spacing:-0.082px;"><span id="t192">void Debit(Stock*, UINT, INT)</span></div>
<svg style="left:29px;top:131px;" width="9" height="9" viewBox="0 0 9 9"><rect x="0.5" y="0.5" width="8" height="8" fill="#fff" stroke="#8a8a8a"/><path d="M2.5 4.5H6.5" stroke="#222" stroke-width="1.1"/></svg>
<svg style="left:46px;top:128px;" width="13" height="14" viewBox="0 0 13 14"><rect x="0.5" y="0.5" width="12" height="13" fill="#d8ecff" stroke="#2a3ab0"/><rect x="1" y="1" width="11" height="2.5" fill="#4a6ad8"/><path d="M2.5 5.5H10.5M2.5 7.5H10.5" stroke="#3a6ae0"/><path d="M1 9.5H12" stroke="#2a3ab0"/><path d="M2.5 11.5H10.5" stroke="#3a6ae0"/></svg>
<div class="t ui" style="left:63px;top:126px;height:18px;line-height:18px;letter-spacing:-0.203px;"><span id="t193">Stock</span></div>
<svg style="left:48px;top:149px;" width="9" height="9" viewBox="0 0 9 9"><rect x="0.5" y="0.5" width="8" height="8" fill="#fff" stroke="#8a8a8a"/><path d="M2.5 4.5H6.5" stroke="#222" stroke-width="1.1"/><path d="M4.5 2.5V6.5" stroke="#222" stroke-width="1.1"/></svg>
<svg style="left:64px;top:146px;" width="12" height="14" viewBox="0 0 12 14"><path d="M0.5 0.5H8L11.5 4V13.5H0.5Z" fill="#fff" stroke="#445"/><path d="M3 7L5 9L3 11M7 7L9 9" fill="none" stroke="#2a4ac0" stroke-width=".9"/></svg>
<div class="t ui" style="left:82px;top:144px;height:18px;line-height:18px;letter-spacing:-0.003px;"><span id="t194">Invariant</span></div>
<svg style="left:48px;top:167px;" width="9" height="9" viewBox="0 0 9 9"><rect x="0.5" y="0.5" width="8" height="8" fill="#fff" stroke="#8a8a8a"/><path d="M2.5 4.5H6.5" stroke="#222" stroke-width="1.1"/><path d="M4.5 2.5V6.5" stroke="#222" stroke-width="1.1"/></svg>
<svg style="left:62px;top:166px;" width="16" height="12" viewBox="0 0 16 12"><path d="M0.5 3.5H6M1.5 5.5H6M0.5 7.5H6" stroke="#b4b49a" stroke-width="1"/><path d="M11 0.5L15.2 4L11 6.2L6.8 4Z" fill="#ecaaf0"/><path d="M6.8 4L11 6.2V11.3L6.8 7.6Z" fill="#c866d4"/><path d="M15.2 4L11 6.2V11.3L15.2 7.6Z" fill="#8a3a9c"/></svg>
<div class="t ui" style="left:82px;top:162px;height:18px;line-height:18px;letter-spacing:-0.424px;"><span id="t195">ESector GetSector()</span></div>
<svg style="left:48px;top:185px;" width="9" height="9" viewBox="0 0 9 9"><rect x="0.5" y="0.5" width="8" height="8" fill="#fff" stroke="#8a8a8a"/><path d="M2.5 4.5H6.5" stroke="#222" stroke-width="1.1"/><path d="M4.5 2.5V6.5" stroke="#222" stroke-width="1.1"/></svg>
<svg style="left:62px;top:184px;" width="16" height="12" viewBox="0 0 16 12"><path d="M0.5 3.5H6M1.5 5.5H6M0.5 7.5H6" stroke="#b4b49a" stroke-width="1"/><path d="M11 0.5L15.2 4L11 6.2L6.8 4Z" fill="#ecaaf0"/><path d="M6.8 4L11 6.2V11.3L6.8 7.6Z" fill="#c866d4"/><path d="M15.2 4L11 6.2V11.3L15.2 7.6Z" fill="#8a3a9c"/></svg>
<div class="t ui" style="left:82px;top:180px;height:18px;line-height:18px;letter-spacing:-0.266px;"><span id="t196">FLOAT GetStockCost()</span></div>
<svg style="left:48px;top:203px;" width="9" height="9" viewBox="0 0 9 9"><rect x="0.5" y="0.5" width="8" height="8" fill="#fff" stroke="#8a8a8a"/><path d="M2.5 4.5H6.5" stroke="#222" stroke-width="1.1"/><path d="M4.5 2.5V6.5" stroke="#222" stroke-width="1.1"/></svg>
<svg style="left:62px;top:202px;" width="16" height="12" viewBox="0 0 16 12"><path d="M0.5 3.5H6M1.5 5.5H6M0.5 7.5H6" stroke="#b4b49a" stroke-width="1"/><path d="M11 0.5L15.2 4L11 6.2L6.8 4Z" fill="#ecaaf0"/><path d="M6.8 4L11 6.2V11.3L6.8 7.6Z" fill="#c866d4"/><path d="M15.2 4L11 6.2V11.3L15.2 7.6Z" fill="#8a3a9c"/></svg>
<div class="t ui" style="left:82px;top:198px;height:18px;line-height:18px;letter-spacing:-0.142px;"><span id="t197">UINT GetStockVolume()</span></div>
</div>
<div style="left:1881px;top:767px;width:16px;height:220px;background:#f0f0f0"></div>
<div style="left:1882px;top:784px;width:14px;height:158px;background:#cdcdcd"></div>
<svg style="left:1881px;top:767px;" width="16" height="17" viewBox="0 0 16 17"><path d="M4.5 10.5L8.0 7L11.5 10.5" fill="none" stroke="#505050" stroke-width="1.6"/></svg>
<svg style="left:1881px;top:970px;" width="16" height="17" viewBox="0 0 16 17"><path d="M4.5 6.5L8.0 10L11.5 6.5" fill="none" stroke="#505050" stroke-width="1.6"/></svg>
<div style="left:1134px;top:987px;width:747px;height:16px;background:#f0f0f0"></div>
<div style="left:1151px;top:988px;width:525px;height:14px;background:#cdcdcd"></div>
<svg style="left:1134px;top:987px;" width="17" height="16" viewBox="0 0 17 16"><path d="M10.5 4.5L7 8.0L10.5 11.5" fill="none" stroke="#505050" stroke-width="1.6"/></svg>
<svg style="left:1864px;top:987px;" width="17" height="16" viewBox="0 0 17 16"><path d="M6.5 4.5L10 8.0L6.5 11.5" fill="none" stroke="#505050" stroke-width="1.6"/></svg>
<div style="left:1881px;top:987px;width:16px;height:16px;background:#bcc7d8"></div>
<div class="dots" style="left:1133px;top:1003px;width:765px;height:24px;"></div>
<svg style="left:1139px;top:1005px;" width="13" height="13" viewBox="0 0 13 13"><circle cx="6.5" cy="6.5" r="5.8" fill="#e03818"/><circle cx="5" cy="4.6" r="2" fill="#f08060" fill-opacity=".7"/></svg>
<div class="t ui w" style="left:1156px;top:1004px;height:20px;line-height:20px;letter-spacing:-0.136px;"><span id="t198">Breakpoints &amp; Markers</span></div>
<div style="left:1290px;top:1003px;width:81px;height:21px;background:#fff;border-radius:0 0 3px 3px"></div>
<svg style="left:1296px;top:1007px;" width="11" height="11" viewBox="0 0 11 11"><circle cx="5.5" cy="5.5" r="5.2" fill="#1a8ae0"/><path d="M2.6 5.6L4.8 7.8L8.4 3.4" fill="none" stroke="#fff" stroke-width="1.5"/></svg>
<div class="t ui" style="left:1312px;top:1004px;height:20px;line-height:20px;letter-spacing:-0.103px;"><span id="t199">Testpoints</span></div>
<svg style="left:1599px;top:1031px;" width="15" height="15" viewBox="0 0 15 15"><circle cx="7.5" cy="7.5" r="6.6" fill="none" stroke="#c8d0e0" stroke-width="1"/><path d="M4 7.5H11" stroke="#c8d0e0" stroke-width="1.2"/></svg>
<div style="left:1620px;top:1037px;width:87px;height:3px;background:#e0e2e6"></div>
<svg style="left:1647px;top:1029px;" width="10" height="17" viewBox="0 0 10 17"><path d="M0.5 0.5H9.5V11L5 15.5L0.5 11Z" fill="#dcdcdc"/></svg>
<svg style="left:1715px;top:1031px;" width="15" height="15" viewBox="0 0 15 15"><circle cx="7.5" cy="7.5" r="6.6" fill="none" stroke="#c8d0e0" stroke-width="1"/><path d="M4 7.5H11M7.5 4V11" stroke="#c8d0e0" stroke-width="1.2"/></svg>
<div style="left:1733px;top:1031px;width:186px;height:15px;border:1px solid #b4bccc"></div>
<div class="t ui" style="left:1741px;top:1030px;height:17px;line-height:17px;letter-spacing:-1.200px;color:#9a9a96;"><span id="t200">CAP</span></div>
<div class="t ui w" style="left:1780px;top:1030px;height:17px;line-height:17px;letter-spacing:-0.443px;"><span id="t201">NUM</span></div>
<div class="t ui" style="left:1826px;top:1030px;height:17px;line-height:17px;letter-spacing:-1.200px;color:#9a9a96;"><span id="t202">SCRL</span></div>
<div class="t ui" style="left:1871px;top:1030px;height:17px;line-height:17px;letter-spacing:-1.003px;color:#9a9a96;"><span id="t203">CLOUD</span></div>
<div style="left:748px;top:280px;width:752px;height:571px;background:#9a9a9a;border:1px solid #8a8a8a"></div>
<div style="left:755px;top:310px;width:738px;height:534px;background:#bcc7d8;border:1px solid #a9b6cc"></div>
<svg style="left:758px;top:288px;" width="17" height="15" viewBox="0 0 17 15"><rect x="0.5" y="4.5" width="11" height="10" fill="#fff" stroke="#3a5ab0"/><path d="M2.5 8.5H9M2.5 10.5H9M2.5 12.5H9" stroke="#3a5ab0"/><path d="M5 6L12 1.5L15 3L8 7.5Z" fill="#c8b868" stroke="#6a5a20" stroke-width=".7"/><rect x="14.5" y="0.5" width="2" height="6" fill="#222"/></svg>
<div class="t ui" style="left:723px;width:800px;text-align:center;top:281px;height:29px;line-height:29px;letter-spacing:-0.496px;font-size:15px;color:#262626;"><span id="t204">Exchange : Features</span></div>
<div style="left:1462px;top:281px;width:31px;height:20px;background:#c75050"></div>
<svg style="left:1473px;top:287px;" width="9" height="9" viewBox="0 0 9 9"><path d="M0.8 0.8L8.2 8.2M8.2 0.8L0.8 8.2" stroke="#fff" stroke-width="1.6"/></svg>
<div style="left:760px;top:338px;width:729px;height:2px;background:#f4f7fb"></div>
<div style="left:825px;top:321px;width:69px;height:19px;background:#fff"></div>
<div class="t ui" style="left:766px;top:320px;height:18px;line-height:18px;letter-spacing:-0.070px;"><span id="t205">Attributes</span></div>
<div class="t ui" style="left:830.5px;top:320px;height:18px;line-height:18px;letter-spacing:-0.170px;"><span id="t206">Operations</span></div>
<div style="left:782px;top:351px;width:690px;height:177px;background:#fff;border:1px solid #dfe5ee"></div>
<div style="left:783px;top:375px;width:670px;height:152px;overflow:hidden">
<div style="left:0px;top:91px;width:670px;height:20px;background:#fff1c1;border:1px dotted #222"></div>
<svg style="left:3px;top:-5px;" width="16" height="12" viewBox="0 0 16 12"><path d="M0.5 3.5H6M1.5 5.5H6M0.5 7.5H6" stroke="#b4b49a" stroke-width="1"/><path d="M11 0.5L15.2 4L11 6.2L6.8 4Z" fill="#ecaaf0"/><path d="M6.8 4L11 6.2V11.3L6.8 7.6Z" fill="#c866d4"/><path d="M15.2 4L11 6.2V11.3L15.2 7.6Z" fill="#8a3a9c"/></svg>
<div class="t ui" style="left:19.5px;top:-10px;height:20px;line-height:20px;"><span id="t207">GetStock</span></div>
<div class="t ui" style="left:160px;top:-10px;height:20px;line-height:20px;"><span id="t208">id: TStockID</span></div>
<div class="t ui" style="left:416px;top:-10px;height:20px;line-height:20px;"><span id="t209">Stock*</span></div>
<div class="t ui" style="left:541px;top:-10px;height:20px;line-height:20px;letter-spacing:-0.281px;"><span id="t210">Public</span></div>
<svg style="left:3px;top:15px;" width="16" height="12" viewBox="0 0 16 12"><path d="M0.5 3.5H6M1.5 5.5H6M0.5 7.5H6" stroke="#b4b49a" stroke-width="1"/><path d="M11 0.5L15.2 4L11 6.2L6.8 4Z" fill="#ecaaf0"/><path d="M6.8 4L11 6.2V11.3L6.8 7.6Z" fill="#c866d4"/><path d="M15.2 4L11 6.2V11.3L15.2 7.6Z" fill="#8a3a9c"/></svg>
<div class="t ui" style="left:19.5px;top:10px;height:20px;line-height:20px;letter-spacing:-0.314px;"><span id="t211">GetStockVolume</span></div>
<div class="t ui" style="left:416px;top:10px;height:20px;line-height:20px;letter-spacing:-1.000px;"><span id="t212">UINT</span></div>
<div class="t ui" style="left:541px;top:10px;height:20px;line-height:20px;letter-spacing:-0.281px;"><span id="t213">Public</span></div>
<svg style="left:3px;top:35px;" width="16" height="12" viewBox="0 0 16 12"><path d="M0.5 3.5H6M1.5 5.5H6M0.5 7.5H6" stroke="#b4b49a" stroke-width="1"/><path d="M11 0.5L15.2 4L11 6.2L6.8 4Z" fill="#ecaaf0"/><path d="M6.8 4L11 6.2V11.3L6.8 7.6Z" fill="#c866d4"/><path d="M15.2 4L11 6.2V11.3L15.2 7.6Z" fill="#8a3a9c"/></svg>
<div class="t ui" style="left:19.5px;top:30px;height:20px;line-height:20px;letter-spacing:-0.340px;"><span id="t214">Open</span></div>
<div class="t ui" style="left:416px;top:30px;height:20px;line-height:20px;letter-spacing:0.078px;"><span id="t215">bool</span></div>
<div class="t ui" style="left:541px;top:30px;height:20px;line-height:20px;letter-spacing:-0.281px;"><span id="t216">Public</span></div>
<svg style="left:3px;top:55px;" width="16" height="12" viewBox="0 0 16 12"><path d="M0.5 3.5H6M1.5 5.5H6M0.5 7.5H6" stroke="#b4b49a" stroke-width="1"/><path d="M11 0.5L15.2 4L11 6.2L6.8 4Z" fill="#ecaaf0"/><path d="M6.8 4L11 6.2V11.3L6.8 7.6Z" fill="#c866d4"/><path d="M15.2 4L11 6.2V11.3L15.2 7.6Z" fill="#8a3a9c"/></svg>
<div class="t ui" style="left:19.5px;top:50px;height:20px;line-height:20px;letter-spacing:-0.270px;"><span id="t217">RegisterAccount</span></div>
<div class="t ui" style="left:160px;top:50px;height:20px;line-height:20px;letter-spacing:-0.218px;"><span id="t218">acct: Account*</span></div>
<div class="t ui" style="left:416px;top:50px;height:20px;line-height:20px;letter-spacing:-0.381px;"><span id="t219">TAccountID</span></div>
<div class="t ui" style="left:541px;top:50px;height:20px;line-height:20px;letter-spacing:-0.281px;"><span id="t220">Public</span></div>
<svg style="left:3px;top:75px;" width="16" height="12" viewBox="0 0 16 12"><path d="M0.5 3.5H6M1.5 5.5H6M0.5 7.5H6" stroke="#b4b49a" stroke-width="1"/><path d="M11 0.5L15.2 4L11 6.2L6.8 4Z" fill="#ecaaf0"/><path d="M6.8 4L11 6.2V11.3L6.8 7.6Z" fill="#c866d4"/><path d="M15.2 4L11 6.2V11.3L15.2 7.6Z" fill="#8a3a9c"/></svg>
<div class="t ui" style="left:19.5px;top:70px;height:20px;line-height:20px;letter-spacing:-0.362px;"><span id="t221">RegisterStock</span></div>
<div class="t ui" style="left:160px;top:70px;height:20px;line-height:20px;letter-spacing:-0.258px;"><span id="t222">stock: Stock*</span></div>
<div class="t ui" style="left:416px;top:70px;height:20px;line-height:20px;letter-spacing:-0.668px;"><span id="t223">TStockID</span></div>
<div class="t ui" style="left:541px;top:70px;height:20px;line-height:20px;letter-spacing:-0.281px;"><span id="t224">Public</span></div>
<svg style="left:3px;top:95px;" width="16" height="12" viewBox="0 0 16 12"><path d="M0.5 3.5H6M1.5 5.5H6M0.5 7.5H6" stroke="#b4b49a" stroke-width="1"/><path d="M11 0.5L15.2 4L11 6.2L6.8 4Z" fill="#ecaaf0"/><path d="M6.8 4L11 6.2V11.3L6.8 7.6Z" fill="#c866d4"/><path d="M15.2 4L11 6.2V11.3L15.2 7.6Z" fill="#8a3a9c"/></svg>
<div class="t ui" style="left:19.5px;top:90px;height:20px;line-height:20px;letter-spacing:-0.754px;"><span id="t225">Sell</span></div>
<div class="t ui" style="left:416px;top:90px;height:20px;line-height:20px;letter-spacing:0.078px;"><span id="t226">bool</span></div>
<div class="t ui" style="left:541px;top:90px;height:20px;line-height:20px;letter-spacing:-0.281px;"><span id="t227">Public</span></div>
<svg style="left:3px;top:115px;" width="16" height="12" viewBox="0 0 16 12"><path d="M0.5 3.5H6M1.5 5.5H6M0.5 7.5H6" stroke="#b4b49a" stroke-width="1"/><path d="M11 0.5L15.2 4L11 6.2L6.8 4Z" fill="#ecaaf0"/><path d="M6.8 4L11 6.2V11.3L6.8 7.6Z" fill="#c866d4"/><path d="M15.2 4L11 6.2V11.3L15.2 7.6Z" fill="#8a3a9c"/></svg>
<div class="t ui" style="left:19.5px;top:110px;height:20px;line-height:20px;letter-spacing:-0.404px;"><span id="t228">TransmitStock</span></div>
<div class="t ui" style="left:160px;top:110px;height:20px;line-height:20px;letter-spacing:-0.265px;"><span id="t229">stock: IStock*</span></div>
<div class="t ui" style="left:416px;top:110px;height:20px;line-height:20px;letter-spacing:-0.668px;"><span id="t230">TStockID</span></div>
<div class="t ui" style="left:541px;top:110px;height:20px;line-height:20px;letter-spacing:-0.281px;"><span id="t231">Public</span></div>
<svg style="left:2px;top:135px;" width="7.38" height="9.84" viewBox="0 0 9 12"><path d="M2.2 5V3.2a2.3 2.3 0 0 1 4.6 0V5" fill="none" stroke="#3a3a9a" stroke-width="1.1"/><rect x="0.6" y="4.8" width="7.8" height="6.6" fill="#b9b5ee" stroke="#3a3a9a"/><path d="M4 7h1.4v2H3.4" fill="none" stroke="#fff" stroke-width="1"/></svg>
<svg style="left:3px;top:135px;" width="16" height="12" viewBox="0 0 16 12"><path d="M11 0.5L15.2 4L11 6.2L6.8 4Z" fill="#ecaaf0"/><path d="M6.8 4L11 6.2V11.3L6.8 7.6Z" fill="#c866d4"/><path d="M15.2 4L11 6.2V11.3L15.2 7.6Z" fill="#8a3a9c"/></svg>
<div class="t ui" style="left:19.5px;top:130px;height:20px;line-height:20px;letter-spacing:-0.283px;"><span id="t232">UpdateSector</span></div>
<div class="t ui" style="left:160px;top:130px;height:20px;line-height:20px;letter-spacing:-0.482px;"><span id="t233">sec: ESector, amount: INT</span></div>
<div class="t ui" style="left:416px;top:130px;height:20px;line-height:20px;letter-spacing:-0.254px;"><span id="t234">void</span></div>
<div class="t ui" style="left:541px;top:130px;height:20px;line-height:20px;letter-spacing:-0.194px;"><span id="t235">Private</span></div>
</div>
<div class="hdr" style="left:783px;top:353px;width:158px;height:22px;"></div>
<div class="t ui" style="left:788.5px;top:353px;height:22px;line-height:22px;letter-spacing:-1.004px;"><span id="t236">Name</span></div>
<div class="hdr" style="left:940px;top:353px;width:257px;height:22px;"></div>
<div class="t ui" style="left:945.5px;top:353px;height:22px;line-height:22px;letter-spacing:-0.703px;"><span id="t237">Parameters</span></div>
<div class="hdr" style="left:1196px;top:353px;width:126px;height:22px;"></div>
<div class="t ui" style="left:1201.5px;top:353px;height:22px;line-height:22px;letter-spacing:-0.423px;"><span id="t238">Return Type</span></div>
<div class="hdr" style="left:1321px;top:353px;width:45px;height:22px;"></div>
<div class="t ui" style="left:1326.5px;top:353px;height:22px;line-height:22px;letter-spacing:-0.806px;"><span id="t239">Scope</span></div>
<div class="hdr" style="left:1365px;top:353px;width:44px;height:22px;"></div>
<div class="t ui" style="left:1370.5px;top:353px;height:22px;line-height:22px;letter-spacing:-0.480px;"><span id="t240">Ster...</span></div>
<div class="hdr" style="left:1408px;top:353px;width:46px;height:22px;"></div>
<div class="t ui" style="left:1413.5px;top:353px;height:22px;line-height:22px;letter-spacing:-0.403px;"><span id="t241">Alias</span></div>
<svg style="left:928px;top:362px;" width="8" height="5" viewBox="0 0 8 5"><path d="M0.5 4.5L4 1L7.5 4.5" fill="none" stroke="#5a9ad0" stroke-width="1.2"/></svg>
<div style="left:940px;top:465px;width:267px;height:21px;background:linear-gradient(#fff,#e4e5f0);border:1px solid #aaadb8"></div>
<div class="t ui" style="left:943px;top:465px;height:21px;line-height:21px;letter-spacing:-0.395px;"><span id="t242">account: TAccountID, stock: TStockID, volume: UINT</span></div>
<div style="left:1453px;top:352px;width:18px;height:175px;background:#f0f0f0"></div>
<div style="left:1454px;top:461px;width:16px;height:48px;background:#cdcdcd"></div>
<svg style="left:1453px;top:352px;" width="18" height="17" viewBox="0 0 18 17"><path d="M5.5 10.5L9.0 7L12.5 10.5" fill="none" stroke="#505050" stroke-width="1.6"/></svg>
<svg style="left:1453px;top:510px;" width="18" height="17" viewBox="0 0 18 17"><path d="M5.5 6.5L9.0 10L12.5 6.5" fill="none" stroke="#505050" stroke-width="1.6"/></svg>
<div style="left:781px;top:545px;width:270px;height:255px;background:#fff;border:1px solid #dfe5ee"></div>
<div style="left:782px;top:546px;width:268px;height:18px;background:#f0f0f0"></div>
<div style="left:782px;top:632px;width:268px;height:17px;background:#f0f0f0"></div>
<div style="left:800px;top:564px;width:163px;height:17px;background:#bcc7d8"></div>
<div style="left:800px;top:580px;width:250px;height:1px;background:#f0f0f0"></div>
<div style="left:800px;top:597px;width:250px;height:1px;background:#f0f0f0"></div>
<div style="left:800px;top:614px;width:250px;height:1px;background:#f0f0f0"></div>
<div style="left:800px;top:631px;width:250px;height:1px;background:#f0f0f0"></div>
<div style="left:963px;top:564px;width:1px;height:235px;background:#f0f0f0"></div>
<svg style="left:789px;top:552px;" width="7" height="7" viewBox="0 0 7 7"><path d="M6.5 0.5V6.5H0.5Z" fill="#a0a0a0"/></svg>
<svg style="left:788px;top:636px;" width="7" height="9" viewBox="0 0 7 9"><path d="M0.5 0.5L6 4.5L0.5 8.5Z" fill="#fff" stroke="#a0a0a0"/></svg>
<div class="t th b" style="left:804px;top:547px;height:17px;line-height:17px;letter-spacing:-0.025px;color:#5f5f5f;font-size:12px;"><span id="t243">Method (Sell)</span></div>
<div class="t th b" style="left:804px;top:632px;height:17px;line-height:17px;letter-spacing:-0.170px;color:#5f5f5f;font-size:12px;"><span id="t244">Advanced</span></div>
<div class="t th" style="left:804px;top:564px;height:16px;line-height:16px;letter-spacing:-0.214px;"><span id="t245">Concurrency</span></div>
<div class="t th" style="left:968px;top:564px;height:16px;line-height:16px;letter-spacing:-0.300px;"><span id="t246">Sequential</span></div>
<div class="t th" style="left:804px;top:581px;height:16px;line-height:16px;letter-spacing:-0.426px;"><span id="t247">Virtual</span></div>
<div class="t th" style="left:968px;top:581px;height:16px;line-height:16px;letter-spacing:-0.305px;"><span id="t248">True</span></div>
<div class="t th" style="left:804px;top:598px;height:16px;line-height:16px;letter-spacing:-0.253px;"><span id="t249">Static</span></div>
<div class="t th" style="left:968px;top:598px;height:16px;line-height:16px;letter-spacing:-0.581px;"><span id="t250">False</span></div>
<div class="t th" style="left:804px;top:615px;height:16px;line-height:16px;letter-spacing:-0.403px;"><span id="t251">Modifiers</span></div>
<div style="left:1031px;top:565px;width:17px;height:15px;background:#e9e9e9;border:1px solid #b0b0b0"></div>
<svg style="left:1035px;top:569px;" width="9" height="7" viewBox="0 0 9 7"><path d="M1 1L4.5 5.5L8 1" fill="none" stroke="#444" stroke-width="1.6"/></svg>
<div style="left:1069px;top:545px;width:403px;height:21px;background:#3b4f74"></div>
<div style="left:1070px;top:547px;width:64px;height:19px;background:#fff;border-radius:3px 3px 0 0"></div>
<div class="t ui" style="left:1075px;top:547px;height:19px;line-height:19px;letter-spacing:-0.415px;"><span id="t252">Para<u>m</u>eters</span></div>
<div class="t ui w" style="left:1141px;top:547px;height:19px;line-height:19px;letter-spacing:-0.113px;"><span id="t253"><u>N</u>otes</span></div>
<div class="t ui w" style="left:1193px;top:547px;height:19px;line-height:19px;letter-spacing:-0.158px;"><span id="t254"><u>B</u>ehavior</span></div>
<div class="t ui w" style="left:1259px;top:547px;height:19px;line-height:19px;letter-spacing:-0.190px;"><span id="t255"><u>R</u>edefines</span></div>
<div class="t ui w" style="left:1325px;top:547px;height:19px;line-height:19px;letter-spacing:-0.269px;"><span id="t256">Pr<u>e</u></span></div>
<div class="t ui w" style="left:1363px;top:547px;height:19px;line-height:19px;letter-spacing:-0.185px;"><span id="t257">Pos<u>t</u></span></div>
<div class="t ui w" style="left:1406px;top:547px;height:19px;line-height:19px;letter-spacing:-0.090px;"><span id="t258">Tagged <u>V</u>...</span></div>
<div style="left:1069px;top:566px;width:403px;height:233px;background:#bcc7d8;border:2px solid #d3dcec;border-top:0"></div>
<div style="left:1077px;top:575px;width:197px;height:218px;background:#fff;border:1px solid #dfe5ee"></div>
<div class="hdr" style="left:1079px;top:577px;width:96px;height:23px;"></div>
<div class="hdr" style="left:1175px;top:577px;width:97px;height:23px;"></div>
<div class="t ui" style="left:1084px;top:578px;height:22px;line-height:22px;letter-spacing:-0.559px;"><span id="t259">Parameter</span></div>
<div class="t ui" style="left:1180px;top:578px;height:22px;line-height:22px;letter-spacing:-0.754px;"><span id="t260">Type</span></div>
<div class="t ui" style="left:1082px;top:599px;height:20px;line-height:20px;letter-spacing:-0.147px;"><span id="t261">account</span></div>
<div class="t ui" style="left:1178px;top:599px;height:20px;line-height:20px;letter-spacing:-0.381px;"><span id="t262">TAccountID</span></div>
<div class="t ui" style="left:1082px;top:619px;height:20px;line-height:20px;letter-spacing:-0.203px;"><span id="t263">stock</span></div>
<div class="t ui" style="left:1178px;top:619px;height:20px;line-height:20px;letter-spacing:-0.668px;"><span id="t264">TStockID</span></div>
<div class="t ui" style="left:1082px;top:639px;height:20px;line-height:20px;letter-spacing:-0.281px;"><span id="t265">volume</span></div>
<div class="t ui" style="left:1178px;top:639px;height:20px;line-height:20px;letter-spacing:-1.000px;"><span id="t266">UINT</span></div>
<div style="left:1175px;top:660px;width:96px;height:19px;background:#fff1c1"></div>
<div style="left:1079px;top:660px;width:95px;height:19px;background:#fff;border:1px solid #555"></div>
<div class="t ui i" style="left:1084px;top:661px;height:19px;line-height:19px;letter-spacing:-0.870px;color:#8a8a8a;"><span id="t267">New Parameter...</span></div>
<div style="left:1280px;top:575px;width:185px;height:218px;background:#fff;border:1px solid #dfe5ee"></div>
<div style="left:1281px;top:576px;width:183px;height:17px;background:#f0f0f0"></div>
<div style="left:1281px;top:593px;width:18px;height:119px;background:#f0f0f0"></div>
<div style="left:1299px;top:593px;width:105px;height:17px;background:#bcc7d8"></div>
<div style="left:1299px;top:609px;width:165px;height:1px;background:#f0f0f0"></div>
<div style="left:1299px;top:626px;width:165px;height:1px;background:#f0f0f0"></div>
<div style="left:1299px;top:643px;width:165px;height:1px;background:#f0f0f0"></div>
<div style="left:1299px;top:660px;width:165px;height:1px;background:#f0f0f0"></div>
<div style="left:1299px;top:677px;width:165px;height:1px;background:#f0f0f0"></div>
<div style="left:1299px;top:694px;width:165px;height:1px;background:#f0f0f0"></div>
<div style="left:1299px;top:711px;width:165px;height:1px;background:#f0f0f0"></div>
<div style="left:1404px;top:593px;width:1px;height:199px;background:#f0f0f0"></div>
<svg style="left:1288px;top:581px;" width="7" height="7" viewBox="0 0 7 7"><path d="M6.5 0.5V6.5H0.5Z" fill="#a0a0a0"/></svg>
<div class="t th b" style="left:1303px;top:576px;height:17px;line-height:17px;letter-spacing:-0.191px;color:#5f5f5f;font-size:12px;"><span id="t268">Parameter</span></div>
<div class="t th" style="left:1303px;top:593px;height:16px;line-height:16px;letter-spacing:-0.172px;color:#6d6d6d;"><span id="t269">Default Value</span></div>
<div class="t th" style="left:1303px;top:610px;height:16px;line-height:16px;letter-spacing:-0.320px;color:#6d6d6d;"><span id="t270">Stereotype</span></div>
<div class="t th" style="left:1303px;top:627px;height:16px;line-height:16px;letter-spacing:-0.569px;color:#6d6d6d;"><span id="t271">Alias</span></div>
<div class="t th" style="left:1303px;top:644px;height:16px;line-height:16px;letter-spacing:-0.267px;color:#6d6d6d;"><span id="t272">Direction</span></div>
<div class="t th" style="left:1303px;top:661px;height:16px;line-height:16px;letter-spacing:-0.298px;color:#6d6d6d;"><span id="t273">Fixed Value</span></div>
<div class="t th" style="left:1303px;top:678px;height:16px;line-height:16px;letter-spacing:-0.311px;color:#6d6d6d;"><span id="t274">Multiplicity</span></div>
<div class="t th" style="left:1303px;top:695px;height:16px;line-height:16px;letter-spacing:-0.350px;color:#6d6d6d;"><span id="t275">Notes</span></div>
<div class="t th" style="left:1409px;top:661px;height:16px;line-height:16px;letter-spacing:-0.581px;color:#6d6d6d;"><span id="t276">False</span></div>
<div class="t th" style="left:1355px;top:819px;height:18px;line-height:18px;letter-spacing:-0.425px;"><span id="t277">Close</span></div>
<div class="t th" style="left:1438px;top:819px;height:18px;line-height:18px;letter-spacing:-0.406px;"><span id="t278">Help</span></div>
</body></html>
